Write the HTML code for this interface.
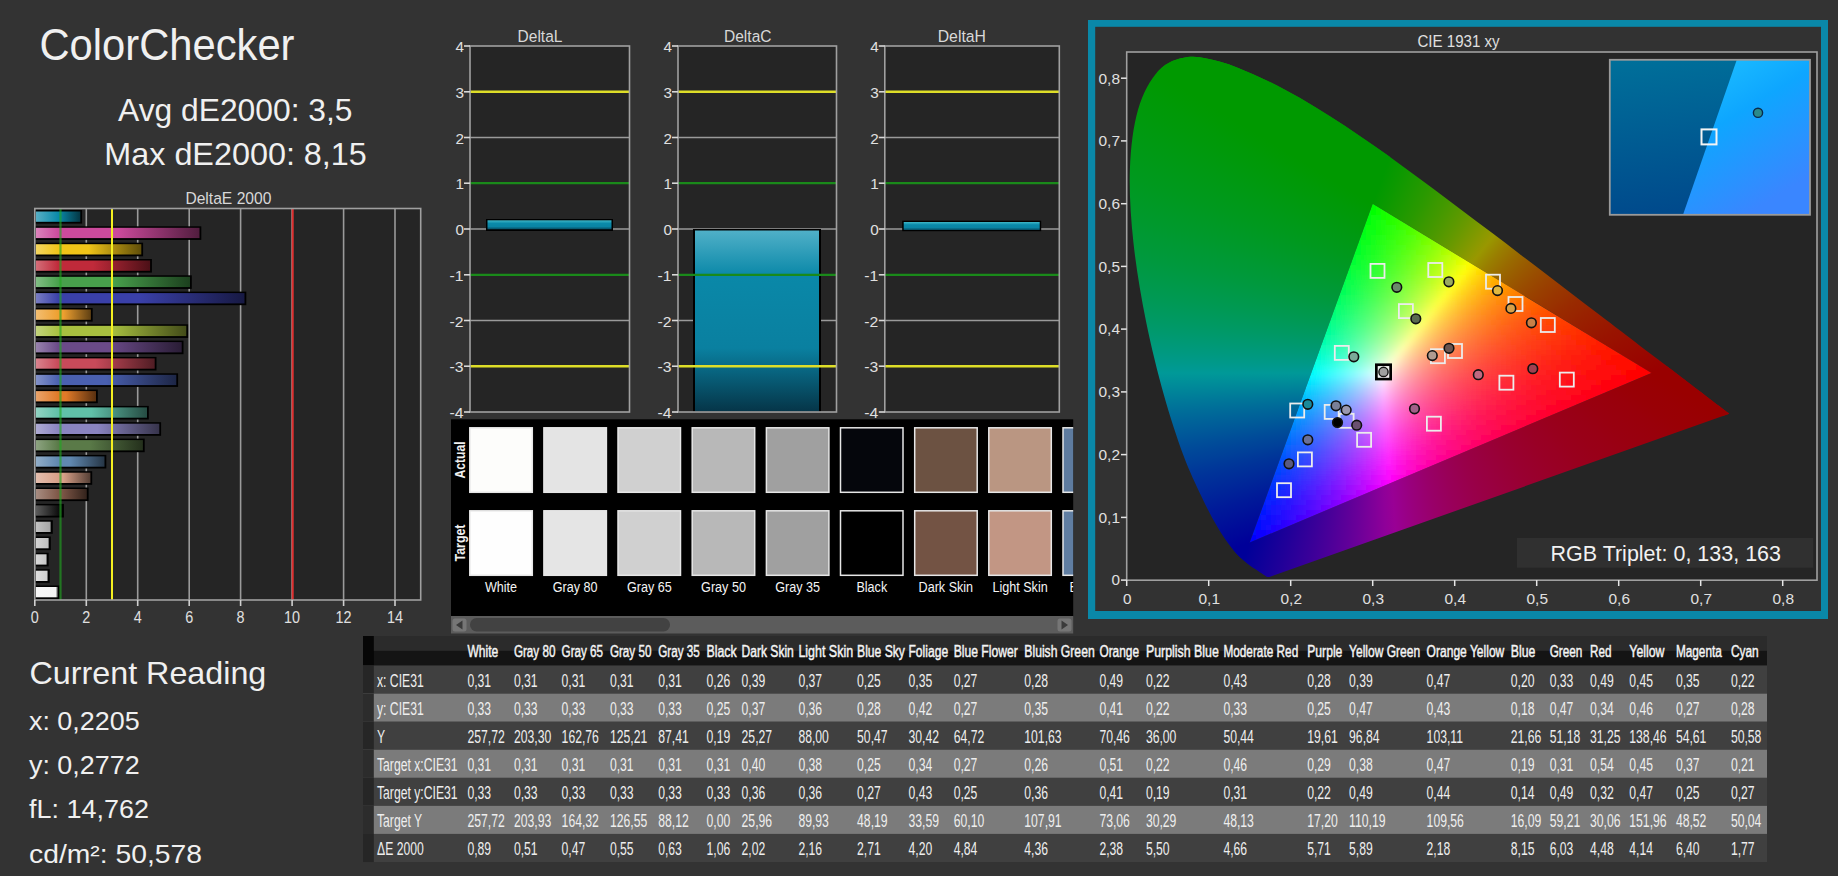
<!DOCTYPE html>
<html><head><meta charset="utf-8"><style>
html,body{margin:0;padding:0;background:#333333;width:1838px;height:876px;overflow:hidden;font-family:"Liberation Sans", sans-serif;}
svg{position:absolute;left:0;top:0;}
</style></head><body>
<svg width="1838" height="876" viewBox="0 0 1838 876" font-family='"Liberation Sans", sans-serif'>
<defs><linearGradient id="bg0" x1="0" x2="1" y1="0" y2="0"><stop offset="0" stop-color="#58afc5"/><stop offset="0.505" stop-color="#0a8aaa"/><stop offset="0.505" stop-color="#0a8aaa"/><stop offset="1" stop-color="#043744"/></linearGradient><linearGradient id="bg1" x1="0" x2="1" y1="0" y2="0"><stop offset="0" stop-color="#dc83bb"/><stop offset="0.140" stop-color="#cc4a9c"/><stop offset="0.500" stop-color="#cc4a9c"/><stop offset="1" stop-color="#511d3e"/></linearGradient><linearGradient id="bg2" x1="0" x2="1" y1="0" y2="0"><stop offset="0" stop-color="#f4d661"/><stop offset="0.216" stop-color="#f0c418"/><stop offset="0.500" stop-color="#f0c418"/><stop offset="1" stop-color="#604e09"/></linearGradient><linearGradient id="bg3" x1="0" x2="1" y1="0" y2="0"><stop offset="0" stop-color="#d46e79"/><stop offset="0.200" stop-color="#c02a3a"/><stop offset="0.500" stop-color="#c02a3a"/><stop offset="1" stop-color="#4c1017"/></linearGradient><linearGradient id="bg4" x1="0" x2="1" y1="0" y2="0"><stop offset="0" stop-color="#82be85"/><stop offset="0.148" stop-color="#48a04c"/><stop offset="0.500" stop-color="#48a04c"/><stop offset="1" stop-color="#1c401e"/></linearGradient><linearGradient id="bg5" x1="0" x2="1" y1="0" y2="0"><stop offset="0" stop-color="#797dc3"/><stop offset="0.110" stop-color="#3a40a8"/><stop offset="0.500" stop-color="#3a40a8"/><stop offset="1" stop-color="#171943"/></linearGradient><linearGradient id="bg6" x1="0" x2="1" y1="0" y2="0"><stop offset="0" stop-color="#f3be72"/><stop offset="0.410" stop-color="#eea030"/><stop offset="0.500" stop-color="#eea030"/><stop offset="1" stop-color="#5f4013"/></linearGradient><linearGradient id="bg7" x1="0" x2="1" y1="0" y2="0"><stop offset="0" stop-color="#c3d47d"/><stop offset="0.152" stop-color="#a8c040"/><stop offset="0.500" stop-color="#a8c040"/><stop offset="1" stop-color="#434c19"/></linearGradient><linearGradient id="bg8" x1="0" x2="1" y1="0" y2="0"><stop offset="0" stop-color="#9983ae"/><stop offset="0.157" stop-color="#6a4a88"/><stop offset="0.500" stop-color="#6a4a88"/><stop offset="1" stop-color="#2a1d36"/></linearGradient><linearGradient id="bg9" x1="0" x2="1" y1="0" y2="0"><stop offset="0" stop-color="#d9838e"/><stop offset="0.192" stop-color="#c84a5a"/><stop offset="0.500" stop-color="#c84a5a"/><stop offset="1" stop-color="#501d24"/></linearGradient><linearGradient id="bg10" x1="0" x2="1" y1="0" y2="0"><stop offset="0" stop-color="#8392c9"/><stop offset="0.163" stop-color="#4a60b0"/><stop offset="0.500" stop-color="#4a60b0"/><stop offset="1" stop-color="#1d2646"/></linearGradient><linearGradient id="bg11" x1="0" x2="1" y1="0" y2="0"><stop offset="0" stop-color="#e9a46c"/><stop offset="0.376" stop-color="#e07a28"/><stop offset="0.500" stop-color="#e07a28"/><stop offset="1" stop-color="#593010"/></linearGradient><linearGradient id="bg12" x1="0" x2="1" y1="0" y2="0"><stop offset="0" stop-color="#92d4c3"/><stop offset="0.205" stop-color="#60c0a8"/><stop offset="0.500" stop-color="#60c0a8"/><stop offset="1" stop-color="#264c43"/></linearGradient><linearGradient id="bg13" x1="0" x2="1" y1="0" y2="0"><stop offset="0" stop-color="#afabd4"/><stop offset="0.185" stop-color="#8a84c0"/><stop offset="0.500" stop-color="#8a84c0"/><stop offset="1" stop-color="#37344c"/></linearGradient><linearGradient id="bg14" x1="0" x2="1" y1="0" y2="0"><stop offset="0" stop-color="#8ea482"/><stop offset="0.213" stop-color="#5a7a48"/><stop offset="0.500" stop-color="#5a7a48"/><stop offset="1" stop-color="#24301c"/></linearGradient><linearGradient id="bg15" x1="0" x2="1" y1="0" y2="0"><stop offset="0" stop-color="#92aec9"/><stop offset="0.330" stop-color="#6088b0"/><stop offset="0.500" stop-color="#6088b0"/><stop offset="1" stop-color="#263646"/></linearGradient><linearGradient id="bg16" x1="0" x2="1" y1="0" y2="0"><stop offset="0" stop-color="#e4beae"/><stop offset="0.414" stop-color="#d8a088"/><stop offset="0.500" stop-color="#d8a088"/><stop offset="1" stop-color="#564036"/></linearGradient><linearGradient id="bg17" x1="0" x2="1" y1="0" y2="0"><stop offset="0" stop-color="#a88d82"/><stop offset="0.443" stop-color="#805848"/><stop offset="0.500" stop-color="#805848"/><stop offset="1" stop-color="#33231c"/></linearGradient><linearGradient id="bg18" x1="0" x2="1" y1="0" y2="0"><stop offset="0" stop-color="#5c5c5c"/><stop offset="0.843" stop-color="#101010"/><stop offset="0.843" stop-color="#101010"/><stop offset="1" stop-color="#060606"/></linearGradient><linearGradient id="bg19" x1="0" x2="1" y1="0" y2="0"><stop offset="0" stop-color="#c3c3c3"/><stop offset="0.900" stop-color="#a8a8a8"/><stop offset="0.900" stop-color="#a8a8a8"/><stop offset="1" stop-color="#434343"/></linearGradient><linearGradient id="bg20" x1="0" x2="1" y1="0" y2="0"><stop offset="0" stop-color="#d4d4d4"/><stop offset="0.900" stop-color="#c0c0c0"/><stop offset="0.900" stop-color="#c0c0c0"/><stop offset="1" stop-color="#4c4c4c"/></linearGradient><linearGradient id="bg21" x1="0" x2="1" y1="0" y2="0"><stop offset="0" stop-color="#d9d9d9"/><stop offset="0.900" stop-color="#c8c8c8"/><stop offset="0.900" stop-color="#c8c8c8"/><stop offset="1" stop-color="#505050"/></linearGradient><linearGradient id="bg22" x1="0" x2="1" y1="0" y2="0"><stop offset="0" stop-color="#dfdfdf"/><stop offset="0.900" stop-color="#d0d0d0"/><stop offset="0.900" stop-color="#d0d0d0"/><stop offset="1" stop-color="#535353"/></linearGradient><linearGradient id="bg23" x1="0" x2="1" y1="0" y2="0"><stop offset="0" stop-color="#f7f7f7"/><stop offset="0.900" stop-color="#f4f4f4"/><stop offset="0.900" stop-color="#f4f4f4"/><stop offset="1" stop-color="#616161"/></linearGradient><linearGradient id="gth" x1="0" x2="0" y1="0" y2="1"><stop offset="0" stop-color="#40b8c8"/><stop offset="0.35" stop-color="#0a8aaa"/><stop offset="0.7" stop-color="#0a84a4"/><stop offset="1" stop-color="#064a60"/></linearGradient><linearGradient id="gtv" x1="0" x2="0" y1="0" y2="1"><stop offset="0" stop-color="#50b0c8"/><stop offset="0.25" stop-color="#0a88a8"/><stop offset="0.65" stop-color="#0a80a0"/><stop offset="1" stop-color="#053548"/></linearGradient><clipPath id="triclip"><polygon points="1651.5,373.1 1372.7,203.7 1249.7,542.5"/></clipPath><filter id="blur" x="-5%" y="-5%" width="110%" height="110%"><feGaussianBlur stdDeviation="2.8"/></filter><linearGradient id="insL" x1="0" y1="0" x2="0.15" y2="1"><stop offset="0" stop-color="#00709a"/><stop offset="1" stop-color="#004a8c"/></linearGradient><linearGradient id="insR" x1="0" y1="0" x2="0.5" y2="1"><stop offset="0" stop-color="#20c4ff"/><stop offset="0.45" stop-color="#0ea6ff"/><stop offset="1" stop-color="#3a86ff"/></linearGradient></defs>
<text x="39.5" y="60.3" font-size="44.86" textLength="255.0" lengthAdjust="spacingAndGlyphs" fill="#f0f0f0" font-weight="normal" >ColorChecker</text><text x="118.0" y="120.6" font-size="31.43" textLength="234.5" lengthAdjust="spacingAndGlyphs" fill="#f0f0f0" font-weight="normal" >Avg dE2000: 3,5</text><text x="104.3" y="164.6" font-size="31.43" textLength="262.5" lengthAdjust="spacingAndGlyphs" fill="#f0f0f0" font-weight="normal" >Max dE2000: 8,15</text><text x="185.4" y="204.0" font-size="15.71" textLength="86.0" lengthAdjust="spacingAndGlyphs" fill="#d8d8d8" font-weight="normal" >DeltaE 2000</text><rect x="34.8" y="208.5" width="385.9" height="391.5" fill="#252525"/><line x1="86.3" y1="208.5" x2="86.3" y2="600" stroke="#9a9a9a" stroke-width="1.6"/><line x1="137.7" y1="208.5" x2="137.7" y2="600" stroke="#9a9a9a" stroke-width="1.6"/><line x1="189.2" y1="208.5" x2="189.2" y2="600" stroke="#9a9a9a" stroke-width="1.6"/><line x1="240.6" y1="208.5" x2="240.6" y2="600" stroke="#9a9a9a" stroke-width="1.6"/><line x1="292.1" y1="208.5" x2="292.1" y2="600" stroke="#9a9a9a" stroke-width="1.6"/><line x1="343.6" y1="208.5" x2="343.6" y2="600" stroke="#9a9a9a" stroke-width="1.6"/><line x1="395.0" y1="208.5" x2="395.0" y2="600" stroke="#9a9a9a" stroke-width="1.6"/><rect x="34.8" y="210.0" width="47.3" height="13.6" fill="#000"/><rect x="35.8" y="211.5" width="44.5" height="10.3" fill="url(#bg0)"/><rect x="34.8" y="226.3" width="166.5" height="13.6" fill="#000"/><rect x="35.8" y="227.8" width="163.7" height="10.3" fill="url(#bg1)"/><rect x="34.8" y="242.7" width="108.3" height="13.6" fill="#000"/><rect x="35.8" y="244.2" width="105.5" height="10.3" fill="url(#bg2)"/><rect x="34.8" y="259.0" width="117.1" height="13.6" fill="#000"/><rect x="35.8" y="260.5" width="114.3" height="10.3" fill="url(#bg3)"/><rect x="34.8" y="275.3" width="157.0" height="13.6" fill="#000"/><rect x="35.8" y="276.8" width="154.2" height="10.3" fill="url(#bg4)"/><rect x="34.8" y="291.6" width="211.5" height="13.6" fill="#000"/><rect x="35.8" y="293.1" width="208.7" height="10.3" fill="url(#bg5)"/><rect x="34.8" y="308.0" width="57.9" height="13.6" fill="#000"/><rect x="35.8" y="309.5" width="55.1" height="10.3" fill="url(#bg6)"/><rect x="34.8" y="324.3" width="153.3" height="13.6" fill="#000"/><rect x="35.8" y="325.8" width="150.5" height="10.3" fill="url(#bg7)"/><rect x="34.8" y="340.6" width="148.7" height="13.6" fill="#000"/><rect x="35.8" y="342.1" width="145.9" height="10.3" fill="url(#bg8)"/><rect x="34.8" y="356.9" width="121.7" height="13.6" fill="#000"/><rect x="35.8" y="358.4" width="118.9" height="10.3" fill="url(#bg9)"/><rect x="34.8" y="373.3" width="143.3" height="13.6" fill="#000"/><rect x="35.8" y="374.8" width="140.5" height="10.3" fill="url(#bg10)"/><rect x="34.8" y="389.6" width="63.0" height="13.6" fill="#000"/><rect x="35.8" y="391.1" width="60.2" height="10.3" fill="url(#bg11)"/><rect x="34.8" y="405.9" width="114.0" height="13.6" fill="#000"/><rect x="35.8" y="407.4" width="111.2" height="10.3" fill="url(#bg12)"/><rect x="34.8" y="422.2" width="126.3" height="13.6" fill="#000"/><rect x="35.8" y="423.7" width="123.5" height="10.3" fill="url(#bg13)"/><rect x="34.8" y="438.6" width="109.9" height="13.6" fill="#000"/><rect x="35.8" y="440.1" width="107.1" height="10.3" fill="url(#bg14)"/><rect x="34.8" y="454.9" width="71.5" height="13.6" fill="#000"/><rect x="35.8" y="456.4" width="68.7" height="10.3" fill="url(#bg15)"/><rect x="34.8" y="471.2" width="57.4" height="13.6" fill="#000"/><rect x="35.8" y="472.7" width="54.6" height="10.3" fill="url(#bg16)"/><rect x="34.8" y="487.5" width="53.8" height="13.6" fill="#000"/><rect x="35.8" y="489.0" width="51.0" height="10.3" fill="url(#bg17)"/><rect x="34.8" y="503.9" width="29.1" height="13.6" fill="#000"/><rect x="35.8" y="505.4" width="26.3" height="10.3" fill="url(#bg18)"/><rect x="34.8" y="520.2" width="18.0" height="13.6" fill="#000"/><rect x="35.8" y="521.7" width="15.2" height="10.3" fill="url(#bg19)"/><rect x="34.8" y="536.5" width="16.0" height="13.6" fill="#000"/><rect x="35.8" y="538.0" width="13.2" height="10.3" fill="url(#bg20)"/><rect x="34.8" y="552.8" width="13.9" height="13.6" fill="#000"/><rect x="35.8" y="554.3" width="11.1" height="10.3" fill="url(#bg21)"/><rect x="34.8" y="569.2" width="14.9" height="13.6" fill="#000"/><rect x="35.8" y="570.7" width="12.1" height="10.3" fill="url(#bg22)"/><rect x="34.8" y="585.5" width="24.7" height="13.6" fill="#000"/><rect x="35.8" y="587.0" width="21.9" height="10.3" fill="url(#bg23)"/><line x1="60.5" y1="208.5" x2="60.5" y2="600" stroke="#20a820" stroke-width="2.2" opacity="0.62"/><line x1="112.0" y1="208.5" x2="112.0" y2="600" stroke="#f4f020" stroke-width="2"/><line x1="292.7" y1="208.5" x2="292.7" y2="600" stroke="#e03030" stroke-width="2"/><rect x="34.8" y="208.5" width="385.9" height="391.5" fill="none" stroke="#a0a0a0" stroke-width="1.6"/><line x1="34.8" y1="600" x2="34.8" y2="606" stroke="#d0d0d0" stroke-width="1.6"/><text x="30.8" y="623.0" font-size="15.71" textLength="8.0" lengthAdjust="spacingAndGlyphs" fill="#e0e0e0" font-weight="normal" >0</text><line x1="86.3" y1="600" x2="86.3" y2="606" stroke="#d0d0d0" stroke-width="1.6"/><text x="82.3" y="623.0" font-size="15.71" textLength="8.0" lengthAdjust="spacingAndGlyphs" fill="#e0e0e0" font-weight="normal" >2</text><line x1="137.7" y1="600" x2="137.7" y2="606" stroke="#d0d0d0" stroke-width="1.6"/><text x="133.7" y="623.0" font-size="15.71" textLength="8.0" lengthAdjust="spacingAndGlyphs" fill="#e0e0e0" font-weight="normal" >4</text><line x1="189.2" y1="600" x2="189.2" y2="606" stroke="#d0d0d0" stroke-width="1.6"/><text x="185.2" y="623.0" font-size="15.71" textLength="8.0" lengthAdjust="spacingAndGlyphs" fill="#e0e0e0" font-weight="normal" >6</text><line x1="240.6" y1="600" x2="240.6" y2="606" stroke="#d0d0d0" stroke-width="1.6"/><text x="236.6" y="623.0" font-size="15.71" textLength="8.0" lengthAdjust="spacingAndGlyphs" fill="#e0e0e0" font-weight="normal" >8</text><line x1="292.1" y1="600" x2="292.1" y2="606" stroke="#d0d0d0" stroke-width="1.6"/><text x="284.1" y="623.0" font-size="15.71" textLength="16.0" lengthAdjust="spacingAndGlyphs" fill="#e0e0e0" font-weight="normal" >10</text><line x1="343.6" y1="600" x2="343.6" y2="606" stroke="#d0d0d0" stroke-width="1.6"/><text x="335.6" y="623.0" font-size="15.71" textLength="16.0" lengthAdjust="spacingAndGlyphs" fill="#e0e0e0" font-weight="normal" >12</text><line x1="395.0" y1="600" x2="395.0" y2="606" stroke="#d0d0d0" stroke-width="1.6"/><text x="387.0" y="623.0" font-size="15.71" textLength="16.0" lengthAdjust="spacingAndGlyphs" fill="#e0e0e0" font-weight="normal" >14</text><rect x="470" y="46" width="159.5" height="366" fill="#252525"/><line x1="470" y1="137.5" x2="629.5" y2="137.5" stroke="#9a9a9a" stroke-width="1.6"/><line x1="470" y1="229.0" x2="629.5" y2="229.0" stroke="#9a9a9a" stroke-width="1.6"/><line x1="470" y1="320.5" x2="629.5" y2="320.5" stroke="#9a9a9a" stroke-width="1.6"/><rect x="486" y="219" width="127" height="12" fill="#000"/><rect x="487.5" y="220.3" width="124" height="9" fill="url(#gth)"/><line x1="470" y1="183.2" x2="629.5" y2="183.2" stroke="#1a8a1a" stroke-width="2.2"/><line x1="470" y1="274.8" x2="629.5" y2="274.8" stroke="#1a8a1a" stroke-width="2.2"/><line x1="470" y1="91.8" x2="629.5" y2="91.8" stroke="#dede28" stroke-width="2.5"/><line x1="470" y1="366.2" x2="629.5" y2="366.2" stroke="#dede28" stroke-width="2.5"/><rect x="470" y="46" width="159.5" height="366" fill="none" stroke="#a0a0a0" stroke-width="1.6"/><line x1="464" y1="46.0" x2="470" y2="46.0" stroke="#d8d8d8" stroke-width="1.6"/><text x="455.5" y="52.2" font-size="14.71" textLength="8.5" lengthAdjust="spacingAndGlyphs" fill="#e0e0e0" font-weight="normal" >4</text><line x1="464" y1="91.8" x2="470" y2="91.8" stroke="#d8d8d8" stroke-width="1.6"/><text x="455.5" y="98.0" font-size="14.71" textLength="8.5" lengthAdjust="spacingAndGlyphs" fill="#e0e0e0" font-weight="normal" >3</text><line x1="464" y1="137.5" x2="470" y2="137.5" stroke="#d8d8d8" stroke-width="1.6"/><text x="455.5" y="143.7" font-size="14.71" textLength="8.5" lengthAdjust="spacingAndGlyphs" fill="#e0e0e0" font-weight="normal" >2</text><line x1="464" y1="183.2" x2="470" y2="183.2" stroke="#d8d8d8" stroke-width="1.6"/><text x="455.5" y="189.4" font-size="14.71" textLength="8.5" lengthAdjust="spacingAndGlyphs" fill="#e0e0e0" font-weight="normal" >1</text><line x1="464" y1="229.0" x2="470" y2="229.0" stroke="#d8d8d8" stroke-width="1.6"/><text x="455.5" y="235.2" font-size="14.71" textLength="8.5" lengthAdjust="spacingAndGlyphs" fill="#e0e0e0" font-weight="normal" >0</text><line x1="464" y1="274.8" x2="470" y2="274.8" stroke="#d8d8d8" stroke-width="1.6"/><text x="449.5" y="280.9" font-size="14.71" textLength="14.0" lengthAdjust="spacingAndGlyphs" fill="#e0e0e0" font-weight="normal" >-1</text><line x1="464" y1="320.5" x2="470" y2="320.5" stroke="#d8d8d8" stroke-width="1.6"/><text x="449.5" y="326.7" font-size="14.71" textLength="14.0" lengthAdjust="spacingAndGlyphs" fill="#e0e0e0" font-weight="normal" >-2</text><line x1="464" y1="366.2" x2="470" y2="366.2" stroke="#d8d8d8" stroke-width="1.6"/><text x="449.5" y="372.4" font-size="14.71" textLength="14.0" lengthAdjust="spacingAndGlyphs" fill="#e0e0e0" font-weight="normal" >-3</text><line x1="464" y1="412.0" x2="470" y2="412.0" stroke="#d8d8d8" stroke-width="1.6"/><text x="449.5" y="418.2" font-size="14.71" textLength="14.0" lengthAdjust="spacingAndGlyphs" fill="#e0e0e0" font-weight="normal" >-4</text><text x="517.6" y="41.5" font-size="16.43" textLength="44.8" lengthAdjust="spacingAndGlyphs" fill="#d8d8d8" font-weight="normal" >DeltaL</text><rect x="678" y="46" width="158.5" height="366" fill="#252525"/><line x1="678" y1="137.5" x2="836.5" y2="137.5" stroke="#9a9a9a" stroke-width="1.6"/><line x1="678" y1="229.0" x2="836.5" y2="229.0" stroke="#9a9a9a" stroke-width="1.6"/><line x1="678" y1="320.5" x2="836.5" y2="320.5" stroke="#9a9a9a" stroke-width="1.6"/><rect x="693" y="229" width="128" height="183" fill="#000"/><rect x="695" y="230.5" width="124" height="181" fill="url(#gtv)"/><line x1="678" y1="183.2" x2="836.5" y2="183.2" stroke="#1a8a1a" stroke-width="2.2"/><line x1="678" y1="274.8" x2="836.5" y2="274.8" stroke="#1a8a1a" stroke-width="2.2"/><line x1="678" y1="91.8" x2="836.5" y2="91.8" stroke="#dede28" stroke-width="2.5"/><line x1="678" y1="366.2" x2="836.5" y2="366.2" stroke="#dede28" stroke-width="2.5"/><rect x="678" y="46" width="158.5" height="366" fill="none" stroke="#a0a0a0" stroke-width="1.6"/><line x1="672" y1="46.0" x2="678" y2="46.0" stroke="#d8d8d8" stroke-width="1.6"/><text x="663.5" y="52.2" font-size="14.71" textLength="8.5" lengthAdjust="spacingAndGlyphs" fill="#e0e0e0" font-weight="normal" >4</text><line x1="672" y1="91.8" x2="678" y2="91.8" stroke="#d8d8d8" stroke-width="1.6"/><text x="663.5" y="98.0" font-size="14.71" textLength="8.5" lengthAdjust="spacingAndGlyphs" fill="#e0e0e0" font-weight="normal" >3</text><line x1="672" y1="137.5" x2="678" y2="137.5" stroke="#d8d8d8" stroke-width="1.6"/><text x="663.5" y="143.7" font-size="14.71" textLength="8.5" lengthAdjust="spacingAndGlyphs" fill="#e0e0e0" font-weight="normal" >2</text><line x1="672" y1="183.2" x2="678" y2="183.2" stroke="#d8d8d8" stroke-width="1.6"/><text x="663.5" y="189.4" font-size="14.71" textLength="8.5" lengthAdjust="spacingAndGlyphs" fill="#e0e0e0" font-weight="normal" >1</text><line x1="672" y1="229.0" x2="678" y2="229.0" stroke="#d8d8d8" stroke-width="1.6"/><text x="663.5" y="235.2" font-size="14.71" textLength="8.5" lengthAdjust="spacingAndGlyphs" fill="#e0e0e0" font-weight="normal" >0</text><line x1="672" y1="274.8" x2="678" y2="274.8" stroke="#d8d8d8" stroke-width="1.6"/><text x="657.5" y="280.9" font-size="14.71" textLength="14.0" lengthAdjust="spacingAndGlyphs" fill="#e0e0e0" font-weight="normal" >-1</text><line x1="672" y1="320.5" x2="678" y2="320.5" stroke="#d8d8d8" stroke-width="1.6"/><text x="657.5" y="326.7" font-size="14.71" textLength="14.0" lengthAdjust="spacingAndGlyphs" fill="#e0e0e0" font-weight="normal" >-2</text><line x1="672" y1="366.2" x2="678" y2="366.2" stroke="#d8d8d8" stroke-width="1.6"/><text x="657.5" y="372.4" font-size="14.71" textLength="14.0" lengthAdjust="spacingAndGlyphs" fill="#e0e0e0" font-weight="normal" >-3</text><line x1="672" y1="412.0" x2="678" y2="412.0" stroke="#d8d8d8" stroke-width="1.6"/><text x="657.5" y="418.2" font-size="14.71" textLength="14.0" lengthAdjust="spacingAndGlyphs" fill="#e0e0e0" font-weight="normal" >-4</text><text x="724.0" y="41.5" font-size="16.43" textLength="47.5" lengthAdjust="spacingAndGlyphs" fill="#d8d8d8" font-weight="normal" >DeltaC</text><rect x="884.8" y="46" width="174.5" height="366" fill="#252525"/><line x1="884.8" y1="137.5" x2="1059.3" y2="137.5" stroke="#9a9a9a" stroke-width="1.6"/><line x1="884.8" y1="229.0" x2="1059.3" y2="229.0" stroke="#9a9a9a" stroke-width="1.6"/><line x1="884.8" y1="320.5" x2="1059.3" y2="320.5" stroke="#9a9a9a" stroke-width="1.6"/><rect x="902.2" y="220.7" width="139" height="10.5" fill="#000"/><rect x="903.7" y="222" width="136" height="8" fill="url(#gth)"/><line x1="884.8" y1="183.2" x2="1059.3" y2="183.2" stroke="#1a8a1a" stroke-width="2.2"/><line x1="884.8" y1="274.8" x2="1059.3" y2="274.8" stroke="#1a8a1a" stroke-width="2.2"/><line x1="884.8" y1="91.8" x2="1059.3" y2="91.8" stroke="#dede28" stroke-width="2.5"/><line x1="884.8" y1="366.2" x2="1059.3" y2="366.2" stroke="#dede28" stroke-width="2.5"/><rect x="884.8" y="46" width="174.5" height="366" fill="none" stroke="#a0a0a0" stroke-width="1.6"/><line x1="878.8" y1="46.0" x2="884.8" y2="46.0" stroke="#d8d8d8" stroke-width="1.6"/><text x="870.3" y="52.2" font-size="14.71" textLength="8.5" lengthAdjust="spacingAndGlyphs" fill="#e0e0e0" font-weight="normal" >4</text><line x1="878.8" y1="91.8" x2="884.8" y2="91.8" stroke="#d8d8d8" stroke-width="1.6"/><text x="870.3" y="98.0" font-size="14.71" textLength="8.5" lengthAdjust="spacingAndGlyphs" fill="#e0e0e0" font-weight="normal" >3</text><line x1="878.8" y1="137.5" x2="884.8" y2="137.5" stroke="#d8d8d8" stroke-width="1.6"/><text x="870.3" y="143.7" font-size="14.71" textLength="8.5" lengthAdjust="spacingAndGlyphs" fill="#e0e0e0" font-weight="normal" >2</text><line x1="878.8" y1="183.2" x2="884.8" y2="183.2" stroke="#d8d8d8" stroke-width="1.6"/><text x="870.3" y="189.4" font-size="14.71" textLength="8.5" lengthAdjust="spacingAndGlyphs" fill="#e0e0e0" font-weight="normal" >1</text><line x1="878.8" y1="229.0" x2="884.8" y2="229.0" stroke="#d8d8d8" stroke-width="1.6"/><text x="870.3" y="235.2" font-size="14.71" textLength="8.5" lengthAdjust="spacingAndGlyphs" fill="#e0e0e0" font-weight="normal" >0</text><line x1="878.8" y1="274.8" x2="884.8" y2="274.8" stroke="#d8d8d8" stroke-width="1.6"/><text x="864.3" y="280.9" font-size="14.71" textLength="14.0" lengthAdjust="spacingAndGlyphs" fill="#e0e0e0" font-weight="normal" >-1</text><line x1="878.8" y1="320.5" x2="884.8" y2="320.5" stroke="#d8d8d8" stroke-width="1.6"/><text x="864.3" y="326.7" font-size="14.71" textLength="14.0" lengthAdjust="spacingAndGlyphs" fill="#e0e0e0" font-weight="normal" >-2</text><line x1="878.8" y1="366.2" x2="884.8" y2="366.2" stroke="#d8d8d8" stroke-width="1.6"/><text x="864.3" y="372.4" font-size="14.71" textLength="14.0" lengthAdjust="spacingAndGlyphs" fill="#e0e0e0" font-weight="normal" >-3</text><line x1="878.8" y1="412.0" x2="884.8" y2="412.0" stroke="#d8d8d8" stroke-width="1.6"/><text x="864.3" y="418.2" font-size="14.71" textLength="14.0" lengthAdjust="spacingAndGlyphs" fill="#e0e0e0" font-weight="normal" >-4</text><text x="937.7" y="41.5" font-size="16.43" textLength="48.3" lengthAdjust="spacingAndGlyphs" fill="#d8d8d8" font-weight="normal" >DeltaH</text><rect x="451" y="419.3" width="622.2" height="197" fill="#000"/><clipPath id="swclip"><rect x="451" y="419" width="622.2" height="200"/></clipPath><g clip-path="url(#swclip)"><rect x="469.8" y="427.8" width="62.5" height="64.5" fill="#fdfdfb" stroke="#e6e6e6" stroke-width="1.5"/><rect x="469.8" y="510.8" width="62.5" height="64.5" fill="#fefefe" stroke="#e6e6e6" stroke-width="1.5"/><text x="484.9" y="592.1" font-size="14.29" textLength="32.2" lengthAdjust="spacingAndGlyphs" fill="#f4f4f4" font-weight="normal" >White</text><rect x="543.9" y="427.8" width="62.5" height="64.5" fill="#e4e4e4" stroke="#e6e6e6" stroke-width="1.5"/><rect x="543.9" y="510.8" width="62.5" height="64.5" fill="#e5e5e5" stroke="#e6e6e6" stroke-width="1.5"/><text x="552.8" y="592.1" font-size="14.29" textLength="44.8" lengthAdjust="spacingAndGlyphs" fill="#f4f4f4" font-weight="normal" >Gray 80</text><rect x="618.0" y="427.8" width="62.5" height="64.5" fill="#d0d0d0" stroke="#e6e6e6" stroke-width="1.5"/><rect x="618.0" y="510.8" width="62.5" height="64.5" fill="#d0d0d0" stroke="#e6e6e6" stroke-width="1.5"/><text x="626.9" y="592.1" font-size="14.29" textLength="44.8" lengthAdjust="spacingAndGlyphs" fill="#f4f4f4" font-weight="normal" >Gray 65</text><rect x="692.2" y="427.8" width="62.5" height="64.5" fill="#b8b8b8" stroke="#e6e6e6" stroke-width="1.5"/><rect x="692.2" y="510.8" width="62.5" height="64.5" fill="#b8b8b8" stroke="#e6e6e6" stroke-width="1.5"/><text x="701.1" y="592.1" font-size="14.29" textLength="44.8" lengthAdjust="spacingAndGlyphs" fill="#f4f4f4" font-weight="normal" >Gray 50</text><rect x="766.4" y="427.8" width="62.5" height="64.5" fill="#a0a0a0" stroke="#e6e6e6" stroke-width="1.5"/><rect x="766.4" y="510.8" width="62.5" height="64.5" fill="#a0a0a0" stroke="#e6e6e6" stroke-width="1.5"/><text x="775.2" y="592.1" font-size="14.29" textLength="44.8" lengthAdjust="spacingAndGlyphs" fill="#f4f4f4" font-weight="normal" >Gray 35</text><rect x="840.5" y="427.8" width="62.5" height="64.5" fill="#05060c" stroke="#e6e6e6" stroke-width="1.5"/><rect x="840.5" y="510.8" width="62.5" height="64.5" fill="#000000" stroke="#e6e6e6" stroke-width="1.5"/><text x="856.4" y="592.1" font-size="14.29" textLength="30.8" lengthAdjust="spacingAndGlyphs" fill="#f4f4f4" font-weight="normal" >Black</text><rect x="914.7" y="427.8" width="62.5" height="64.5" fill="#6c5242" stroke="#e6e6e6" stroke-width="1.5"/><rect x="914.7" y="510.8" width="62.5" height="64.5" fill="#735344" stroke="#e6e6e6" stroke-width="1.5"/><text x="918.6" y="592.1" font-size="14.29" textLength="54.5" lengthAdjust="spacingAndGlyphs" fill="#f4f4f4" font-weight="normal" >Dark Skin</text><rect x="988.8" y="427.8" width="62.5" height="64.5" fill="#ba9682" stroke="#e6e6e6" stroke-width="1.5"/><rect x="988.8" y="510.8" width="62.5" height="64.5" fill="#c29684" stroke="#e6e6e6" stroke-width="1.5"/><text x="992.4" y="592.1" font-size="14.29" textLength="55.3" lengthAdjust="spacingAndGlyphs" fill="#f4f4f4" font-weight="normal" >Light Skin</text><rect x="1063.0" y="427.8" width="62.5" height="64.5" fill="#5e7ca0" stroke="#e6e6e6" stroke-width="1.5"/><rect x="1063.0" y="510.8" width="62.5" height="64.5" fill="#607ea2" stroke="#e6e6e6" stroke-width="1.5"/><text x="1069.4" y="592.1" font-size="14.29" textLength="49.7" lengthAdjust="spacingAndGlyphs" fill="#f4f4f4" font-weight="normal" >Blue Sky</text></g><text x="0" y="0" font-size="14" font-weight="bold" fill="#f0f0f0" textLength="37" lengthAdjust="spacingAndGlyphs" transform="translate(465.2,478.5) rotate(-90)">Actual</text><text x="0" y="0" font-size="14" font-weight="bold" fill="#f0f0f0" textLength="37" lengthAdjust="spacingAndGlyphs" transform="translate(465.2,561.5) rotate(-90)">Target</text><rect x="451" y="616" width="622.2" height="17.5" fill="#5c5c5c"/><rect x="470" y="618" width="200" height="13.5" rx="6.5" fill="#424242"/><rect x="452.5" y="618.5" width="14" height="13" rx="2.5" fill="#767676"/><path d="M462.5 620.5 L456 625 L462.5 629.5 Z" fill="#3a3a3a"/><rect x="1057.5" y="618.5" width="14" height="13" rx="2.5" fill="#767676"/><path d="M1061.5 620.5 L1068 625 L1061.5 629.5 Z" fill="#3a3a3a"/><rect x="1088" y="20" width="740" height="599" fill="#0a88a8"/><rect x="1095.2" y="26.8" width="725.8" height="584.2" fill="#323232"/><rect x="1126.7" y="52" width="690.3" height="528.2" fill="#252525"/><text x="1417.4" y="47.1" font-size="16.29" textLength="82.3" lengthAdjust="spacingAndGlyphs" fill="#e0e0e0" font-weight="normal" >CIE 1931 xy</text>
</svg>
<div style="position:absolute;left:1126px;top:52px;width:700px;height:540px;clip-path:path('M143.5 525.0C143.1 525.0 141.8 525.0 141.2 524.9C140.7 524.8 140.7 524.6 140.3 524.5C140.0 524.3 139.7 524.1 139.2 523.8C138.7 523.5 138.2 523.1 137.6 522.7C136.9 522.3 136.3 521.8 135.5 521.3C134.7 520.7 133.9 520.2 132.8 519.4C131.7 518.7 130.5 517.9 129.1 517.0C127.7 516.1 126.2 515.1 124.5 513.9C122.8 512.6 120.9 511.3 118.8 509.5C116.7 507.7 114.5 506.0 111.8 503.1C109.1 500.1 106.0 496.7 102.5 491.8C98.9 486.9 95.1 481.5 90.6 473.6C86.1 465.8 81.2 456.8 75.6 444.8C70.0 432.9 63.3 419.2 57.0 402.2C50.8 385.2 44.1 365.2 37.9 343.0C31.8 320.8 25.1 294.6 20.0 269.2C14.9 243.7 10.1 215.6 7.4 190.3C4.7 165.0 3.1 139.4 3.9 117.3C4.7 95.1 7.3 73.9 12.1 57.4C16.9 41.0 24.3 27.4 32.6 18.7C40.9 9.9 51.3 6.5 61.6 5.0C71.9 3.5 83.4 6.8 94.3 9.7C105.3 12.7 116.8 17.8 127.6 22.5C138.3 27.1 148.6 32.3 158.9 37.7C169.1 43.1 179.0 48.9 189.0 54.9C198.9 60.8 208.8 67.2 218.7 73.7C228.5 80.2 238.2 86.9 248.0 93.8C257.8 100.6 267.5 107.6 277.3 114.7C287.1 121.8 296.9 129.0 306.6 136.3C316.4 143.5 326.1 150.9 335.8 158.2C345.5 165.5 355.3 172.8 364.9 180.1C374.4 187.3 384.0 194.6 393.3 201.7C402.7 208.8 411.9 215.9 421.0 222.8C430.0 229.7 438.9 236.5 447.4 243.0C456.0 249.5 464.4 255.9 472.4 262.0C480.3 268.0 488.0 273.9 495.1 279.3C502.2 284.7 508.6 289.7 514.8 294.4C521.0 299.1 526.9 303.6 532.2 307.6C537.5 311.7 542.3 315.2 546.7 318.5C551.0 321.9 554.9 324.8 558.4 327.5C561.9 330.2 564.9 332.5 567.7 334.7C570.5 336.8 573.0 338.6 575.2 340.3C577.4 342.0 579.3 343.5 581.2 344.9C583.0 346.3 584.7 347.6 586.2 348.7C587.7 349.9 589.0 350.9 590.3 351.9C591.5 352.8 592.6 353.6 593.6 354.3C594.5 355.0 595.1 355.5 596.0 356.2C597.0 356.9 598.3 357.9 599.3 358.7C600.3 359.5 601.4 360.3 602.1 360.8C602.7 361.3 603.0 361.5 603.2 361.7Z');"><div style="position:absolute;left:0;top:0;width:700px;height:540px;background:conic-gradient(from 0deg at 525.5px 321.1px, rgb(0, 0, 153) 0deg, rgb(0, 0, 153) 247.14deg, rgb(0,0,153) 247.14deg, rgb(0,3,153) 247.87deg, rgb(0,7,153) 248.62deg, rgb(0,10,153) 249.39deg, rgb(0,14,153) 250.17deg, rgb(0,18,153) 250.98deg, rgb(0,22,153) 251.80deg, rgb(0,26,153) 252.64deg, rgb(0,31,153) 253.50deg, rgb(0,36,153) 254.38deg, rgb(0,41,153) 255.28deg, rgb(0,46,153) 256.20deg, rgb(0,51,153) 257.14deg, rgb(0,57,153) 258.10deg, rgb(0,64,153) 259.08deg, rgb(0,70,153) 260.08deg, rgb(0,77,153) 261.11deg, rgb(0,85,153) 262.15deg, rgb(0,93,153) 263.21deg, rgb(0,101,153) 264.29deg, rgb(0,110,153) 265.40deg, rgb(0,120,153) 266.52deg, rgb(0,131,153) 267.66deg, rgb(0,142,153) 268.82deg, rgb(0,153,152) 270.00deg, rgb(0,153,139) 271.20deg, rgb(0,153,128) 272.41deg, rgb(0,153,118) 273.64deg, rgb(0,153,108) 274.89deg, rgb(0,153,99) 276.15deg, rgb(0,153,91) 277.43deg, rgb(0,153,83) 278.71deg, rgb(0,153,76) 280.01deg, rgb(0,153,69) 281.32deg, rgb(0,153,62) 282.64deg, rgb(0,153,56) 283.97deg, rgb(0,153,51) 285.30deg, rgb(0,153,45) 286.64deg, rgb(0,153,40) 287.98deg, rgb(0,153,35) 289.33deg, rgb(0,153,30) 290.67deg, rgb(0,153,26) 292.02deg, rgb(0,153,22) 293.36deg, rgb(0,153,18) 294.70deg, rgb(0,153,14) 296.03deg, rgb(0,153,10) 297.36deg, rgb(0,153,7) 298.67deg, rgb(0,153,3) 299.98deg, rgb(0,153,0) 301.28deg, rgb(0, 153, 0) 360deg);clip-path:polygon(1270.5px -2668.3px, -777.1px 2971.6px, -3597.0px 1947.8px, -1549.4px -3692.0px);"></div><div style="position:absolute;left:0;top:0;width:700px;height:540px;background:conic-gradient(from 0deg at 123.7px 490.5px, rgb(0, 153, 0) 0deg, rgb(0,153,0) 19.95deg, rgb(6,153,0) 21.02deg, rgb(12,153,0) 22.09deg, rgb(19,153,0) 23.16deg, rgb(26,153,0) 24.25deg, rgb(33,153,0) 25.33deg, rgb(40,153,0) 26.43deg, rgb(48,153,0) 27.52deg, rgb(57,153,0) 28.62deg, rgb(65,153,0) 29.72deg, rgb(74,153,0) 30.82deg, rgb(84,153,0) 31.92deg, rgb(94,153,0) 33.03deg, rgb(105,153,0) 34.13deg, rgb(117,153,0) 35.22deg, rgb(129,153,0) 36.32deg, rgb(141,153,0) 37.41deg, rgb(153,151,0) 38.50deg, rgb(153,138,0) 39.58deg, rgb(153,126,0) 40.65deg, rgb(153,116,0) 41.72deg, rgb(153,106,0) 42.79deg, rgb(153,98,0) 43.84deg, rgb(153,90,0) 44.88deg, rgb(153,83,0) 45.92deg, rgb(153,76,0) 46.95deg, rgb(153,70,0) 47.96deg, rgb(153,64,0) 48.97deg, rgb(153,59,0) 49.96deg, rgb(153,54,0) 50.95deg, rgb(153,50,0) 51.92deg, rgb(153,45,0) 52.88deg, rgb(153,41,0) 53.82deg, rgb(153,38,0) 54.76deg, rgb(153,34,0) 55.68deg, rgb(153,31,0) 56.58deg, rgb(153,28,0) 57.48deg, rgb(153,25,0) 58.36deg, rgb(153,22,0) 59.23deg, rgb(153,19,0) 60.08deg, rgb(153,17,0) 60.92deg, rgb(153,14,0) 61.74deg, rgb(153,12,0) 62.56deg, rgb(153,10,0) 63.35deg, rgb(153,8,0) 64.14deg, rgb(153,6,0) 64.91deg, rgb(153,4,0) 65.67deg, rgb(153,2,0) 66.41deg, rgb(153,0,0) 67.14deg, rgb(153, 0, 0) 200deg, rgb(0, 153, 0) 200deg);clip-path:polygon(-2317.1px -1406.1px, 2810.5px 1709.4px, 4368.3px -854.4px, -759.4px -3970.0px);"></div><div style="position:absolute;left:0;top:0;width:700px;height:540px;background:conic-gradient(from 0deg at 246.7px 151.7px, rgb(153, 0, 0) 0deg, rgb(153,0,0) 121.28deg, rgb(153,0,2) 122.60deg, rgb(153,0,4) 123.95deg, rgb(153,0,5) 125.35deg, rgb(153,0,7) 126.80deg, rgb(153,0,10) 128.29deg, rgb(153,0,12) 129.82deg, rgb(153,0,14) 131.39deg, rgb(153,0,16) 133.01deg, rgb(153,0,19) 134.67deg, rgb(153,0,22) 136.38deg, rgb(153,0,24) 138.12deg, rgb(153,0,27) 139.89deg, rgb(153,0,30) 141.71deg, rgb(153,0,34) 143.55deg, rgb(153,0,37) 145.42deg, rgb(153,0,41) 147.32deg, rgb(153,0,45) 149.25deg, rgb(153,0,49) 151.19deg, rgb(153,0,54) 153.14deg, rgb(153,0,59) 155.10deg, rgb(153,0,64) 157.07deg, rgb(153,0,69) 159.04deg, rgb(153,0,75) 161.00deg, rgb(153,0,82) 162.96deg, rgb(153,0,89) 164.90deg, rgb(153,0,97) 166.82deg, rgb(153,0,105) 168.72deg, rgb(153,0,115) 170.60deg, rgb(153,0,125) 172.44deg, rgb(153,0,137) 174.26deg, rgb(153,0,149) 176.04deg, rgb(143,0,153) 177.78deg, rgb(130,0,153) 179.49deg, rgb(118,0,153) 181.15deg, rgb(106,0,153) 182.77deg, rgb(95,0,153) 184.35deg, rgb(85,0,153) 185.89deg, rgb(75,0,153) 187.38deg, rgb(66,0,153) 188.82deg, rgb(57,0,153) 190.23deg, rgb(49,0,153) 191.59deg, rgb(41,0,153) 192.91deg, rgb(33,0,153) 194.18deg, rgb(26,0,153) 195.41deg, rgb(19,0,153) 196.61deg, rgb(12,0,153) 197.76deg, rgb(6,0,153) 198.88deg, rgb(0,0,153) 199.95deg, rgb(0, 0, 153) 360deg);clip-path:polygon(3289.9px -844.4px, -2238.9px 1486.5px, -1073.4px 4250.9px, 4455.3px 1920.0px);"></div></div>
<svg width="1838" height="876" viewBox="0 0 1838 876" font-family='"Liberation Sans", sans-serif'>
<g clip-path="url(#triclip)"><g filter="url(#blur)"><rect x="1361" y="195" width="15" height="5" fill="#00ff00"/><rect x="1376" y="195" width="5" height="5" fill="#05ff00"/><rect x="1381" y="195" width="5" height="5" fill="#0cff00"/><rect x="1361" y="200" width="5" height="5" fill="#00ff03"/><rect x="1366" y="200" width="5" height="5" fill="#00ff01"/><rect x="1371" y="200" width="5" height="5" fill="#01ff00"/><rect x="1376" y="200" width="5" height="5" fill="#07ff00"/><rect x="1381" y="200" width="5" height="5" fill="#0fff00"/><rect x="1386" y="200" width="5" height="5" fill="#16ff00"/><rect x="1391" y="200" width="5" height="5" fill="#1dff00"/><rect x="1361" y="205" width="5" height="5" fill="#00ff06"/><rect x="1366" y="205" width="5" height="5" fill="#00ff04"/><rect x="1371" y="205" width="5" height="5" fill="#03ff02"/><rect x="1376" y="205" width="5" height="5" fill="#0aff00"/><rect x="1381" y="205" width="5" height="5" fill="#11ff00"/><rect x="1386" y="205" width="5" height="5" fill="#19ff00"/><rect x="1391" y="205" width="5" height="5" fill="#20ff00"/><rect x="1396" y="205" width="5" height="5" fill="#28ff00"/><rect x="1356" y="210" width="5" height="5" fill="#00ff0b"/><rect x="1361" y="210" width="5" height="5" fill="#00ff09"/><rect x="1366" y="210" width="5" height="5" fill="#00ff07"/><rect x="1371" y="210" width="5" height="5" fill="#06ff05"/><rect x="1376" y="210" width="5" height="5" fill="#0dff03"/><rect x="1381" y="210" width="5" height="5" fill="#14ff01"/><rect x="1386" y="210" width="5" height="5" fill="#1cff00"/><rect x="1391" y="210" width="5" height="5" fill="#23ff00"/><rect x="1396" y="210" width="5" height="5" fill="#2bff00"/><rect x="1401" y="210" width="5" height="5" fill="#33ff00"/><rect x="1406" y="210" width="5" height="5" fill="#3bff00"/><rect x="1356" y="215" width="5" height="5" fill="#00ff0e"/><rect x="1361" y="215" width="5" height="5" fill="#00ff0c"/><rect x="1366" y="215" width="5" height="5" fill="#01ff0a"/><rect x="1371" y="215" width="5" height="5" fill="#08ff09"/><rect x="1376" y="215" width="5" height="5" fill="#10ff07"/><rect x="1381" y="215" width="5" height="5" fill="#17ff05"/><rect x="1386" y="215" width="5" height="5" fill="#1fff03"/><rect x="1391" y="215" width="5" height="5" fill="#27ff01"/><rect x="1396" y="215" width="5" height="5" fill="#2fff00"/><rect x="1401" y="215" width="5" height="5" fill="#37ff00"/><rect x="1406" y="215" width="5" height="5" fill="#3fff00"/><rect x="1411" y="215" width="5" height="5" fill="#47ff00"/><rect x="1416" y="215" width="5" height="5" fill="#50ff00"/><rect x="1351" y="220" width="5" height="5" fill="#00ff13"/><rect x="1356" y="220" width="5" height="5" fill="#00ff12"/><rect x="1361" y="220" width="5" height="5" fill="#00ff10"/><rect x="1366" y="220" width="5" height="5" fill="#04ff0e"/><rect x="1371" y="220" width="5" height="5" fill="#0bff0c"/><rect x="1376" y="220" width="5" height="5" fill="#13ff0a"/><rect x="1381" y="220" width="5" height="5" fill="#1bff08"/><rect x="1386" y="220" width="5" height="5" fill="#22ff06"/><rect x="1391" y="220" width="5" height="5" fill="#2aff04"/><rect x="1396" y="220" width="5" height="5" fill="#32ff02"/><rect x="1401" y="220" width="5" height="5" fill="#3bff00"/><rect x="1406" y="220" width="5" height="5" fill="#43ff00"/><rect x="1411" y="220" width="5" height="5" fill="#4cff00"/><rect x="1416" y="220" width="5" height="5" fill="#54ff00"/><rect x="1421" y="220" width="5" height="5" fill="#5dff00"/><rect x="1351" y="225" width="5" height="5" fill="#00ff17"/><rect x="1356" y="225" width="5" height="5" fill="#00ff15"/><rect x="1361" y="225" width="5" height="5" fill="#00ff13"/><rect x="1366" y="225" width="5" height="5" fill="#07ff11"/><rect x="1371" y="225" width="5" height="5" fill="#0eff10"/><rect x="1376" y="225" width="5" height="5" fill="#16ff0e"/><rect x="1381" y="225" width="5" height="5" fill="#1eff0c"/><rect x="1386" y="225" width="5" height="5" fill="#26ff0a"/><rect x="1391" y="225" width="5" height="5" fill="#2eff08"/><rect x="1396" y="225" width="5" height="5" fill="#36ff06"/><rect x="1401" y="225" width="5" height="5" fill="#3fff04"/><rect x="1406" y="225" width="5" height="5" fill="#47ff01"/><rect x="1411" y="225" width="5" height="5" fill="#50ff00"/><rect x="1416" y="225" width="5" height="5" fill="#59ff00"/><rect x="1421" y="225" width="5" height="5" fill="#62ff00"/><rect x="1426" y="225" width="5" height="5" fill="#6bff00"/><rect x="1431" y="225" width="5" height="5" fill="#74ff00"/><rect x="1351" y="230" width="5" height="5" fill="#00ff1b"/><rect x="1356" y="230" width="5" height="5" fill="#00ff19"/><rect x="1361" y="230" width="5" height="5" fill="#02ff17"/><rect x="1366" y="230" width="5" height="5" fill="#0aff15"/><rect x="1371" y="230" width="5" height="5" fill="#11ff13"/><rect x="1376" y="230" width="5" height="5" fill="#19ff11"/><rect x="1381" y="230" width="5" height="5" fill="#21ff0f"/><rect x="1386" y="230" width="5" height="5" fill="#2aff0d"/><rect x="1391" y="230" width="5" height="5" fill="#32ff0b"/><rect x="1396" y="230" width="5" height="5" fill="#3aff09"/><rect x="1401" y="230" width="5" height="5" fill="#43ff07"/><rect x="1406" y="230" width="5" height="5" fill="#4cff05"/><rect x="1411" y="230" width="5" height="5" fill="#55ff03"/><rect x="1416" y="230" width="5" height="5" fill="#5eff01"/><rect x="1421" y="230" width="5" height="5" fill="#67ff00"/><rect x="1426" y="230" width="5" height="5" fill="#70ff00"/><rect x="1431" y="230" width="5" height="5" fill="#7aff00"/><rect x="1436" y="230" width="5" height="5" fill="#84ff00"/><rect x="1346" y="235" width="5" height="5" fill="#00ff20"/><rect x="1351" y="235" width="5" height="5" fill="#00ff1f"/><rect x="1356" y="235" width="5" height="5" fill="#00ff1d"/><rect x="1361" y="235" width="5" height="5" fill="#05ff1b"/><rect x="1366" y="235" width="5" height="5" fill="#0dff19"/><rect x="1371" y="235" width="5" height="5" fill="#15ff17"/><rect x="1376" y="235" width="5" height="5" fill="#1dff15"/><rect x="1381" y="235" width="5" height="5" fill="#25ff13"/><rect x="1386" y="235" width="5" height="5" fill="#2dff11"/><rect x="1391" y="235" width="5" height="5" fill="#36ff0f"/><rect x="1396" y="235" width="5" height="5" fill="#3fff0d"/><rect x="1401" y="235" width="5" height="5" fill="#47ff0b"/><rect x="1406" y="235" width="5" height="5" fill="#50ff09"/><rect x="1411" y="235" width="5" height="5" fill="#59ff07"/><rect x="1416" y="235" width="5" height="5" fill="#63ff05"/><rect x="1421" y="235" width="5" height="5" fill="#6cff02"/><rect x="1426" y="235" width="5" height="5" fill="#76ff00"/><rect x="1431" y="235" width="5" height="5" fill="#80ff00"/><rect x="1436" y="235" width="5" height="5" fill="#8aff00"/><rect x="1441" y="235" width="5" height="5" fill="#94ff00"/><rect x="1446" y="235" width="5" height="5" fill="#9eff00"/><rect x="1346" y="240" width="5" height="5" fill="#00ff24"/><rect x="1351" y="240" width="5" height="5" fill="#00ff23"/><rect x="1356" y="240" width="5" height="5" fill="#00ff21"/><rect x="1361" y="240" width="5" height="5" fill="#08ff1f"/><rect x="1366" y="240" width="5" height="5" fill="#10ff1d"/><rect x="1371" y="240" width="5" height="5" fill="#18ff1b"/><rect x="1376" y="240" width="5" height="5" fill="#20ff19"/><rect x="1381" y="240" width="5" height="5" fill="#29ff17"/><rect x="1386" y="240" width="5" height="5" fill="#31ff15"/><rect x="1391" y="240" width="5" height="5" fill="#3aff13"/><rect x="1396" y="240" width="5" height="5" fill="#43ff11"/><rect x="1401" y="240" width="5" height="5" fill="#4cff0f"/><rect x="1406" y="240" width="5" height="5" fill="#55ff0d"/><rect x="1411" y="240" width="5" height="5" fill="#5fff0b"/><rect x="1416" y="240" width="5" height="5" fill="#68ff08"/><rect x="1421" y="240" width="5" height="5" fill="#72ff06"/><rect x="1426" y="240" width="5" height="5" fill="#7cff04"/><rect x="1431" y="240" width="5" height="5" fill="#86ff02"/><rect x="1436" y="240" width="5" height="5" fill="#90ff00"/><rect x="1441" y="240" width="5" height="5" fill="#9bff00"/><rect x="1446" y="240" width="5" height="5" fill="#a5ff00"/><rect x="1451" y="240" width="5" height="5" fill="#b0ff00"/><rect x="1456" y="240" width="5" height="5" fill="#bbff00"/><rect x="1346" y="245" width="5" height="5" fill="#00ff29"/><rect x="1351" y="245" width="5" height="5" fill="#00ff27"/><rect x="1356" y="245" width="5" height="5" fill="#03ff25"/><rect x="1361" y="245" width="5" height="5" fill="#0bff23"/><rect x="1366" y="245" width="5" height="5" fill="#13ff21"/><rect x="1371" y="245" width="5" height="5" fill="#1bff1f"/><rect x="1376" y="245" width="5" height="5" fill="#24ff1d"/><rect x="1381" y="245" width="5" height="5" fill="#2dff1b"/><rect x="1386" y="245" width="5" height="5" fill="#35ff19"/><rect x="1391" y="245" width="5" height="5" fill="#3eff17"/><rect x="1396" y="245" width="5" height="5" fill="#47ff15"/><rect x="1401" y="245" width="5" height="5" fill="#51ff13"/><rect x="1406" y="245" width="5" height="5" fill="#5aff11"/><rect x="1411" y="245" width="5" height="5" fill="#64ff0f"/><rect x="1416" y="245" width="5" height="5" fill="#6eff0d"/><rect x="1421" y="245" width="5" height="5" fill="#78ff0a"/><rect x="1426" y="245" width="5" height="5" fill="#82ff08"/><rect x="1431" y="245" width="5" height="5" fill="#8cff06"/><rect x="1436" y="245" width="5" height="5" fill="#97ff03"/><rect x="1441" y="245" width="5" height="5" fill="#a2ff01"/><rect x="1446" y="245" width="5" height="5" fill="#adff00"/><rect x="1451" y="245" width="5" height="5" fill="#b8ff00"/><rect x="1456" y="245" width="5" height="5" fill="#c3ff00"/><rect x="1461" y="245" width="5" height="5" fill="#cfff00"/><rect x="1341" y="250" width="5" height="5" fill="#00ff2f"/><rect x="1346" y="250" width="5" height="5" fill="#00ff2d"/><rect x="1351" y="250" width="5" height="5" fill="#00ff2b"/><rect x="1356" y="250" width="5" height="5" fill="#06ff29"/><rect x="1361" y="250" width="5" height="5" fill="#0eff27"/><rect x="1366" y="250" width="5" height="5" fill="#16ff26"/><rect x="1371" y="250" width="5" height="5" fill="#1fff24"/><rect x="1376" y="250" width="5" height="5" fill="#28ff22"/><rect x="1381" y="250" width="5" height="5" fill="#31ff20"/><rect x="1386" y="250" width="5" height="5" fill="#3aff1e"/><rect x="1391" y="250" width="5" height="5" fill="#43ff1c"/><rect x="1396" y="250" width="5" height="5" fill="#4cff1a"/><rect x="1401" y="250" width="5" height="5" fill="#56ff17"/><rect x="1406" y="250" width="5" height="5" fill="#5fff15"/><rect x="1411" y="250" width="5" height="5" fill="#69ff13"/><rect x="1416" y="250" width="5" height="5" fill="#73ff11"/><rect x="1421" y="250" width="5" height="5" fill="#7eff0f"/><rect x="1426" y="250" width="5" height="5" fill="#88ff0c"/><rect x="1431" y="250" width="5" height="5" fill="#93ff0a"/><rect x="1436" y="250" width="5" height="5" fill="#9eff07"/><rect x="1441" y="250" width="5" height="5" fill="#a9ff05"/><rect x="1446" y="250" width="5" height="5" fill="#b4ff02"/><rect x="1451" y="250" width="5" height="5" fill="#c0ff00"/><rect x="1456" y="250" width="5" height="5" fill="#ccff00"/><rect x="1461" y="250" width="5" height="5" fill="#d8ff00"/><rect x="1466" y="250" width="5" height="5" fill="#e4ff00"/><rect x="1471" y="250" width="5" height="5" fill="#f1ff00"/><rect x="1341" y="255" width="5" height="5" fill="#00ff33"/><rect x="1346" y="255" width="5" height="5" fill="#00ff31"/><rect x="1351" y="255" width="5" height="5" fill="#01ff30"/><rect x="1356" y="255" width="5" height="5" fill="#09ff2e"/><rect x="1361" y="255" width="5" height="5" fill="#11ff2c"/><rect x="1366" y="255" width="5" height="5" fill="#1aff2a"/><rect x="1371" y="255" width="5" height="5" fill="#23ff28"/><rect x="1376" y="255" width="5" height="5" fill="#2cff26"/><rect x="1381" y="255" width="5" height="5" fill="#35ff24"/><rect x="1386" y="255" width="5" height="5" fill="#3eff22"/><rect x="1391" y="255" width="5" height="5" fill="#48ff20"/><rect x="1396" y="255" width="5" height="5" fill="#51ff1e"/><rect x="1401" y="255" width="5" height="5" fill="#5bff1c"/><rect x="1406" y="255" width="5" height="5" fill="#65ff1a"/><rect x="1411" y="255" width="5" height="5" fill="#6fff18"/><rect x="1416" y="255" width="5" height="5" fill="#7aff15"/><rect x="1421" y="255" width="5" height="5" fill="#84ff13"/><rect x="1426" y="255" width="5" height="5" fill="#8fff11"/><rect x="1431" y="255" width="5" height="5" fill="#9aff0e"/><rect x="1436" y="255" width="5" height="5" fill="#a5ff0c"/><rect x="1441" y="255" width="5" height="5" fill="#b1ff09"/><rect x="1446" y="255" width="5" height="5" fill="#bdff07"/><rect x="1451" y="255" width="5" height="5" fill="#c8ff04"/><rect x="1456" y="255" width="5" height="5" fill="#d5ff02"/><rect x="1461" y="255" width="5" height="5" fill="#e1ff00"/><rect x="1466" y="255" width="5" height="5" fill="#eeff00"/><rect x="1471" y="255" width="5" height="5" fill="#fbff00"/><rect x="1476" y="255" width="5" height="5" fill="#fff600"/><rect x="1481" y="255" width="5" height="5" fill="#ffea00"/><rect x="1341" y="260" width="5" height="5" fill="#00ff38"/><rect x="1346" y="260" width="5" height="5" fill="#00ff36"/><rect x="1351" y="260" width="5" height="5" fill="#04ff34"/><rect x="1356" y="260" width="5" height="5" fill="#0cff33"/><rect x="1361" y="260" width="5" height="5" fill="#15ff31"/><rect x="1366" y="260" width="5" height="5" fill="#1eff2f"/><rect x="1371" y="260" width="5" height="5" fill="#27ff2d"/><rect x="1376" y="260" width="5" height="5" fill="#30ff2b"/><rect x="1381" y="260" width="5" height="5" fill="#39ff29"/><rect x="1386" y="260" width="5" height="5" fill="#43ff27"/><rect x="1391" y="260" width="5" height="5" fill="#4cff25"/><rect x="1396" y="260" width="5" height="5" fill="#56ff23"/><rect x="1401" y="260" width="5" height="5" fill="#60ff21"/><rect x="1406" y="260" width="5" height="5" fill="#6bff1f"/><rect x="1411" y="260" width="5" height="5" fill="#75ff1c"/><rect x="1416" y="260" width="5" height="5" fill="#80ff1a"/><rect x="1421" y="260" width="5" height="5" fill="#8bff18"/><rect x="1426" y="260" width="5" height="5" fill="#96ff15"/><rect x="1431" y="260" width="5" height="5" fill="#a1ff13"/><rect x="1436" y="260" width="5" height="5" fill="#adff11"/><rect x="1441" y="260" width="5" height="5" fill="#b9ff0e"/><rect x="1446" y="260" width="5" height="5" fill="#c5ff0b"/><rect x="1451" y="260" width="5" height="5" fill="#d1ff09"/><rect x="1456" y="260" width="5" height="5" fill="#deff06"/><rect x="1461" y="260" width="5" height="5" fill="#ebff03"/><rect x="1466" y="260" width="5" height="5" fill="#f8ff01"/><rect x="1471" y="260" width="5" height="5" fill="#fff800"/><rect x="1476" y="260" width="5" height="5" fill="#ffec00"/><rect x="1481" y="260" width="5" height="5" fill="#ffe000"/><rect x="1486" y="260" width="5" height="5" fill="#ffd600"/><rect x="1336" y="265" width="5" height="5" fill="#00ff3e"/><rect x="1341" y="265" width="5" height="5" fill="#00ff3d"/><rect x="1346" y="265" width="5" height="5" fill="#00ff3b"/><rect x="1351" y="265" width="5" height="5" fill="#07ff39"/><rect x="1356" y="265" width="5" height="5" fill="#10ff37"/><rect x="1361" y="265" width="5" height="5" fill="#18ff36"/><rect x="1366" y="265" width="5" height="5" fill="#22ff34"/><rect x="1371" y="265" width="5" height="5" fill="#2bff32"/><rect x="1376" y="265" width="5" height="5" fill="#34ff30"/><rect x="1381" y="265" width="5" height="5" fill="#3eff2e"/><rect x="1386" y="265" width="5" height="5" fill="#48ff2c"/><rect x="1391" y="265" width="5" height="5" fill="#52ff2a"/><rect x="1396" y="265" width="5" height="5" fill="#5cff28"/><rect x="1401" y="265" width="5" height="5" fill="#66ff26"/><rect x="1406" y="265" width="5" height="5" fill="#71ff23"/><rect x="1411" y="265" width="5" height="5" fill="#7cff21"/><rect x="1416" y="265" width="5" height="5" fill="#87ff1f"/><rect x="1421" y="265" width="5" height="5" fill="#92ff1d"/><rect x="1426" y="265" width="5" height="5" fill="#9dff1a"/><rect x="1431" y="265" width="5" height="5" fill="#a9ff18"/><rect x="1436" y="265" width="5" height="5" fill="#b5ff15"/><rect x="1441" y="265" width="5" height="5" fill="#c1ff13"/><rect x="1446" y="265" width="5" height="5" fill="#ceff10"/><rect x="1451" y="265" width="5" height="5" fill="#dbff0e"/><rect x="1456" y="265" width="5" height="5" fill="#e8ff0b"/><rect x="1461" y="265" width="5" height="5" fill="#f5ff08"/><rect x="1466" y="265" width="5" height="5" fill="#fffb05"/><rect x="1471" y="265" width="5" height="5" fill="#ffee02"/><rect x="1476" y="265" width="5" height="5" fill="#ffe200"/><rect x="1481" y="265" width="5" height="5" fill="#ffd700"/><rect x="1486" y="265" width="5" height="5" fill="#ffcd00"/><rect x="1491" y="265" width="5" height="5" fill="#ffc400"/><rect x="1496" y="265" width="5" height="5" fill="#ffbb00"/><rect x="1336" y="270" width="5" height="5" fill="#00ff44"/><rect x="1341" y="270" width="5" height="5" fill="#00ff42"/><rect x="1346" y="270" width="5" height="5" fill="#01ff40"/><rect x="1351" y="270" width="5" height="5" fill="#0aff3e"/><rect x="1356" y="270" width="5" height="5" fill="#13ff3d"/><rect x="1361" y="270" width="5" height="5" fill="#1cff3b"/><rect x="1366" y="270" width="5" height="5" fill="#26ff39"/><rect x="1371" y="270" width="5" height="5" fill="#2fff37"/><rect x="1376" y="270" width="5" height="5" fill="#39ff35"/><rect x="1381" y="270" width="5" height="5" fill="#43ff33"/><rect x="1386" y="270" width="5" height="5" fill="#4dff31"/><rect x="1391" y="270" width="5" height="5" fill="#57ff2f"/><rect x="1396" y="270" width="5" height="5" fill="#61ff2d"/><rect x="1401" y="270" width="5" height="5" fill="#6cff2b"/><rect x="1406" y="270" width="5" height="5" fill="#77ff29"/><rect x="1411" y="270" width="5" height="5" fill="#82ff26"/><rect x="1416" y="270" width="5" height="5" fill="#8eff24"/><rect x="1421" y="270" width="5" height="5" fill="#99ff22"/><rect x="1426" y="270" width="5" height="5" fill="#a5ff1f"/><rect x="1431" y="270" width="5" height="5" fill="#b1ff1d"/><rect x="1436" y="270" width="5" height="5" fill="#beff1b"/><rect x="1441" y="270" width="5" height="5" fill="#caff18"/><rect x="1446" y="270" width="5" height="5" fill="#d7ff15"/><rect x="1451" y="270" width="5" height="5" fill="#e5ff13"/><rect x="1456" y="270" width="5" height="5" fill="#f2ff10"/><rect x="1461" y="270" width="5" height="5" fill="#fffe0d"/><rect x="1466" y="270" width="5" height="5" fill="#fff10a"/><rect x="1471" y="270" width="5" height="5" fill="#ffe407"/><rect x="1476" y="270" width="5" height="5" fill="#ffd904"/><rect x="1481" y="270" width="5" height="5" fill="#ffce01"/><rect x="1486" y="270" width="5" height="5" fill="#ffc500"/><rect x="1491" y="270" width="5" height="5" fill="#ffbc00"/><rect x="1496" y="270" width="5" height="5" fill="#ffb300"/><rect x="1501" y="270" width="5" height="5" fill="#ffab00"/><rect x="1506" y="270" width="5" height="5" fill="#ffa400"/><rect x="1331" y="275" width="5" height="5" fill="#00ff4b"/><rect x="1336" y="275" width="5" height="5" fill="#00ff49"/><rect x="1341" y="275" width="5" height="5" fill="#00ff47"/><rect x="1346" y="275" width="5" height="5" fill="#05ff46"/><rect x="1351" y="275" width="5" height="5" fill="#0eff44"/><rect x="1356" y="275" width="5" height="5" fill="#17ff42"/><rect x="1361" y="275" width="5" height="5" fill="#20ff40"/><rect x="1366" y="275" width="5" height="5" fill="#2aff3e"/><rect x="1371" y="275" width="5" height="5" fill="#34ff3c"/><rect x="1376" y="275" width="5" height="5" fill="#3eff3b"/><rect x="1381" y="275" width="5" height="5" fill="#48ff39"/><rect x="1386" y="275" width="5" height="5" fill="#52ff37"/><rect x="1391" y="275" width="5" height="5" fill="#5dff35"/><rect x="1396" y="275" width="5" height="5" fill="#67ff32"/><rect x="1401" y="275" width="5" height="5" fill="#72ff30"/><rect x="1406" y="275" width="5" height="5" fill="#7eff2e"/><rect x="1411" y="275" width="5" height="5" fill="#89ff2c"/><rect x="1416" y="275" width="5" height="5" fill="#95ff2a"/><rect x="1421" y="275" width="5" height="5" fill="#a1ff27"/><rect x="1426" y="275" width="5" height="5" fill="#adff25"/><rect x="1431" y="275" width="5" height="5" fill="#baff23"/><rect x="1436" y="275" width="5" height="5" fill="#c7ff20"/><rect x="1441" y="275" width="5" height="5" fill="#d4ff1d"/><rect x="1446" y="275" width="5" height="5" fill="#e1ff1b"/><rect x="1451" y="275" width="5" height="5" fill="#efff18"/><rect x="1456" y="275" width="5" height="5" fill="#fdff16"/><rect x="1461" y="275" width="5" height="5" fill="#fff312"/><rect x="1466" y="275" width="5" height="5" fill="#ffe60e"/><rect x="1471" y="275" width="5" height="5" fill="#ffdb0b"/><rect x="1476" y="275" width="5" height="5" fill="#ffd008"/><rect x="1481" y="275" width="5" height="5" fill="#ffc605"/><rect x="1486" y="275" width="5" height="5" fill="#ffbc03"/><rect x="1491" y="275" width="5" height="5" fill="#ffb400"/><rect x="1496" y="275" width="5" height="5" fill="#ffac00"/><rect x="1501" y="275" width="5" height="5" fill="#ffa400"/><rect x="1506" y="275" width="5" height="5" fill="#ff9d00"/><rect x="1511" y="275" width="5" height="5" fill="#ff9600"/><rect x="1331" y="280" width="5" height="5" fill="#00ff50"/><rect x="1336" y="280" width="5" height="5" fill="#00ff4e"/><rect x="1341" y="280" width="5" height="5" fill="#00ff4d"/><rect x="1346" y="280" width="5" height="5" fill="#08ff4b"/><rect x="1351" y="280" width="5" height="5" fill="#11ff49"/><rect x="1356" y="280" width="5" height="5" fill="#1bff48"/><rect x="1361" y="280" width="5" height="5" fill="#24ff46"/><rect x="1366" y="280" width="5" height="5" fill="#2eff44"/><rect x="1371" y="280" width="5" height="5" fill="#38ff42"/><rect x="1376" y="280" width="5" height="5" fill="#43ff40"/><rect x="1381" y="280" width="5" height="5" fill="#4dff3e"/><rect x="1386" y="280" width="5" height="5" fill="#58ff3c"/><rect x="1391" y="280" width="5" height="5" fill="#63ff3a"/><rect x="1396" y="280" width="5" height="5" fill="#6eff38"/><rect x="1401" y="280" width="5" height="5" fill="#79ff36"/><rect x="1406" y="280" width="5" height="5" fill="#85ff34"/><rect x="1411" y="280" width="5" height="5" fill="#91ff32"/><rect x="1416" y="280" width="5" height="5" fill="#9dff2f"/><rect x="1421" y="280" width="5" height="5" fill="#a9ff2d"/><rect x="1426" y="280" width="5" height="5" fill="#b6ff2b"/><rect x="1431" y="280" width="5" height="5" fill="#c3ff28"/><rect x="1436" y="280" width="5" height="5" fill="#d0ff26"/><rect x="1441" y="280" width="5" height="5" fill="#deff23"/><rect x="1446" y="280" width="5" height="5" fill="#ecff21"/><rect x="1451" y="280" width="5" height="5" fill="#faff1e"/><rect x="1456" y="280" width="5" height="5" fill="#fff61a"/><rect x="1461" y="280" width="5" height="5" fill="#ffe916"/><rect x="1466" y="280" width="5" height="5" fill="#ffdc13"/><rect x="1471" y="280" width="5" height="5" fill="#ffd10f"/><rect x="1476" y="280" width="5" height="5" fill="#ffc70c"/><rect x="1481" y="280" width="5" height="5" fill="#ffbd09"/><rect x="1486" y="280" width="5" height="5" fill="#ffb407"/><rect x="1491" y="280" width="5" height="5" fill="#ffac04"/><rect x="1496" y="280" width="5" height="5" fill="#ffa402"/><rect x="1501" y="280" width="5" height="5" fill="#ff9d00"/><rect x="1506" y="280" width="5" height="5" fill="#ff9600"/><rect x="1511" y="280" width="5" height="5" fill="#ff9000"/><rect x="1516" y="280" width="5" height="5" fill="#ff8900"/><rect x="1521" y="280" width="5" height="5" fill="#ff8400"/><rect x="1331" y="285" width="5" height="5" fill="#00ff56"/><rect x="1336" y="285" width="5" height="5" fill="#00ff54"/><rect x="1341" y="285" width="5" height="5" fill="#02ff53"/><rect x="1346" y="285" width="5" height="5" fill="#0cff51"/><rect x="1351" y="285" width="5" height="5" fill="#15ff4f"/><rect x="1356" y="285" width="5" height="5" fill="#1fff4e"/><rect x="1361" y="285" width="5" height="5" fill="#29ff4c"/><rect x="1366" y="285" width="5" height="5" fill="#33ff4a"/><rect x="1371" y="285" width="5" height="5" fill="#3dff48"/><rect x="1376" y="285" width="5" height="5" fill="#48ff46"/><rect x="1381" y="285" width="5" height="5" fill="#53ff44"/><rect x="1386" y="285" width="5" height="5" fill="#5eff42"/><rect x="1391" y="285" width="5" height="5" fill="#69ff40"/><rect x="1396" y="285" width="5" height="5" fill="#74ff3e"/><rect x="1401" y="285" width="5" height="5" fill="#80ff3c"/><rect x="1406" y="285" width="5" height="5" fill="#8cff3a"/><rect x="1411" y="285" width="5" height="5" fill="#98ff38"/><rect x="1416" y="285" width="5" height="5" fill="#a5ff35"/><rect x="1421" y="285" width="5" height="5" fill="#b2ff33"/><rect x="1426" y="285" width="5" height="5" fill="#bfff31"/><rect x="1431" y="285" width="5" height="5" fill="#ccff2e"/><rect x="1436" y="285" width="5" height="5" fill="#daff2c"/><rect x="1441" y="285" width="5" height="5" fill="#e8ff29"/><rect x="1446" y="285" width="5" height="5" fill="#f7ff27"/><rect x="1451" y="285" width="5" height="5" fill="#fff823"/><rect x="1456" y="285" width="5" height="5" fill="#ffeb1f"/><rect x="1461" y="285" width="5" height="5" fill="#ffde1b"/><rect x="1466" y="285" width="5" height="5" fill="#ffd317"/><rect x="1471" y="285" width="5" height="5" fill="#ffc813"/><rect x="1476" y="285" width="5" height="5" fill="#ffbe10"/><rect x="1481" y="285" width="5" height="5" fill="#ffb50d"/><rect x="1486" y="285" width="5" height="5" fill="#ffad0a"/><rect x="1491" y="285" width="5" height="5" fill="#ffa508"/><rect x="1496" y="285" width="5" height="5" fill="#ff9d05"/><rect x="1501" y="285" width="5" height="5" fill="#ff9603"/><rect x="1506" y="285" width="5" height="5" fill="#ff8f01"/><rect x="1511" y="285" width="5" height="5" fill="#ff8900"/><rect x="1516" y="285" width="5" height="5" fill="#ff8300"/><rect x="1521" y="285" width="5" height="5" fill="#ff7e00"/><rect x="1526" y="285" width="5" height="5" fill="#ff7900"/><rect x="1531" y="285" width="5" height="5" fill="#ff7400"/><rect x="1326" y="290" width="5" height="5" fill="#00ff5e"/><rect x="1331" y="290" width="5" height="5" fill="#00ff5c"/><rect x="1336" y="290" width="5" height="5" fill="#00ff5a"/><rect x="1341" y="290" width="5" height="5" fill="#06ff59"/><rect x="1346" y="290" width="5" height="5" fill="#0fff57"/><rect x="1351" y="290" width="5" height="5" fill="#19ff55"/><rect x="1356" y="290" width="5" height="5" fill="#23ff54"/><rect x="1361" y="290" width="5" height="5" fill="#2dff52"/><rect x="1366" y="290" width="5" height="5" fill="#38ff50"/><rect x="1371" y="290" width="5" height="5" fill="#42ff4e"/><rect x="1376" y="290" width="5" height="5" fill="#4dff4c"/><rect x="1381" y="290" width="5" height="5" fill="#58ff4b"/><rect x="1386" y="290" width="5" height="5" fill="#64ff49"/><rect x="1391" y="290" width="5" height="5" fill="#6fff47"/><rect x="1396" y="290" width="5" height="5" fill="#7bff45"/><rect x="1401" y="290" width="5" height="5" fill="#87ff42"/><rect x="1406" y="290" width="5" height="5" fill="#94ff40"/><rect x="1411" y="290" width="5" height="5" fill="#a1ff3e"/><rect x="1416" y="290" width="5" height="5" fill="#aeff3c"/><rect x="1421" y="290" width="5" height="5" fill="#bbff3a"/><rect x="1426" y="290" width="5" height="5" fill="#c9ff37"/><rect x="1431" y="290" width="5" height="5" fill="#d7ff35"/><rect x="1436" y="290" width="5" height="5" fill="#e5ff32"/><rect x="1441" y="290" width="5" height="5" fill="#f4ff30"/><rect x="1446" y="290" width="5" height="5" fill="#fffb2d"/><rect x="1451" y="290" width="5" height="5" fill="#ffed28"/><rect x="1456" y="290" width="5" height="5" fill="#ffe023"/><rect x="1461" y="290" width="5" height="5" fill="#ffd41f"/><rect x="1466" y="290" width="5" height="5" fill="#ffc91b"/><rect x="1471" y="290" width="5" height="5" fill="#ffbf17"/><rect x="1476" y="290" width="5" height="5" fill="#ffb614"/><rect x="1481" y="290" width="5" height="5" fill="#ffad11"/><rect x="1486" y="290" width="5" height="5" fill="#ffa50e"/><rect x="1491" y="290" width="5" height="5" fill="#ff9d0b"/><rect x="1496" y="290" width="5" height="5" fill="#ff9609"/><rect x="1501" y="290" width="5" height="5" fill="#ff8f06"/><rect x="1506" y="290" width="5" height="5" fill="#ff8904"/><rect x="1511" y="290" width="5" height="5" fill="#ff8302"/><rect x="1516" y="290" width="5" height="5" fill="#ff7d00"/><rect x="1521" y="290" width="5" height="5" fill="#ff7800"/><rect x="1526" y="290" width="5" height="5" fill="#ff7300"/><rect x="1531" y="290" width="5" height="5" fill="#ff6e00"/><rect x="1536" y="290" width="5" height="5" fill="#ff6a00"/><rect x="1326" y="295" width="5" height="5" fill="#00ff64"/><rect x="1331" y="295" width="5" height="5" fill="#00ff62"/><rect x="1336" y="295" width="5" height="5" fill="#00ff61"/><rect x="1341" y="295" width="5" height="5" fill="#09ff5f"/><rect x="1346" y="295" width="5" height="5" fill="#13ff5e"/><rect x="1351" y="295" width="5" height="5" fill="#1dff5c"/><rect x="1356" y="295" width="5" height="5" fill="#28ff5a"/><rect x="1361" y="295" width="5" height="5" fill="#32ff58"/><rect x="1366" y="295" width="5" height="5" fill="#3dff57"/><rect x="1371" y="295" width="5" height="5" fill="#48ff55"/><rect x="1376" y="295" width="5" height="5" fill="#53ff53"/><rect x="1381" y="295" width="5" height="5" fill="#5fff51"/><rect x="1386" y="295" width="5" height="5" fill="#6aff4f"/><rect x="1391" y="295" width="5" height="5" fill="#76ff4d"/><rect x="1396" y="295" width="5" height="5" fill="#83ff4b"/><rect x="1401" y="295" width="5" height="5" fill="#8fff49"/><rect x="1406" y="295" width="5" height="5" fill="#9cff47"/><rect x="1411" y="295" width="5" height="5" fill="#a9ff45"/><rect x="1416" y="295" width="5" height="5" fill="#b7ff43"/><rect x="1421" y="295" width="5" height="5" fill="#c5ff40"/><rect x="1426" y="295" width="5" height="5" fill="#d3ff3e"/><rect x="1431" y="295" width="5" height="5" fill="#e1ff3c"/><rect x="1436" y="295" width="5" height="5" fill="#f0ff39"/><rect x="1441" y="295" width="5" height="5" fill="#ffff36"/><rect x="1446" y="295" width="5" height="5" fill="#fff031"/><rect x="1451" y="295" width="5" height="5" fill="#ffe22c"/><rect x="1456" y="295" width="5" height="5" fill="#ffd627"/><rect x="1461" y="295" width="5" height="5" fill="#ffcb23"/><rect x="1466" y="295" width="5" height="5" fill="#ffc01f"/><rect x="1471" y="295" width="5" height="5" fill="#ffb71b"/><rect x="1476" y="295" width="5" height="5" fill="#ffae18"/><rect x="1481" y="295" width="5" height="5" fill="#ffa515"/><rect x="1486" y="295" width="5" height="5" fill="#ff9d12"/><rect x="1491" y="295" width="5" height="5" fill="#ff960f"/><rect x="1496" y="295" width="5" height="5" fill="#ff8f0c"/><rect x="1501" y="295" width="5" height="5" fill="#ff890a"/><rect x="1506" y="295" width="5" height="5" fill="#ff8308"/><rect x="1511" y="295" width="5" height="5" fill="#ff7d05"/><rect x="1516" y="295" width="5" height="5" fill="#ff7803"/><rect x="1521" y="295" width="5" height="5" fill="#ff7301"/><rect x="1526" y="295" width="5" height="5" fill="#ff6e00"/><rect x="1531" y="295" width="5" height="5" fill="#ff6900"/><rect x="1536" y="295" width="5" height="5" fill="#ff6500"/><rect x="1541" y="295" width="5" height="5" fill="#ff6100"/><rect x="1546" y="295" width="5" height="5" fill="#ff5d00"/><rect x="1326" y="300" width="5" height="5" fill="#00ff6b"/><rect x="1331" y="300" width="5" height="5" fill="#00ff69"/><rect x="1336" y="300" width="5" height="5" fill="#03ff68"/><rect x="1341" y="300" width="5" height="5" fill="#0dff66"/><rect x="1346" y="300" width="5" height="5" fill="#17ff64"/><rect x="1351" y="300" width="5" height="5" fill="#22ff63"/><rect x="1356" y="300" width="5" height="5" fill="#2cff61"/><rect x="1361" y="300" width="5" height="5" fill="#37ff5f"/><rect x="1366" y="300" width="5" height="5" fill="#42ff5e"/><rect x="1371" y="300" width="5" height="5" fill="#4eff5c"/><rect x="1376" y="300" width="5" height="5" fill="#59ff5a"/><rect x="1381" y="300" width="5" height="5" fill="#65ff58"/><rect x="1386" y="300" width="5" height="5" fill="#71ff56"/><rect x="1391" y="300" width="5" height="5" fill="#7eff54"/><rect x="1396" y="300" width="5" height="5" fill="#8aff52"/><rect x="1401" y="300" width="5" height="5" fill="#97ff50"/><rect x="1406" y="300" width="5" height="5" fill="#a5ff4e"/><rect x="1411" y="300" width="5" height="5" fill="#b2ff4c"/><rect x="1416" y="300" width="5" height="5" fill="#c0ff4a"/><rect x="1421" y="300" width="5" height="5" fill="#cfff47"/><rect x="1426" y="300" width="5" height="5" fill="#deff45"/><rect x="1431" y="300" width="5" height="5" fill="#edff43"/><rect x="1436" y="300" width="5" height="5" fill="#fcff40"/><rect x="1441" y="300" width="5" height="5" fill="#fff33b"/><rect x="1446" y="300" width="5" height="5" fill="#ffe535"/><rect x="1451" y="300" width="5" height="5" fill="#ffd830"/><rect x="1456" y="300" width="5" height="5" fill="#ffcc2b"/><rect x="1461" y="300" width="5" height="5" fill="#ffc127"/><rect x="1466" y="300" width="5" height="5" fill="#ffb723"/><rect x="1471" y="300" width="5" height="5" fill="#ffae1f"/><rect x="1476" y="300" width="5" height="5" fill="#ffa61b"/><rect x="1481" y="300" width="5" height="5" fill="#ff9e18"/><rect x="1486" y="300" width="5" height="5" fill="#ff9615"/><rect x="1491" y="300" width="5" height="5" fill="#ff8f12"/><rect x="1496" y="300" width="5" height="5" fill="#ff8910"/><rect x="1501" y="300" width="5" height="5" fill="#ff820d"/><rect x="1506" y="300" width="5" height="5" fill="#ff7d0b"/><rect x="1511" y="300" width="5" height="5" fill="#ff7708"/><rect x="1516" y="300" width="5" height="5" fill="#ff7206"/><rect x="1521" y="300" width="5" height="5" fill="#ff6d04"/><rect x="1526" y="300" width="5" height="5" fill="#ff6802"/><rect x="1531" y="300" width="5" height="5" fill="#ff6401"/><rect x="1536" y="300" width="5" height="5" fill="#ff6000"/><rect x="1541" y="300" width="5" height="5" fill="#ff5c00"/><rect x="1546" y="300" width="5" height="5" fill="#ff5800"/><rect x="1551" y="300" width="5" height="5" fill="#ff5400"/><rect x="1321" y="305" width="5" height="5" fill="#00ff73"/><rect x="1326" y="305" width="5" height="5" fill="#00ff72"/><rect x="1331" y="305" width="5" height="5" fill="#00ff70"/><rect x="1336" y="305" width="5" height="5" fill="#07ff6f"/><rect x="1341" y="305" width="5" height="5" fill="#11ff6d"/><rect x="1346" y="305" width="5" height="5" fill="#1cff6c"/><rect x="1351" y="305" width="5" height="5" fill="#26ff6a"/><rect x="1356" y="305" width="5" height="5" fill="#31ff68"/><rect x="1361" y="305" width="5" height="5" fill="#3dff67"/><rect x="1366" y="305" width="5" height="5" fill="#48ff65"/><rect x="1371" y="305" width="5" height="5" fill="#54ff63"/><rect x="1376" y="305" width="5" height="5" fill="#60ff61"/><rect x="1381" y="305" width="5" height="5" fill="#6cff60"/><rect x="1386" y="305" width="5" height="5" fill="#79ff5e"/><rect x="1391" y="305" width="5" height="5" fill="#85ff5c"/><rect x="1396" y="305" width="5" height="5" fill="#93ff5a"/><rect x="1401" y="305" width="5" height="5" fill="#a0ff58"/><rect x="1406" y="305" width="5" height="5" fill="#aeff56"/><rect x="1411" y="305" width="5" height="5" fill="#bcff54"/><rect x="1416" y="305" width="5" height="5" fill="#cbff51"/><rect x="1421" y="305" width="5" height="5" fill="#daff4f"/><rect x="1426" y="305" width="5" height="5" fill="#e9ff4d"/><rect x="1431" y="305" width="5" height="5" fill="#f9ff4a"/><rect x="1436" y="305" width="5" height="5" fill="#fff545"/><rect x="1441" y="305" width="5" height="5" fill="#ffe73f"/><rect x="1446" y="305" width="5" height="5" fill="#ffda39"/><rect x="1451" y="305" width="5" height="5" fill="#ffce34"/><rect x="1456" y="305" width="5" height="5" fill="#ffc32f"/><rect x="1461" y="305" width="5" height="5" fill="#ffb82b"/><rect x="1466" y="305" width="5" height="5" fill="#ffaf26"/><rect x="1471" y="305" width="5" height="5" fill="#ffa623"/><rect x="1476" y="305" width="5" height="5" fill="#ff9e1f"/><rect x="1481" y="305" width="5" height="5" fill="#ff961c"/><rect x="1486" y="305" width="5" height="5" fill="#ff8f19"/><rect x="1491" y="305" width="5" height="5" fill="#ff8816"/><rect x="1496" y="305" width="5" height="5" fill="#ff8213"/><rect x="1501" y="305" width="5" height="5" fill="#ff7c10"/><rect x="1506" y="305" width="5" height="5" fill="#ff770e"/><rect x="1511" y="305" width="5" height="5" fill="#ff710c"/><rect x="1516" y="305" width="5" height="5" fill="#ff6c09"/><rect x="1521" y="305" width="5" height="5" fill="#ff6807"/><rect x="1526" y="305" width="5" height="5" fill="#ff6305"/><rect x="1531" y="305" width="5" height="5" fill="#ff5f03"/><rect x="1536" y="305" width="5" height="5" fill="#ff5b02"/><rect x="1541" y="305" width="5" height="5" fill="#ff5700"/><rect x="1546" y="305" width="5" height="5" fill="#ff5300"/><rect x="1551" y="305" width="5" height="5" fill="#ff5000"/><rect x="1556" y="305" width="5" height="5" fill="#ff4d00"/><rect x="1561" y="305" width="5" height="5" fill="#ff4900"/><rect x="1321" y="310" width="5" height="5" fill="#00ff7a"/><rect x="1326" y="310" width="5" height="5" fill="#00ff79"/><rect x="1331" y="310" width="5" height="5" fill="#01ff77"/><rect x="1336" y="310" width="5" height="5" fill="#0bff76"/><rect x="1341" y="310" width="5" height="5" fill="#16ff75"/><rect x="1346" y="310" width="5" height="5" fill="#20ff73"/><rect x="1351" y="310" width="5" height="5" fill="#2bff71"/><rect x="1356" y="310" width="5" height="5" fill="#37ff70"/><rect x="1361" y="310" width="5" height="5" fill="#42ff6e"/><rect x="1366" y="310" width="5" height="5" fill="#4eff6d"/><rect x="1371" y="310" width="5" height="5" fill="#5aff6b"/><rect x="1376" y="310" width="5" height="5" fill="#67ff69"/><rect x="1381" y="310" width="5" height="5" fill="#73ff67"/><rect x="1386" y="310" width="5" height="5" fill="#80ff65"/><rect x="1391" y="310" width="5" height="5" fill="#8eff64"/><rect x="1396" y="310" width="5" height="5" fill="#9bff62"/><rect x="1401" y="310" width="5" height="5" fill="#a9ff60"/><rect x="1406" y="310" width="5" height="5" fill="#b8ff5e"/><rect x="1411" y="310" width="5" height="5" fill="#c6ff5c"/><rect x="1416" y="310" width="5" height="5" fill="#d6ff59"/><rect x="1421" y="310" width="5" height="5" fill="#e5ff57"/><rect x="1426" y="310" width="5" height="5" fill="#f5ff55"/><rect x="1431" y="310" width="5" height="5" fill="#fff951"/><rect x="1436" y="310" width="5" height="5" fill="#ffe94a"/><rect x="1441" y="310" width="5" height="5" fill="#ffdc43"/><rect x="1446" y="310" width="5" height="5" fill="#ffcf3d"/><rect x="1451" y="310" width="5" height="5" fill="#ffc438"/><rect x="1456" y="310" width="5" height="5" fill="#ffb933"/><rect x="1461" y="310" width="5" height="5" fill="#ffaf2e"/><rect x="1466" y="310" width="5" height="5" fill="#ffa62a"/><rect x="1471" y="310" width="5" height="5" fill="#ff9e26"/><rect x="1476" y="310" width="5" height="5" fill="#ff9622"/><rect x="1481" y="310" width="5" height="5" fill="#ff8f1f"/><rect x="1486" y="310" width="5" height="5" fill="#ff881c"/><rect x="1491" y="310" width="5" height="5" fill="#ff8219"/><rect x="1496" y="310" width="5" height="5" fill="#ff7c16"/><rect x="1501" y="310" width="5" height="5" fill="#ff7613"/><rect x="1506" y="310" width="5" height="5" fill="#ff7111"/><rect x="1511" y="310" width="5" height="5" fill="#ff6c0f"/><rect x="1516" y="310" width="5" height="5" fill="#ff670c"/><rect x="1521" y="310" width="5" height="5" fill="#ff620a"/><rect x="1526" y="310" width="5" height="5" fill="#ff5e08"/><rect x="1531" y="310" width="5" height="5" fill="#ff5a06"/><rect x="1536" y="310" width="5" height="5" fill="#ff5604"/><rect x="1541" y="310" width="5" height="5" fill="#ff5303"/><rect x="1546" y="310" width="5" height="5" fill="#ff4f01"/><rect x="1551" y="310" width="5" height="5" fill="#ff4c00"/><rect x="1556" y="310" width="5" height="5" fill="#ff4800"/><rect x="1561" y="310" width="5" height="5" fill="#ff4500"/><rect x="1566" y="310" width="5" height="5" fill="#ff4200"/><rect x="1571" y="310" width="5" height="5" fill="#ff4000"/><rect x="1321" y="315" width="5" height="5" fill="#00ff82"/><rect x="1326" y="315" width="5" height="5" fill="#00ff81"/><rect x="1331" y="315" width="5" height="5" fill="#04ff7f"/><rect x="1336" y="315" width="5" height="5" fill="#0fff7e"/><rect x="1341" y="315" width="5" height="5" fill="#1aff7c"/><rect x="1346" y="315" width="5" height="5" fill="#25ff7b"/><rect x="1351" y="315" width="5" height="5" fill="#31ff79"/><rect x="1356" y="315" width="5" height="5" fill="#3cff78"/><rect x="1361" y="315" width="5" height="5" fill="#48ff76"/><rect x="1366" y="315" width="5" height="5" fill="#54ff75"/><rect x="1371" y="315" width="5" height="5" fill="#61ff73"/><rect x="1376" y="315" width="5" height="5" fill="#6eff71"/><rect x="1381" y="315" width="5" height="5" fill="#7bff70"/><rect x="1386" y="315" width="5" height="5" fill="#88ff6e"/><rect x="1391" y="315" width="5" height="5" fill="#96ff6c"/><rect x="1396" y="315" width="5" height="5" fill="#a5ff6a"/><rect x="1401" y="315" width="5" height="5" fill="#b3ff68"/><rect x="1406" y="315" width="5" height="5" fill="#c2ff66"/><rect x="1411" y="315" width="5" height="5" fill="#d1ff64"/><rect x="1416" y="315" width="5" height="5" fill="#e1ff62"/><rect x="1421" y="315" width="5" height="5" fill="#f2ff60"/><rect x="1426" y="315" width="5" height="5" fill="#fffc5d"/><rect x="1431" y="315" width="5" height="5" fill="#ffec55"/><rect x="1436" y="315" width="5" height="5" fill="#ffde4e"/><rect x="1441" y="315" width="5" height="5" fill="#ffd147"/><rect x="1446" y="315" width="5" height="5" fill="#ffc541"/><rect x="1451" y="315" width="5" height="5" fill="#ffba3c"/><rect x="1456" y="315" width="5" height="5" fill="#ffb037"/><rect x="1461" y="315" width="5" height="5" fill="#ffa732"/><rect x="1466" y="315" width="5" height="5" fill="#ff9e2e"/><rect x="1471" y="315" width="5" height="5" fill="#ff962a"/><rect x="1476" y="315" width="5" height="5" fill="#ff8f26"/><rect x="1481" y="315" width="5" height="5" fill="#ff8822"/><rect x="1486" y="315" width="5" height="5" fill="#ff811f"/><rect x="1491" y="315" width="5" height="5" fill="#ff7b1c"/><rect x="1496" y="315" width="5" height="5" fill="#ff7519"/><rect x="1501" y="315" width="5" height="5" fill="#ff7016"/><rect x="1506" y="315" width="5" height="5" fill="#ff6b14"/><rect x="1511" y="315" width="5" height="5" fill="#ff6611"/><rect x="1516" y="315" width="5" height="5" fill="#ff620f"/><rect x="1521" y="315" width="5" height="5" fill="#ff5d0d"/><rect x="1526" y="315" width="5" height="5" fill="#ff590b"/><rect x="1531" y="315" width="5" height="5" fill="#ff5509"/><rect x="1536" y="315" width="5" height="5" fill="#ff5107"/><rect x="1541" y="315" width="5" height="5" fill="#ff4e05"/><rect x="1546" y="315" width="5" height="5" fill="#ff4b04"/><rect x="1551" y="315" width="5" height="5" fill="#ff4702"/><rect x="1556" y="315" width="5" height="5" fill="#ff4400"/><rect x="1561" y="315" width="5" height="5" fill="#ff4100"/><rect x="1566" y="315" width="5" height="5" fill="#ff3e00"/><rect x="1571" y="315" width="5" height="5" fill="#ff3c00"/><rect x="1576" y="315" width="5" height="5" fill="#ff3900"/><rect x="1316" y="320" width="5" height="5" fill="#00ff8b"/><rect x="1321" y="320" width="5" height="5" fill="#00ff8a"/><rect x="1326" y="320" width="5" height="5" fill="#00ff89"/><rect x="1331" y="320" width="5" height="5" fill="#08ff87"/><rect x="1336" y="320" width="5" height="5" fill="#13ff86"/><rect x="1341" y="320" width="5" height="5" fill="#1fff85"/><rect x="1346" y="320" width="5" height="5" fill="#2aff83"/><rect x="1351" y="320" width="5" height="5" fill="#36ff82"/><rect x="1356" y="320" width="5" height="5" fill="#42ff80"/><rect x="1361" y="320" width="5" height="5" fill="#4eff7f"/><rect x="1366" y="320" width="5" height="5" fill="#5bff7d"/><rect x="1371" y="320" width="5" height="5" fill="#68ff7c"/><rect x="1376" y="320" width="5" height="5" fill="#75ff7a"/><rect x="1381" y="320" width="5" height="5" fill="#83ff78"/><rect x="1386" y="320" width="5" height="5" fill="#91ff77"/><rect x="1391" y="320" width="5" height="5" fill="#a0ff75"/><rect x="1396" y="320" width="5" height="5" fill="#aeff73"/><rect x="1401" y="320" width="5" height="5" fill="#beff71"/><rect x="1406" y="320" width="5" height="5" fill="#cdff6f"/><rect x="1411" y="320" width="5" height="5" fill="#ddff6d"/><rect x="1416" y="320" width="5" height="5" fill="#eeff6b"/><rect x="1421" y="320" width="5" height="5" fill="#ffff69"/><rect x="1426" y="320" width="5" height="5" fill="#ffef60"/><rect x="1431" y="320" width="5" height="5" fill="#ffe059"/><rect x="1436" y="320" width="5" height="5" fill="#ffd351"/><rect x="1441" y="320" width="5" height="5" fill="#ffc64b"/><rect x="1446" y="320" width="5" height="5" fill="#ffbb45"/><rect x="1451" y="320" width="5" height="5" fill="#ffb13f"/><rect x="1456" y="320" width="5" height="5" fill="#ffa73a"/><rect x="1461" y="320" width="5" height="5" fill="#ff9e35"/><rect x="1466" y="320" width="5" height="5" fill="#ff9631"/><rect x="1471" y="320" width="5" height="5" fill="#ff8f2d"/><rect x="1476" y="320" width="5" height="5" fill="#ff8829"/><rect x="1481" y="320" width="5" height="5" fill="#ff8126"/><rect x="1486" y="320" width="5" height="5" fill="#ff7b22"/><rect x="1491" y="320" width="5" height="5" fill="#ff751f"/><rect x="1496" y="320" width="5" height="5" fill="#ff6f1c"/><rect x="1501" y="320" width="5" height="5" fill="#ff6a19"/><rect x="1506" y="320" width="5" height="5" fill="#ff6517"/><rect x="1511" y="320" width="5" height="5" fill="#ff6114"/><rect x="1516" y="320" width="5" height="5" fill="#ff5c12"/><rect x="1521" y="320" width="5" height="5" fill="#ff5810"/><rect x="1526" y="320" width="5" height="5" fill="#ff540e"/><rect x="1531" y="320" width="5" height="5" fill="#ff500c"/><rect x="1536" y="320" width="5" height="5" fill="#ff4d0a"/><rect x="1541" y="320" width="5" height="5" fill="#ff4908"/><rect x="1546" y="320" width="5" height="5" fill="#ff4606"/><rect x="1551" y="320" width="5" height="5" fill="#ff4305"/><rect x="1556" y="320" width="5" height="5" fill="#ff4003"/><rect x="1561" y="320" width="5" height="5" fill="#ff3d01"/><rect x="1566" y="320" width="5" height="5" fill="#ff3b00"/><rect x="1571" y="320" width="5" height="5" fill="#ff3800"/><rect x="1576" y="320" width="5" height="5" fill="#ff3500"/><rect x="1581" y="320" width="5" height="5" fill="#ff3300"/><rect x="1586" y="320" width="5" height="5" fill="#ff3100"/><rect x="1316" y="325" width="5" height="5" fill="#00ff94"/><rect x="1321" y="325" width="5" height="5" fill="#00ff93"/><rect x="1326" y="325" width="5" height="5" fill="#02ff91"/><rect x="1331" y="325" width="5" height="5" fill="#0dff90"/><rect x="1336" y="325" width="5" height="5" fill="#18ff8f"/><rect x="1341" y="325" width="5" height="5" fill="#24ff8d"/><rect x="1346" y="325" width="5" height="5" fill="#30ff8c"/><rect x="1351" y="325" width="5" height="5" fill="#3cff8b"/><rect x="1356" y="325" width="5" height="5" fill="#48ff89"/><rect x="1361" y="325" width="5" height="5" fill="#55ff88"/><rect x="1366" y="325" width="5" height="5" fill="#62ff86"/><rect x="1371" y="325" width="5" height="5" fill="#70ff85"/><rect x="1376" y="325" width="5" height="5" fill="#7eff83"/><rect x="1381" y="325" width="5" height="5" fill="#8cff82"/><rect x="1386" y="325" width="5" height="5" fill="#9aff80"/><rect x="1391" y="325" width="5" height="5" fill="#a9ff7e"/><rect x="1396" y="325" width="5" height="5" fill="#b9ff7d"/><rect x="1401" y="325" width="5" height="5" fill="#c9ff7b"/><rect x="1406" y="325" width="5" height="5" fill="#d9ff79"/><rect x="1411" y="325" width="5" height="5" fill="#eaff77"/><rect x="1416" y="325" width="5" height="5" fill="#fbff75"/><rect x="1421" y="325" width="5" height="5" fill="#fff26d"/><rect x="1426" y="325" width="5" height="5" fill="#ffe364"/><rect x="1431" y="325" width="5" height="5" fill="#ffd55c"/><rect x="1436" y="325" width="5" height="5" fill="#ffc855"/><rect x="1441" y="325" width="5" height="5" fill="#ffbc4e"/><rect x="1446" y="325" width="5" height="5" fill="#ffb248"/><rect x="1451" y="325" width="5" height="5" fill="#ffa843"/><rect x="1456" y="325" width="5" height="5" fill="#ff9f3e"/><rect x="1461" y="325" width="5" height="5" fill="#ff9639"/><rect x="1466" y="325" width="5" height="5" fill="#ff8f34"/><rect x="1471" y="325" width="5" height="5" fill="#ff8730"/><rect x="1476" y="325" width="5" height="5" fill="#ff812c"/><rect x="1481" y="325" width="5" height="5" fill="#ff7a29"/><rect x="1486" y="325" width="5" height="5" fill="#ff7425"/><rect x="1491" y="325" width="5" height="5" fill="#ff6f22"/><rect x="1496" y="325" width="5" height="5" fill="#ff691f"/><rect x="1501" y="325" width="5" height="5" fill="#ff641c"/><rect x="1506" y="325" width="5" height="5" fill="#ff601a"/><rect x="1511" y="325" width="5" height="5" fill="#ff5b17"/><rect x="1516" y="325" width="5" height="5" fill="#ff5715"/><rect x="1521" y="325" width="5" height="5" fill="#ff5313"/><rect x="1526" y="325" width="5" height="5" fill="#ff4f10"/><rect x="1531" y="325" width="5" height="5" fill="#ff4c0e"/><rect x="1536" y="325" width="5" height="5" fill="#ff480c"/><rect x="1541" y="325" width="5" height="5" fill="#ff450a"/><rect x="1546" y="325" width="5" height="5" fill="#ff4209"/><rect x="1551" y="325" width="5" height="5" fill="#ff3f07"/><rect x="1556" y="325" width="5" height="5" fill="#ff3c05"/><rect x="1561" y="325" width="5" height="5" fill="#ff3904"/><rect x="1566" y="325" width="5" height="5" fill="#ff3702"/><rect x="1571" y="325" width="5" height="5" fill="#ff3401"/><rect x="1576" y="325" width="5" height="5" fill="#ff3200"/><rect x="1581" y="325" width="5" height="5" fill="#ff2f00"/><rect x="1586" y="325" width="5" height="5" fill="#ff2d00"/><rect x="1591" y="325" width="5" height="5" fill="#ff2b00"/><rect x="1596" y="325" width="5" height="5" fill="#ff2900"/><rect x="1311" y="330" width="5" height="5" fill="#00ff9e"/><rect x="1316" y="330" width="5" height="5" fill="#00ff9d"/><rect x="1321" y="330" width="5" height="5" fill="#00ff9c"/><rect x="1326" y="330" width="5" height="5" fill="#06ff9a"/><rect x="1331" y="330" width="5" height="5" fill="#11ff99"/><rect x="1336" y="330" width="5" height="5" fill="#1dff98"/><rect x="1341" y="330" width="5" height="5" fill="#29ff97"/><rect x="1346" y="330" width="5" height="5" fill="#35ff96"/><rect x="1351" y="330" width="5" height="5" fill="#42ff94"/><rect x="1356" y="330" width="5" height="5" fill="#4fff93"/><rect x="1361" y="330" width="5" height="5" fill="#5cff91"/><rect x="1366" y="330" width="5" height="5" fill="#6aff90"/><rect x="1371" y="330" width="5" height="5" fill="#78ff8f"/><rect x="1376" y="330" width="5" height="5" fill="#86ff8d"/><rect x="1381" y="330" width="5" height="5" fill="#95ff8c"/><rect x="1386" y="330" width="5" height="5" fill="#a4ff8a"/><rect x="1391" y="330" width="5" height="5" fill="#b4ff88"/><rect x="1396" y="330" width="5" height="5" fill="#c4ff87"/><rect x="1401" y="330" width="5" height="5" fill="#d5ff85"/><rect x="1406" y="330" width="5" height="5" fill="#e6ff83"/><rect x="1411" y="330" width="5" height="5" fill="#f7ff81"/><rect x="1416" y="330" width="5" height="5" fill="#fff57b"/><rect x="1421" y="330" width="5" height="5" fill="#ffe571"/><rect x="1426" y="330" width="5" height="5" fill="#ffd768"/><rect x="1431" y="330" width="5" height="5" fill="#ffc960"/><rect x="1436" y="330" width="5" height="5" fill="#ffbd59"/><rect x="1441" y="330" width="5" height="5" fill="#ffb252"/><rect x="1446" y="330" width="5" height="5" fill="#ffa84c"/><rect x="1451" y="330" width="5" height="5" fill="#ff9f46"/><rect x="1456" y="330" width="5" height="5" fill="#ff9641"/><rect x="1461" y="330" width="5" height="5" fill="#ff8e3c"/><rect x="1466" y="330" width="5" height="5" fill="#ff8738"/><rect x="1471" y="330" width="5" height="5" fill="#ff8033"/><rect x="1476" y="330" width="5" height="5" fill="#ff7a30"/><rect x="1481" y="330" width="5" height="5" fill="#ff742c"/><rect x="1486" y="330" width="5" height="5" fill="#ff6e28"/><rect x="1491" y="330" width="5" height="5" fill="#ff6925"/><rect x="1496" y="330" width="5" height="5" fill="#ff6422"/><rect x="1501" y="330" width="5" height="5" fill="#ff5f1f"/><rect x="1506" y="330" width="5" height="5" fill="#ff5a1d"/><rect x="1511" y="330" width="5" height="5" fill="#ff561a"/><rect x="1516" y="330" width="5" height="5" fill="#ff5218"/><rect x="1521" y="330" width="5" height="5" fill="#ff4e15"/><rect x="1526" y="330" width="5" height="5" fill="#ff4b13"/><rect x="1531" y="330" width="5" height="5" fill="#ff4711"/><rect x="1536" y="330" width="5" height="5" fill="#ff440f"/><rect x="1541" y="330" width="5" height="5" fill="#ff410d"/><rect x="1546" y="330" width="5" height="5" fill="#ff3e0b"/><rect x="1551" y="330" width="5" height="5" fill="#ff3b09"/><rect x="1556" y="330" width="5" height="5" fill="#ff3808"/><rect x="1561" y="330" width="5" height="5" fill="#ff3506"/><rect x="1566" y="330" width="5" height="5" fill="#ff3305"/><rect x="1571" y="330" width="5" height="5" fill="#ff3103"/><rect x="1576" y="330" width="5" height="5" fill="#ff2e02"/><rect x="1581" y="330" width="5" height="5" fill="#ff2c00"/><rect x="1586" y="330" width="5" height="5" fill="#ff2a00"/><rect x="1591" y="330" width="5" height="5" fill="#ff2800"/><rect x="1596" y="330" width="5" height="5" fill="#ff2600"/><rect x="1601" y="330" width="5" height="5" fill="#ff2400"/><rect x="1311" y="335" width="5" height="5" fill="#00ffa7"/><rect x="1316" y="335" width="5" height="5" fill="#00ffa6"/><rect x="1321" y="335" width="5" height="5" fill="#00ffa5"/><rect x="1326" y="335" width="5" height="5" fill="#0affa4"/><rect x="1331" y="335" width="5" height="5" fill="#16ffa3"/><rect x="1336" y="335" width="5" height="5" fill="#22ffa2"/><rect x="1341" y="335" width="5" height="5" fill="#2fffa1"/><rect x="1346" y="335" width="5" height="5" fill="#3bff9f"/><rect x="1351" y="335" width="5" height="5" fill="#49ff9e"/><rect x="1356" y="335" width="5" height="5" fill="#56ff9d"/><rect x="1361" y="335" width="5" height="5" fill="#64ff9c"/><rect x="1366" y="335" width="5" height="5" fill="#72ff9a"/><rect x="1371" y="335" width="5" height="5" fill="#81ff99"/><rect x="1376" y="335" width="5" height="5" fill="#90ff98"/><rect x="1381" y="335" width="5" height="5" fill="#9fff96"/><rect x="1386" y="335" width="5" height="5" fill="#afff95"/><rect x="1391" y="335" width="5" height="5" fill="#bfff93"/><rect x="1396" y="335" width="5" height="5" fill="#d0ff92"/><rect x="1401" y="335" width="5" height="5" fill="#e1ff90"/><rect x="1406" y="335" width="5" height="5" fill="#f3ff8e"/><rect x="1411" y="335" width="5" height="5" fill="#fff989"/><rect x="1416" y="335" width="5" height="5" fill="#ffe87e"/><rect x="1421" y="335" width="5" height="5" fill="#ffd974"/><rect x="1426" y="335" width="5" height="5" fill="#ffcb6c"/><rect x="1431" y="335" width="5" height="5" fill="#ffbf64"/><rect x="1436" y="335" width="5" height="5" fill="#ffb35c"/><rect x="1441" y="335" width="5" height="5" fill="#ffa956"/><rect x="1446" y="335" width="5" height="5" fill="#ff9f4f"/><rect x="1451" y="335" width="5" height="5" fill="#ff964a"/><rect x="1456" y="335" width="5" height="5" fill="#ff8e44"/><rect x="1461" y="335" width="5" height="5" fill="#ff873f"/><rect x="1466" y="335" width="5" height="5" fill="#ff803b"/><rect x="1471" y="335" width="5" height="5" fill="#ff7937"/><rect x="1476" y="335" width="5" height="5" fill="#ff7333"/><rect x="1481" y="335" width="5" height="5" fill="#ff6d2f"/><rect x="1486" y="335" width="5" height="5" fill="#ff682b"/><rect x="1491" y="335" width="5" height="5" fill="#ff6328"/><rect x="1496" y="335" width="5" height="5" fill="#ff5e25"/><rect x="1501" y="335" width="5" height="5" fill="#ff5922"/><rect x="1506" y="335" width="5" height="5" fill="#ff551f"/><rect x="1511" y="335" width="5" height="5" fill="#ff511d"/><rect x="1516" y="335" width="5" height="5" fill="#ff4d1a"/><rect x="1521" y="335" width="5" height="5" fill="#ff4918"/><rect x="1526" y="335" width="5" height="5" fill="#ff4616"/><rect x="1531" y="335" width="5" height="5" fill="#ff4313"/><rect x="1536" y="335" width="5" height="5" fill="#ff3f11"/><rect x="1541" y="335" width="5" height="5" fill="#ff3c0f"/><rect x="1546" y="335" width="5" height="5" fill="#ff3a0e"/><rect x="1551" y="335" width="5" height="5" fill="#ff370c"/><rect x="1556" y="335" width="5" height="5" fill="#ff340a"/><rect x="1561" y="335" width="5" height="5" fill="#ff3208"/><rect x="1566" y="335" width="5" height="5" fill="#ff2f07"/><rect x="1571" y="335" width="5" height="5" fill="#ff2d05"/><rect x="1576" y="335" width="5" height="5" fill="#ff2b04"/><rect x="1581" y="335" width="5" height="5" fill="#ff2903"/><rect x="1586" y="335" width="5" height="5" fill="#ff2601"/><rect x="1591" y="335" width="5" height="5" fill="#ff2400"/><rect x="1596" y="335" width="5" height="5" fill="#ff2300"/><rect x="1601" y="335" width="5" height="5" fill="#ff2100"/><rect x="1606" y="335" width="5" height="5" fill="#ff1f00"/><rect x="1611" y="335" width="5" height="5" fill="#ff1d00"/><rect x="1311" y="340" width="5" height="5" fill="#00ffb1"/><rect x="1316" y="340" width="5" height="5" fill="#00ffb0"/><rect x="1321" y="340" width="5" height="5" fill="#03ffaf"/><rect x="1326" y="340" width="5" height="5" fill="#0fffae"/><rect x="1331" y="340" width="5" height="5" fill="#1bffad"/><rect x="1336" y="340" width="5" height="5" fill="#28ffac"/><rect x="1341" y="340" width="5" height="5" fill="#35ffab"/><rect x="1346" y="340" width="5" height="5" fill="#42ffaa"/><rect x="1351" y="340" width="5" height="5" fill="#4fffa9"/><rect x="1356" y="340" width="5" height="5" fill="#5dffa8"/><rect x="1361" y="340" width="5" height="5" fill="#6cffa7"/><rect x="1366" y="340" width="5" height="5" fill="#7bffa5"/><rect x="1371" y="340" width="5" height="5" fill="#8affa4"/><rect x="1376" y="340" width="5" height="5" fill="#99ffa3"/><rect x="1381" y="340" width="5" height="5" fill="#aaffa2"/><rect x="1386" y="340" width="5" height="5" fill="#baffa0"/><rect x="1391" y="340" width="5" height="5" fill="#cbff9f"/><rect x="1396" y="340" width="5" height="5" fill="#ddff9d"/><rect x="1401" y="340" width="5" height="5" fill="#efff9c"/><rect x="1406" y="340" width="5" height="5" fill="#fffc99"/><rect x="1411" y="340" width="5" height="5" fill="#ffeb8d"/><rect x="1416" y="340" width="5" height="5" fill="#ffdb82"/><rect x="1421" y="340" width="5" height="5" fill="#ffcd78"/><rect x="1426" y="340" width="5" height="5" fill="#ffc06f"/><rect x="1431" y="340" width="5" height="5" fill="#ffb467"/><rect x="1436" y="340" width="5" height="5" fill="#ffa960"/><rect x="1441" y="340" width="5" height="5" fill="#ffa059"/><rect x="1446" y="340" width="5" height="5" fill="#ff9653"/><rect x="1451" y="340" width="5" height="5" fill="#ff8e4d"/><rect x="1456" y="340" width="5" height="5" fill="#ff8648"/><rect x="1461" y="340" width="5" height="5" fill="#ff7f43"/><rect x="1466" y="340" width="5" height="5" fill="#ff783e"/><rect x="1471" y="340" width="5" height="5" fill="#ff723a"/><rect x="1476" y="340" width="5" height="5" fill="#ff6c36"/><rect x="1481" y="340" width="5" height="5" fill="#ff6732"/><rect x="1486" y="340" width="5" height="5" fill="#ff622e"/><rect x="1491" y="340" width="5" height="5" fill="#ff5d2b"/><rect x="1496" y="340" width="5" height="5" fill="#ff5828"/><rect x="1501" y="340" width="5" height="5" fill="#ff5425"/><rect x="1506" y="340" width="5" height="5" fill="#ff5022"/><rect x="1511" y="340" width="5" height="5" fill="#ff4c1f"/><rect x="1516" y="340" width="5" height="5" fill="#ff481d"/><rect x="1521" y="340" width="5" height="5" fill="#ff451a"/><rect x="1526" y="340" width="5" height="5" fill="#ff4118"/><rect x="1531" y="340" width="5" height="5" fill="#ff3e16"/><rect x="1536" y="340" width="5" height="5" fill="#ff3b14"/><rect x="1541" y="340" width="5" height="5" fill="#ff3812"/><rect x="1546" y="340" width="5" height="5" fill="#ff3610"/><rect x="1551" y="340" width="5" height="5" fill="#ff330e"/><rect x="1556" y="340" width="5" height="5" fill="#ff300c"/><rect x="1561" y="340" width="5" height="5" fill="#ff2e0b"/><rect x="1566" y="340" width="5" height="5" fill="#ff2c09"/><rect x="1571" y="340" width="5" height="5" fill="#ff2908"/><rect x="1576" y="340" width="5" height="5" fill="#ff2706"/><rect x="1581" y="340" width="5" height="5" fill="#ff2505"/><rect x="1586" y="340" width="5" height="5" fill="#ff2303"/><rect x="1591" y="340" width="5" height="5" fill="#ff2102"/><rect x="1596" y="340" width="5" height="5" fill="#ff1f01"/><rect x="1601" y="340" width="5" height="5" fill="#ff1e00"/><rect x="1606" y="340" width="5" height="5" fill="#ff1c00"/><rect x="1611" y="340" width="5" height="5" fill="#ff1a00"/><rect x="1616" y="340" width="5" height="5" fill="#ff1900"/><rect x="1621" y="340" width="5" height="5" fill="#ff1700"/><rect x="1306" y="345" width="10" height="5" fill="#00ffbc"/><rect x="1316" y="345" width="5" height="5" fill="#00ffbb"/><rect x="1321" y="345" width="5" height="5" fill="#07ffba"/><rect x="1326" y="345" width="5" height="5" fill="#14ffb9"/><rect x="1331" y="345" width="5" height="5" fill="#20ffb8"/><rect x="1336" y="345" width="5" height="5" fill="#2dffb7"/><rect x="1341" y="345" width="5" height="5" fill="#3bffb6"/><rect x="1346" y="345" width="5" height="5" fill="#49ffb5"/><rect x="1351" y="345" width="5" height="5" fill="#57ffb4"/><rect x="1356" y="345" width="5" height="5" fill="#65ffb3"/><rect x="1361" y="345" width="5" height="5" fill="#74ffb2"/><rect x="1366" y="345" width="5" height="5" fill="#84ffb1"/><rect x="1371" y="345" width="5" height="5" fill="#94ffb0"/><rect x="1376" y="345" width="5" height="5" fill="#a4ffaf"/><rect x="1381" y="345" width="5" height="5" fill="#b5ffae"/><rect x="1386" y="345" width="5" height="5" fill="#c6ffac"/><rect x="1391" y="345" width="5" height="5" fill="#d8ffab"/><rect x="1396" y="345" width="5" height="5" fill="#ebffaa"/><rect x="1401" y="345" width="5" height="5" fill="#feffa9"/><rect x="1406" y="345" width="5" height="5" fill="#ffee9c"/><rect x="1411" y="345" width="5" height="5" fill="#ffdd90"/><rect x="1416" y="345" width="5" height="5" fill="#ffcf85"/><rect x="1421" y="345" width="5" height="5" fill="#ffc17b"/><rect x="1426" y="345" width="5" height="5" fill="#ffb572"/><rect x="1431" y="345" width="5" height="5" fill="#ffaa6a"/><rect x="1436" y="345" width="5" height="5" fill="#ffa063"/><rect x="1441" y="345" width="5" height="5" fill="#ff975c"/><rect x="1446" y="345" width="5" height="5" fill="#ff8e56"/><rect x="1451" y="345" width="5" height="5" fill="#ff8650"/><rect x="1456" y="345" width="5" height="5" fill="#ff7f4b"/><rect x="1461" y="345" width="5" height="5" fill="#ff7846"/><rect x="1466" y="345" width="5" height="5" fill="#ff7141"/><rect x="1471" y="345" width="5" height="5" fill="#ff6c3d"/><rect x="1476" y="345" width="5" height="5" fill="#ff6639"/><rect x="1481" y="345" width="5" height="5" fill="#ff6135"/><rect x="1486" y="345" width="5" height="5" fill="#ff5c31"/><rect x="1491" y="345" width="5" height="5" fill="#ff572e"/><rect x="1496" y="345" width="5" height="5" fill="#ff532b"/><rect x="1501" y="345" width="5" height="5" fill="#ff4f28"/><rect x="1506" y="345" width="5" height="5" fill="#ff4b25"/><rect x="1511" y="345" width="5" height="5" fill="#ff4722"/><rect x="1516" y="345" width="5" height="5" fill="#ff431f"/><rect x="1521" y="345" width="5" height="5" fill="#ff401d"/><rect x="1526" y="345" width="5" height="5" fill="#ff3d1b"/><rect x="1531" y="345" width="5" height="5" fill="#ff3a18"/><rect x="1536" y="345" width="5" height="5" fill="#ff3716"/><rect x="1541" y="345" width="5" height="5" fill="#ff3414"/><rect x="1546" y="345" width="5" height="5" fill="#ff3112"/><rect x="1551" y="345" width="5" height="5" fill="#ff2f10"/><rect x="1556" y="345" width="5" height="5" fill="#ff2d0f"/><rect x="1561" y="345" width="5" height="5" fill="#ff2a0d"/><rect x="1566" y="345" width="5" height="5" fill="#ff280b"/><rect x="1571" y="345" width="5" height="5" fill="#ff260a"/><rect x="1576" y="345" width="5" height="5" fill="#ff2408"/><rect x="1581" y="345" width="5" height="5" fill="#ff2207"/><rect x="1586" y="345" width="5" height="5" fill="#ff2005"/><rect x="1591" y="345" width="5" height="5" fill="#ff1e04"/><rect x="1596" y="345" width="5" height="5" fill="#ff1c03"/><rect x="1601" y="345" width="5" height="5" fill="#ff1a01"/><rect x="1606" y="345" width="5" height="5" fill="#ff1900"/><rect x="1611" y="345" width="5" height="5" fill="#ff1700"/><rect x="1616" y="345" width="5" height="5" fill="#ff1600"/><rect x="1621" y="345" width="5" height="5" fill="#ff1400"/><rect x="1626" y="345" width="5" height="5" fill="#ff1300"/><rect x="1306" y="350" width="10" height="5" fill="#00ffc7"/><rect x="1316" y="350" width="5" height="5" fill="#00ffc6"/><rect x="1321" y="350" width="5" height="5" fill="#0cffc5"/><rect x="1326" y="350" width="5" height="5" fill="#19ffc4"/><rect x="1331" y="350" width="5" height="5" fill="#26ffc4"/><rect x="1336" y="350" width="5" height="5" fill="#34ffc3"/><rect x="1341" y="350" width="5" height="5" fill="#42ffc2"/><rect x="1346" y="350" width="5" height="5" fill="#50ffc1"/><rect x="1351" y="350" width="5" height="5" fill="#5fffc0"/><rect x="1356" y="350" width="5" height="5" fill="#6effc0"/><rect x="1361" y="350" width="5" height="5" fill="#7effbf"/><rect x="1366" y="350" width="5" height="5" fill="#8effbe"/><rect x="1371" y="350" width="5" height="5" fill="#9effbd"/><rect x="1376" y="350" width="5" height="5" fill="#afffbc"/><rect x="1381" y="350" width="5" height="5" fill="#c1ffbb"/><rect x="1386" y="350" width="5" height="5" fill="#d3ffba"/><rect x="1391" y="350" width="5" height="5" fill="#e6ffb9"/><rect x="1396" y="350" width="5" height="5" fill="#faffb7"/><rect x="1401" y="350" width="5" height="5" fill="#fff1ac"/><rect x="1406" y="350" width="5" height="5" fill="#ffe09f"/><rect x="1411" y="350" width="5" height="5" fill="#ffd093"/><rect x="1416" y="350" width="5" height="5" fill="#ffc388"/><rect x="1421" y="350" width="5" height="5" fill="#ffb67e"/><rect x="1426" y="350" width="5" height="5" fill="#ffab76"/><rect x="1431" y="350" width="5" height="5" fill="#ffa06e"/><rect x="1436" y="350" width="5" height="5" fill="#ff9766"/><rect x="1441" y="350" width="5" height="5" fill="#ff8e5f"/><rect x="1446" y="350" width="5" height="5" fill="#ff8659"/><rect x="1451" y="350" width="5" height="5" fill="#ff7e53"/><rect x="1456" y="350" width="5" height="5" fill="#ff774e"/><rect x="1461" y="350" width="5" height="5" fill="#ff7149"/><rect x="1466" y="350" width="5" height="5" fill="#ff6b44"/><rect x="1471" y="350" width="5" height="5" fill="#ff6540"/><rect x="1476" y="350" width="5" height="5" fill="#ff603b"/><rect x="1481" y="350" width="5" height="5" fill="#ff5b38"/><rect x="1486" y="350" width="5" height="5" fill="#ff5634"/><rect x="1491" y="350" width="5" height="5" fill="#ff5231"/><rect x="1496" y="350" width="5" height="5" fill="#ff4d2d"/><rect x="1501" y="350" width="5" height="5" fill="#ff492a"/><rect x="1506" y="350" width="5" height="5" fill="#ff4627"/><rect x="1511" y="350" width="5" height="5" fill="#ff4225"/><rect x="1516" y="350" width="5" height="5" fill="#ff3f22"/><rect x="1521" y="350" width="5" height="5" fill="#ff3c1f"/><rect x="1526" y="350" width="5" height="5" fill="#ff381d"/><rect x="1531" y="350" width="5" height="5" fill="#ff361b"/><rect x="1536" y="350" width="5" height="5" fill="#ff3319"/><rect x="1541" y="350" width="5" height="5" fill="#ff3017"/><rect x="1546" y="350" width="5" height="5" fill="#ff2e15"/><rect x="1551" y="350" width="5" height="5" fill="#ff2b13"/><rect x="1556" y="350" width="5" height="5" fill="#ff2911"/><rect x="1561" y="350" width="5" height="5" fill="#ff270f"/><rect x="1566" y="350" width="5" height="5" fill="#ff240d"/><rect x="1571" y="350" width="5" height="5" fill="#ff220c"/><rect x="1576" y="350" width="5" height="5" fill="#ff200a"/><rect x="1581" y="350" width="5" height="5" fill="#ff1e09"/><rect x="1586" y="350" width="5" height="5" fill="#ff1d07"/><rect x="1591" y="350" width="5" height="5" fill="#ff1b06"/><rect x="1596" y="350" width="5" height="5" fill="#ff1905"/><rect x="1601" y="350" width="5" height="5" fill="#ff1703"/><rect x="1606" y="350" width="5" height="5" fill="#ff1602"/><rect x="1611" y="350" width="5" height="5" fill="#ff1401"/><rect x="1616" y="350" width="5" height="5" fill="#ff1300"/><rect x="1621" y="350" width="5" height="5" fill="#ff1100"/><rect x="1626" y="350" width="5" height="5" fill="#ff1000"/><rect x="1631" y="350" width="5" height="5" fill="#ff0f00"/><rect x="1636" y="350" width="5" height="5" fill="#ff0d00"/><rect x="1306" y="355" width="10" height="5" fill="#00ffd3"/><rect x="1316" y="355" width="5" height="5" fill="#04ffd2"/><rect x="1321" y="355" width="5" height="5" fill="#11ffd1"/><rect x="1326" y="355" width="5" height="5" fill="#1fffd1"/><rect x="1331" y="355" width="5" height="5" fill="#2cffd0"/><rect x="1336" y="355" width="5" height="5" fill="#3affcf"/><rect x="1341" y="355" width="5" height="5" fill="#49ffcf"/><rect x="1346" y="355" width="5" height="5" fill="#58ffce"/><rect x="1351" y="355" width="5" height="5" fill="#67ffcd"/><rect x="1356" y="355" width="5" height="5" fill="#77ffcd"/><rect x="1361" y="355" width="5" height="5" fill="#87ffcc"/><rect x="1366" y="355" width="5" height="5" fill="#98ffcb"/><rect x="1371" y="355" width="5" height="5" fill="#aaffca"/><rect x="1376" y="355" width="5" height="5" fill="#bcffca"/><rect x="1381" y="355" width="5" height="5" fill="#ceffc9"/><rect x="1386" y="355" width="5" height="5" fill="#e1ffc8"/><rect x="1391" y="355" width="5" height="5" fill="#f5ffc7"/><rect x="1396" y="355" width="5" height="5" fill="#fff5be"/><rect x="1401" y="355" width="5" height="5" fill="#ffe3af"/><rect x="1406" y="355" width="5" height="5" fill="#ffd3a2"/><rect x="1411" y="355" width="5" height="5" fill="#ffc496"/><rect x="1416" y="355" width="5" height="5" fill="#ffb78b"/><rect x="1421" y="355" width="5" height="5" fill="#ffab82"/><rect x="1426" y="355" width="5" height="5" fill="#ffa079"/><rect x="1431" y="355" width="5" height="5" fill="#ff9771"/><rect x="1436" y="355" width="5" height="5" fill="#ff8e69"/><rect x="1441" y="355" width="5" height="5" fill="#ff8562"/><rect x="1446" y="355" width="5" height="5" fill="#ff7e5c"/><rect x="1451" y="355" width="5" height="5" fill="#ff7756"/><rect x="1456" y="355" width="5" height="5" fill="#ff7051"/><rect x="1461" y="355" width="5" height="5" fill="#ff6a4c"/><rect x="1466" y="355" width="5" height="5" fill="#ff6447"/><rect x="1471" y="355" width="5" height="5" fill="#ff5f42"/><rect x="1476" y="355" width="5" height="5" fill="#ff5a3e"/><rect x="1481" y="355" width="5" height="5" fill="#ff553a"/><rect x="1486" y="355" width="5" height="5" fill="#ff5037"/><rect x="1491" y="355" width="5" height="5" fill="#ff4c33"/><rect x="1496" y="355" width="5" height="5" fill="#ff4830"/><rect x="1501" y="355" width="5" height="5" fill="#ff442d"/><rect x="1506" y="355" width="5" height="5" fill="#ff412a"/><rect x="1511" y="355" width="5" height="5" fill="#ff3d27"/><rect x="1516" y="355" width="5" height="5" fill="#ff3a24"/><rect x="1521" y="355" width="5" height="5" fill="#ff3722"/><rect x="1526" y="355" width="5" height="5" fill="#ff341f"/><rect x="1531" y="355" width="5" height="5" fill="#ff311d"/><rect x="1536" y="355" width="5" height="5" fill="#ff2f1b"/><rect x="1541" y="355" width="5" height="5" fill="#ff2c19"/><rect x="1546" y="355" width="5" height="5" fill="#ff2a17"/><rect x="1551" y="355" width="5" height="5" fill="#ff2715"/><rect x="1556" y="355" width="5" height="5" fill="#ff2513"/><rect x="1561" y="355" width="5" height="5" fill="#ff2311"/><rect x="1566" y="355" width="5" height="5" fill="#ff2110"/><rect x="1571" y="355" width="5" height="5" fill="#ff1f0e"/><rect x="1576" y="355" width="5" height="5" fill="#ff1d0c"/><rect x="1581" y="355" width="5" height="5" fill="#ff1b0b"/><rect x="1586" y="355" width="5" height="5" fill="#ff1909"/><rect x="1591" y="355" width="5" height="5" fill="#ff1808"/><rect x="1596" y="355" width="5" height="5" fill="#ff1607"/><rect x="1601" y="355" width="5" height="5" fill="#ff1405"/><rect x="1606" y="355" width="5" height="5" fill="#ff1304"/><rect x="1611" y="355" width="5" height="5" fill="#ff1103"/><rect x="1616" y="355" width="5" height="5" fill="#ff1002"/><rect x="1621" y="355" width="5" height="5" fill="#ff0f01"/><rect x="1626" y="355" width="5" height="5" fill="#ff0d00"/><rect x="1631" y="355" width="5" height="5" fill="#ff0c00"/><rect x="1636" y="355" width="5" height="5" fill="#ff0b00"/><rect x="1641" y="355" width="5" height="5" fill="#ff0a00"/><rect x="1646" y="355" width="5" height="5" fill="#ff0800"/><rect x="1301" y="360" width="10" height="5" fill="#00ffe0"/><rect x="1311" y="360" width="5" height="5" fill="#00ffdf"/><rect x="1316" y="360" width="5" height="5" fill="#09ffdf"/><rect x="1321" y="360" width="5" height="5" fill="#17ffde"/><rect x="1326" y="360" width="5" height="5" fill="#24ffde"/><rect x="1331" y="360" width="5" height="5" fill="#33ffdd"/><rect x="1336" y="360" width="5" height="5" fill="#41ffdd"/><rect x="1341" y="360" width="5" height="5" fill="#51ffdc"/><rect x="1346" y="360" width="5" height="5" fill="#60ffdc"/><rect x="1351" y="360" width="5" height="5" fill="#70ffdb"/><rect x="1356" y="360" width="5" height="5" fill="#81ffdb"/><rect x="1361" y="360" width="5" height="5" fill="#92ffda"/><rect x="1366" y="360" width="5" height="5" fill="#a4ffda"/><rect x="1371" y="360" width="5" height="5" fill="#b6ffd9"/><rect x="1376" y="360" width="5" height="5" fill="#c9ffd9"/><rect x="1381" y="360" width="5" height="5" fill="#dcffd8"/><rect x="1386" y="360" width="5" height="5" fill="#f1ffd7"/><rect x="1391" y="360" width="5" height="5" fill="#fff9d1"/><rect x="1396" y="360" width="5" height="5" fill="#ffe6c1"/><rect x="1401" y="360" width="5" height="5" fill="#ffd5b2"/><rect x="1406" y="360" width="5" height="5" fill="#ffc6a5"/><rect x="1411" y="360" width="5" height="5" fill="#ffb899"/><rect x="1416" y="360" width="5" height="5" fill="#ffac8e"/><rect x="1421" y="360" width="5" height="5" fill="#ffa185"/><rect x="1426" y="360" width="5" height="5" fill="#ff977c"/><rect x="1431" y="360" width="5" height="5" fill="#ff8d74"/><rect x="1436" y="360" width="5" height="5" fill="#ff856c"/><rect x="1441" y="360" width="5" height="5" fill="#ff7d65"/><rect x="1446" y="360" width="5" height="5" fill="#ff765f"/><rect x="1451" y="360" width="5" height="5" fill="#ff6f59"/><rect x="1456" y="360" width="5" height="5" fill="#ff6954"/><rect x="1461" y="360" width="5" height="5" fill="#ff634e"/><rect x="1466" y="360" width="5" height="5" fill="#ff5d4a"/><rect x="1471" y="360" width="5" height="5" fill="#ff5845"/><rect x="1476" y="360" width="5" height="5" fill="#ff5441"/><rect x="1481" y="360" width="5" height="5" fill="#ff4f3d"/><rect x="1486" y="360" width="5" height="5" fill="#ff4b39"/><rect x="1491" y="360" width="5" height="5" fill="#ff4736"/><rect x="1496" y="360" width="5" height="5" fill="#ff4332"/><rect x="1501" y="360" width="5" height="5" fill="#ff3f2f"/><rect x="1506" y="360" width="5" height="5" fill="#ff3c2c"/><rect x="1511" y="360" width="5" height="5" fill="#ff392a"/><rect x="1516" y="360" width="5" height="5" fill="#ff3627"/><rect x="1521" y="360" width="5" height="5" fill="#ff3324"/><rect x="1526" y="360" width="5" height="5" fill="#ff3022"/><rect x="1531" y="360" width="5" height="5" fill="#ff2d1f"/><rect x="1536" y="360" width="5" height="5" fill="#ff2b1d"/><rect x="1541" y="360" width="5" height="5" fill="#ff281b"/><rect x="1546" y="360" width="5" height="5" fill="#ff2619"/><rect x="1551" y="360" width="5" height="5" fill="#ff2417"/><rect x="1556" y="360" width="5" height="5" fill="#ff2115"/><rect x="1561" y="360" width="5" height="5" fill="#ff1f13"/><rect x="1566" y="360" width="5" height="5" fill="#ff1d12"/><rect x="1571" y="360" width="5" height="5" fill="#ff1c10"/><rect x="1576" y="360" width="5" height="5" fill="#ff1a0e"/><rect x="1581" y="360" width="5" height="5" fill="#ff180d"/><rect x="1586" y="360" width="5" height="5" fill="#ff160b"/><rect x="1591" y="360" width="5" height="5" fill="#ff150a"/><rect x="1596" y="360" width="5" height="5" fill="#ff1309"/><rect x="1601" y="360" width="5" height="5" fill="#ff1107"/><rect x="1606" y="360" width="5" height="5" fill="#ff1006"/><rect x="1611" y="360" width="5" height="5" fill="#ff0f05"/><rect x="1616" y="360" width="5" height="5" fill="#ff0d04"/><rect x="1621" y="360" width="5" height="5" fill="#ff0c02"/><rect x="1626" y="360" width="5" height="5" fill="#ff0b01"/><rect x="1631" y="360" width="5" height="5" fill="#ff0900"/><rect x="1636" y="360" width="5" height="5" fill="#ff0800"/><rect x="1641" y="360" width="5" height="5" fill="#ff0700"/><rect x="1646" y="360" width="5" height="5" fill="#ff0600"/><rect x="1651" y="360" width="5" height="5" fill="#ff0500"/><rect x="1301" y="365" width="10" height="5" fill="#00ffed"/><rect x="1311" y="365" width="5" height="5" fill="#01ffed"/><rect x="1316" y="365" width="5" height="5" fill="#0effec"/><rect x="1321" y="365" width="5" height="5" fill="#1cffec"/><rect x="1326" y="365" width="5" height="5" fill="#2bffec"/><rect x="1331" y="365" width="5" height="5" fill="#3affec"/><rect x="1336" y="365" width="5" height="5" fill="#49ffeb"/><rect x="1341" y="365" width="5" height="5" fill="#59ffeb"/><rect x="1346" y="365" width="5" height="5" fill="#69ffeb"/><rect x="1351" y="365" width="5" height="5" fill="#7affea"/><rect x="1356" y="365" width="5" height="5" fill="#8bffea"/><rect x="1361" y="365" width="5" height="5" fill="#9dffea"/><rect x="1366" y="365" width="5" height="5" fill="#b0ffea"/><rect x="1371" y="365" width="5" height="5" fill="#c3ffe9"/><rect x="1376" y="365" width="5" height="5" fill="#d7ffe9"/><rect x="1381" y="365" width="5" height="5" fill="#ecffe9"/><rect x="1386" y="365" width="5" height="5" fill="#fffde6"/><rect x="1391" y="365" width="5" height="5" fill="#ffe9d4"/><rect x="1396" y="365" width="5" height="5" fill="#ffd7c3"/><rect x="1401" y="365" width="5" height="5" fill="#ffc7b5"/><rect x="1406" y="365" width="5" height="5" fill="#ffb9a8"/><rect x="1411" y="365" width="5" height="5" fill="#ffad9c"/><rect x="1416" y="365" width="5" height="5" fill="#ffa191"/><rect x="1421" y="365" width="5" height="5" fill="#ff9788"/><rect x="1426" y="365" width="5" height="5" fill="#ff8d7f"/><rect x="1431" y="365" width="5" height="5" fill="#ff8577"/><rect x="1436" y="365" width="5" height="5" fill="#ff7c6f"/><rect x="1441" y="365" width="5" height="5" fill="#ff7568"/><rect x="1446" y="365" width="5" height="5" fill="#ff6e62"/><rect x="1451" y="365" width="5" height="5" fill="#ff685c"/><rect x="1456" y="365" width="5" height="5" fill="#ff6256"/><rect x="1461" y="365" width="5" height="5" fill="#ff5c51"/><rect x="1466" y="365" width="5" height="5" fill="#ff574c"/><rect x="1471" y="365" width="5" height="5" fill="#ff5248"/><rect x="1476" y="365" width="5" height="5" fill="#ff4e44"/><rect x="1481" y="365" width="5" height="5" fill="#ff4940"/><rect x="1486" y="365" width="5" height="5" fill="#ff453c"/><rect x="1491" y="365" width="5" height="5" fill="#ff4138"/><rect x="1496" y="365" width="5" height="5" fill="#ff3e35"/><rect x="1501" y="365" width="5" height="5" fill="#ff3a32"/><rect x="1506" y="365" width="5" height="5" fill="#ff372f"/><rect x="1511" y="365" width="5" height="5" fill="#ff342c"/><rect x="1516" y="365" width="5" height="5" fill="#ff3129"/><rect x="1521" y="365" width="5" height="5" fill="#ff2e27"/><rect x="1526" y="365" width="5" height="5" fill="#ff2c24"/><rect x="1531" y="365" width="5" height="5" fill="#ff2922"/><rect x="1536" y="365" width="5" height="5" fill="#ff271f"/><rect x="1541" y="365" width="5" height="5" fill="#ff241d"/><rect x="1546" y="365" width="5" height="5" fill="#ff221b"/><rect x="1551" y="365" width="5" height="5" fill="#ff2019"/><rect x="1556" y="365" width="5" height="5" fill="#ff1e17"/><rect x="1561" y="365" width="5" height="5" fill="#ff1c16"/><rect x="1566" y="365" width="5" height="5" fill="#ff1a14"/><rect x="1571" y="365" width="5" height="5" fill="#ff1812"/><rect x="1576" y="365" width="5" height="5" fill="#ff1610"/><rect x="1581" y="365" width="5" height="5" fill="#ff150f"/><rect x="1586" y="365" width="5" height="5" fill="#ff130d"/><rect x="1591" y="365" width="5" height="5" fill="#ff120c"/><rect x="1596" y="365" width="5" height="5" fill="#ff100b"/><rect x="1601" y="365" width="5" height="5" fill="#ff0f09"/><rect x="1606" y="365" width="5" height="5" fill="#ff0d08"/><rect x="1611" y="365" width="5" height="5" fill="#ff0c07"/><rect x="1616" y="365" width="5" height="5" fill="#ff0a05"/><rect x="1621" y="365" width="5" height="5" fill="#ff0904"/><rect x="1626" y="365" width="5" height="5" fill="#ff0803"/><rect x="1631" y="365" width="5" height="5" fill="#ff0702"/><rect x="1636" y="365" width="5" height="5" fill="#ff0601"/><rect x="1641" y="365" width="5" height="5" fill="#ff0400"/><rect x="1646" y="365" width="5" height="5" fill="#ff0300"/><rect x="1651" y="365" width="5" height="5" fill="#ff0200"/><rect x="1656" y="365" width="5" height="5" fill="#ff0100"/><rect x="1301" y="370" width="10" height="5" fill="#00fffb"/><rect x="1311" y="370" width="5" height="5" fill="#06fffb"/><rect x="1316" y="370" width="5" height="5" fill="#14fffb"/><rect x="1321" y="370" width="5" height="5" fill="#23fffb"/><rect x="1326" y="370" width="5" height="5" fill="#32fffb"/><rect x="1331" y="370" width="5" height="5" fill="#41fffb"/><rect x="1336" y="370" width="5" height="5" fill="#51fffb"/><rect x="1341" y="370" width="5" height="5" fill="#62fffb"/><rect x="1346" y="370" width="5" height="5" fill="#73fffb"/><rect x="1351" y="370" width="5" height="5" fill="#85fffb"/><rect x="1356" y="370" width="5" height="5" fill="#97fffb"/><rect x="1361" y="370" width="5" height="5" fill="#aafffb"/><rect x="1366" y="370" width="5" height="5" fill="#bdfffb"/><rect x="1371" y="370" width="5" height="5" fill="#d2fffb"/><rect x="1376" y="370" width="5" height="5" fill="#e7fffb"/><rect x="1381" y="370" width="5" height="5" fill="#fcfffb"/><rect x="1386" y="370" width="5" height="5" fill="#ffece8"/><rect x="1391" y="370" width="5" height="5" fill="#ffdad6"/><rect x="1396" y="370" width="5" height="5" fill="#ffc9c6"/><rect x="1401" y="370" width="5" height="5" fill="#ffbbb7"/><rect x="1406" y="370" width="5" height="5" fill="#ffadaa"/><rect x="1411" y="370" width="5" height="5" fill="#ffa29f"/><rect x="1416" y="370" width="5" height="5" fill="#ff9794"/><rect x="1421" y="370" width="5" height="5" fill="#ff8d8a"/><rect x="1426" y="370" width="5" height="5" fill="#ff8482"/><rect x="1431" y="370" width="5" height="5" fill="#ff7c79"/><rect x="1436" y="370" width="5" height="5" fill="#ff7472"/><rect x="1441" y="370" width="5" height="5" fill="#ff6d6b"/><rect x="1446" y="370" width="5" height="5" fill="#ff6765"/><rect x="1451" y="370" width="5" height="5" fill="#ff615f"/><rect x="1456" y="370" width="5" height="5" fill="#ff5b59"/><rect x="1461" y="370" width="5" height="5" fill="#ff5654"/><rect x="1466" y="370" width="5" height="5" fill="#ff514f"/><rect x="1471" y="370" width="5" height="5" fill="#ff4c4b"/><rect x="1476" y="370" width="5" height="5" fill="#ff4846"/><rect x="1481" y="370" width="5" height="5" fill="#ff4442"/><rect x="1486" y="370" width="5" height="5" fill="#ff403f"/><rect x="1491" y="370" width="5" height="5" fill="#ff3c3b"/><rect x="1496" y="370" width="5" height="5" fill="#ff3938"/><rect x="1501" y="370" width="5" height="5" fill="#ff3634"/><rect x="1506" y="370" width="5" height="5" fill="#ff3331"/><rect x="1511" y="370" width="5" height="5" fill="#ff302e"/><rect x="1516" y="370" width="5" height="5" fill="#ff2d2c"/><rect x="1521" y="370" width="5" height="5" fill="#ff2a29"/><rect x="1526" y="370" width="5" height="5" fill="#ff2826"/><rect x="1531" y="370" width="5" height="5" fill="#ff2524"/><rect x="1536" y="370" width="5" height="5" fill="#ff2322"/><rect x="1541" y="370" width="5" height="5" fill="#ff2020"/><rect x="1546" y="370" width="5" height="5" fill="#ff1e1d"/><rect x="1551" y="370" width="5" height="5" fill="#ff1c1b"/><rect x="1556" y="370" width="5" height="5" fill="#ff1a19"/><rect x="1561" y="370" width="5" height="5" fill="#ff1818"/><rect x="1566" y="370" width="5" height="5" fill="#ff1716"/><rect x="1571" y="370" width="5" height="5" fill="#ff1514"/><rect x="1576" y="370" width="5" height="5" fill="#ff1312"/><rect x="1581" y="370" width="5" height="5" fill="#ff1211"/><rect x="1586" y="370" width="5" height="5" fill="#ff100f"/><rect x="1591" y="370" width="5" height="5" fill="#ff0f0e"/><rect x="1596" y="370" width="5" height="5" fill="#ff0d0c"/><rect x="1601" y="370" width="5" height="5" fill="#ff0c0b"/><rect x="1606" y="370" width="5" height="5" fill="#ff0a0a"/><rect x="1611" y="370" width="5" height="5" fill="#ff0908"/><rect x="1616" y="370" width="5" height="5" fill="#ff0807"/><rect x="1621" y="370" width="5" height="5" fill="#ff0706"/><rect x="1626" y="370" width="5" height="5" fill="#ff0505"/><rect x="1631" y="370" width="5" height="5" fill="#ff0404"/><rect x="1636" y="370" width="5" height="5" fill="#ff0303"/><rect x="1641" y="370" width="5" height="5" fill="#ff0201"/><rect x="1646" y="370" width="5" height="5" fill="#ff0100"/><rect x="1651" y="370" width="10" height="5" fill="#ff0000"/><rect x="1296" y="375" width="5" height="5" fill="#00f5ff"/><rect x="1301" y="375" width="10" height="5" fill="#00f4ff"/><rect x="1311" y="375" width="5" height="5" fill="#0bf4ff"/><rect x="1316" y="375" width="5" height="5" fill="#19f4ff"/><rect x="1321" y="375" width="5" height="5" fill="#27f4ff"/><rect x="1326" y="375" width="5" height="5" fill="#37f3ff"/><rect x="1331" y="375" width="5" height="5" fill="#46f3ff"/><rect x="1336" y="375" width="5" height="5" fill="#56f3ff"/><rect x="1341" y="375" width="5" height="5" fill="#66f3ff"/><rect x="1346" y="375" width="5" height="5" fill="#77f3ff"/><rect x="1351" y="375" width="5" height="5" fill="#89f2ff"/><rect x="1356" y="375" width="5" height="5" fill="#9bf2ff"/><rect x="1361" y="375" width="5" height="5" fill="#aef2ff"/><rect x="1366" y="375" width="5" height="5" fill="#c1f2ff"/><rect x="1371" y="375" width="5" height="5" fill="#d5f1ff"/><rect x="1376" y="375" width="5" height="5" fill="#eaf1ff"/><rect x="1381" y="375" width="5" height="5" fill="#fff0fe"/><rect x="1386" y="375" width="5" height="5" fill="#ffddea"/><rect x="1391" y="375" width="5" height="5" fill="#ffcbd8"/><rect x="1396" y="375" width="5" height="5" fill="#ffbcc8"/><rect x="1401" y="375" width="5" height="5" fill="#ffaeba"/><rect x="1406" y="375" width="5" height="5" fill="#ffa2ad"/><rect x="1411" y="375" width="5" height="5" fill="#ff97a1"/><rect x="1416" y="375" width="5" height="5" fill="#ff8d97"/><rect x="1421" y="375" width="5" height="5" fill="#ff848d"/><rect x="1426" y="375" width="5" height="5" fill="#ff7b84"/><rect x="1431" y="375" width="5" height="5" fill="#ff737c"/><rect x="1436" y="375" width="5" height="5" fill="#ff6c75"/><rect x="1441" y="375" width="5" height="5" fill="#ff666e"/><rect x="1446" y="375" width="5" height="5" fill="#ff6067"/><rect x="1451" y="375" width="5" height="5" fill="#ff5a61"/><rect x="1456" y="375" width="5" height="5" fill="#ff545c"/><rect x="1461" y="375" width="5" height="5" fill="#ff5057"/><rect x="1466" y="375" width="5" height="5" fill="#ff4b52"/><rect x="1471" y="375" width="5" height="5" fill="#ff464d"/><rect x="1476" y="375" width="5" height="5" fill="#ff4249"/><rect x="1481" y="375" width="5" height="5" fill="#ff3e45"/><rect x="1486" y="375" width="5" height="5" fill="#ff3b41"/><rect x="1491" y="375" width="5" height="5" fill="#ff373d"/><rect x="1496" y="375" width="5" height="5" fill="#ff343a"/><rect x="1501" y="375" width="5" height="5" fill="#ff3137"/><rect x="1506" y="375" width="5" height="5" fill="#ff2e34"/><rect x="1511" y="375" width="5" height="5" fill="#ff2b31"/><rect x="1516" y="375" width="5" height="5" fill="#ff282e"/><rect x="1521" y="375" width="5" height="5" fill="#ff262b"/><rect x="1526" y="375" width="5" height="5" fill="#ff2329"/><rect x="1531" y="375" width="5" height="5" fill="#ff2126"/><rect x="1536" y="375" width="5" height="5" fill="#ff1f24"/><rect x="1541" y="375" width="5" height="5" fill="#ff1d22"/><rect x="1546" y="375" width="5" height="5" fill="#ff1b20"/><rect x="1551" y="375" width="5" height="5" fill="#ff191d"/><rect x="1556" y="375" width="5" height="5" fill="#ff171c"/><rect x="1561" y="375" width="5" height="5" fill="#ff151a"/><rect x="1566" y="375" width="5" height="5" fill="#ff1318"/><rect x="1571" y="375" width="5" height="5" fill="#ff1216"/><rect x="1576" y="375" width="5" height="5" fill="#ff1014"/><rect x="1581" y="375" width="5" height="5" fill="#ff0e13"/><rect x="1586" y="375" width="5" height="5" fill="#ff0d11"/><rect x="1591" y="375" width="5" height="5" fill="#ff0c10"/><rect x="1596" y="375" width="5" height="5" fill="#ff0a0e"/><rect x="1601" y="375" width="5" height="5" fill="#ff090d"/><rect x="1606" y="375" width="5" height="5" fill="#ff080c"/><rect x="1611" y="375" width="5" height="5" fill="#ff060a"/><rect x="1616" y="375" width="5" height="5" fill="#ff0509"/><rect x="1621" y="375" width="5" height="5" fill="#ff0408"/><rect x="1626" y="375" width="5" height="5" fill="#ff0306"/><rect x="1631" y="375" width="5" height="5" fill="#ff0205"/><rect x="1636" y="375" width="5" height="5" fill="#ff0104"/><rect x="1641" y="375" width="5" height="5" fill="#ff0003"/><rect x="1646" y="375" width="5" height="5" fill="#ff0002"/><rect x="1651" y="375" width="5" height="5" fill="#ff0001"/><rect x="1656" y="375" width="5" height="5" fill="#ff0000"/><rect x="1296" y="380" width="10" height="5" fill="#00e7ff"/><rect x="1306" y="380" width="5" height="5" fill="#02e6ff"/><rect x="1311" y="380" width="5" height="5" fill="#0fe6ff"/><rect x="1316" y="380" width="5" height="5" fill="#1de5ff"/><rect x="1321" y="380" width="5" height="5" fill="#2ce5ff"/><rect x="1326" y="380" width="5" height="5" fill="#3ae5ff"/><rect x="1331" y="380" width="5" height="5" fill="#49e4ff"/><rect x="1336" y="380" width="5" height="5" fill="#59e4ff"/><rect x="1341" y="380" width="5" height="5" fill="#69e3ff"/><rect x="1346" y="380" width="5" height="5" fill="#7ae3ff"/><rect x="1351" y="380" width="5" height="5" fill="#8be2ff"/><rect x="1356" y="380" width="5" height="5" fill="#9de2ff"/><rect x="1361" y="380" width="5" height="5" fill="#afe1ff"/><rect x="1366" y="380" width="5" height="5" fill="#c2e1ff"/><rect x="1371" y="380" width="5" height="5" fill="#d5e0ff"/><rect x="1376" y="380" width="5" height="5" fill="#e9e0ff"/><rect x="1381" y="380" width="5" height="5" fill="#fedfff"/><rect x="1386" y="380" width="5" height="5" fill="#ffcdec"/><rect x="1391" y="380" width="5" height="5" fill="#ffbdda"/><rect x="1396" y="380" width="5" height="5" fill="#ffafca"/><rect x="1401" y="380" width="5" height="5" fill="#ffa2bc"/><rect x="1406" y="380" width="5" height="5" fill="#ff97af"/><rect x="1411" y="380" width="5" height="5" fill="#ff8da4"/><rect x="1416" y="380" width="5" height="5" fill="#ff8399"/><rect x="1421" y="380" width="5" height="5" fill="#ff7a90"/><rect x="1426" y="380" width="5" height="5" fill="#ff7387"/><rect x="1431" y="380" width="5" height="5" fill="#ff6b7f"/><rect x="1436" y="380" width="5" height="5" fill="#ff6577"/><rect x="1441" y="380" width="5" height="5" fill="#ff5e70"/><rect x="1446" y="380" width="5" height="5" fill="#ff586a"/><rect x="1451" y="380" width="5" height="5" fill="#ff5364"/><rect x="1456" y="380" width="5" height="5" fill="#ff4e5e"/><rect x="1461" y="380" width="5" height="5" fill="#ff4959"/><rect x="1466" y="380" width="5" height="5" fill="#ff4554"/><rect x="1471" y="380" width="5" height="5" fill="#ff4150"/><rect x="1476" y="380" width="5" height="5" fill="#ff3d4b"/><rect x="1481" y="380" width="5" height="5" fill="#ff3947"/><rect x="1486" y="380" width="5" height="5" fill="#ff3643"/><rect x="1491" y="380" width="5" height="5" fill="#ff3240"/><rect x="1496" y="380" width="5" height="5" fill="#ff2f3c"/><rect x="1501" y="380" width="5" height="5" fill="#ff2c39"/><rect x="1506" y="380" width="5" height="5" fill="#ff2936"/><rect x="1511" y="380" width="5" height="5" fill="#ff2733"/><rect x="1516" y="380" width="5" height="5" fill="#ff2430"/><rect x="1521" y="380" width="5" height="5" fill="#ff222d"/><rect x="1526" y="380" width="5" height="5" fill="#ff1f2b"/><rect x="1531" y="380" width="5" height="5" fill="#ff1d28"/><rect x="1536" y="380" width="5" height="5" fill="#ff1b26"/><rect x="1541" y="380" width="5" height="5" fill="#ff1924"/><rect x="1546" y="380" width="5" height="5" fill="#ff1722"/><rect x="1551" y="380" width="5" height="5" fill="#ff1520"/><rect x="1556" y="380" width="5" height="5" fill="#ff131e"/><rect x="1561" y="380" width="5" height="5" fill="#ff121c"/><rect x="1566" y="380" width="5" height="5" fill="#ff101a"/><rect x="1571" y="380" width="5" height="5" fill="#ff0e18"/><rect x="1576" y="380" width="5" height="5" fill="#ff0d16"/><rect x="1581" y="380" width="5" height="5" fill="#ff0b15"/><rect x="1586" y="380" width="5" height="5" fill="#ff0a13"/><rect x="1591" y="380" width="5" height="5" fill="#ff0912"/><rect x="1596" y="380" width="5" height="5" fill="#ff0710"/><rect x="1601" y="380" width="5" height="5" fill="#ff060f"/><rect x="1606" y="380" width="5" height="5" fill="#ff050d"/><rect x="1611" y="380" width="5" height="5" fill="#ff040c"/><rect x="1616" y="380" width="5" height="5" fill="#ff020b"/><rect x="1621" y="380" width="5" height="5" fill="#ff0109"/><rect x="1626" y="380" width="5" height="5" fill="#ff0008"/><rect x="1631" y="380" width="5" height="5" fill="#ff0007"/><rect x="1636" y="380" width="5" height="5" fill="#ff0006"/><rect x="1641" y="380" width="5" height="5" fill="#ff0005"/><rect x="1646" y="380" width="5" height="5" fill="#ff0004"/><rect x="1651" y="380" width="5" height="5" fill="#ff0003"/><rect x="1656" y="380" width="5" height="5" fill="#ff0002"/><rect x="1291" y="385" width="10" height="5" fill="#00daff"/><rect x="1301" y="385" width="5" height="5" fill="#00d9ff"/><rect x="1306" y="385" width="5" height="5" fill="#07d9ff"/><rect x="1311" y="385" width="5" height="5" fill="#14d8ff"/><rect x="1316" y="385" width="5" height="5" fill="#21d8ff"/><rect x="1321" y="385" width="5" height="5" fill="#2fd7ff"/><rect x="1326" y="385" width="5" height="5" fill="#3ed6ff"/><rect x="1331" y="385" width="5" height="5" fill="#4dd6ff"/><rect x="1336" y="385" width="5" height="5" fill="#5cd5ff"/><rect x="1341" y="385" width="5" height="5" fill="#6cd4ff"/><rect x="1346" y="385" width="5" height="5" fill="#7cd4ff"/><rect x="1351" y="385" width="5" height="5" fill="#8dd3ff"/><rect x="1356" y="385" width="5" height="5" fill="#9ed2ff"/><rect x="1361" y="385" width="5" height="5" fill="#b0d2ff"/><rect x="1366" y="385" width="5" height="5" fill="#c2d1ff"/><rect x="1371" y="385" width="5" height="5" fill="#d5d0ff"/><rect x="1376" y="385" width="5" height="5" fill="#e9cfff"/><rect x="1381" y="385" width="5" height="5" fill="#fdceff"/><rect x="1386" y="385" width="5" height="5" fill="#ffbfed"/><rect x="1391" y="385" width="5" height="5" fill="#ffb0dc"/><rect x="1396" y="385" width="5" height="5" fill="#ffa3cc"/><rect x="1401" y="385" width="5" height="5" fill="#ff97be"/><rect x="1406" y="385" width="5" height="5" fill="#ff8cb2"/><rect x="1411" y="385" width="5" height="5" fill="#ff83a6"/><rect x="1416" y="385" width="5" height="5" fill="#ff7a9c"/><rect x="1421" y="385" width="5" height="5" fill="#ff7292"/><rect x="1426" y="385" width="5" height="5" fill="#ff6a8a"/><rect x="1431" y="385" width="5" height="5" fill="#ff6381"/><rect x="1436" y="385" width="5" height="5" fill="#ff5d7a"/><rect x="1441" y="385" width="5" height="5" fill="#ff5773"/><rect x="1446" y="385" width="5" height="5" fill="#ff526d"/><rect x="1451" y="385" width="5" height="5" fill="#ff4d67"/><rect x="1456" y="385" width="5" height="5" fill="#ff4861"/><rect x="1461" y="385" width="5" height="5" fill="#ff435c"/><rect x="1466" y="385" width="5" height="5" fill="#ff3f57"/><rect x="1471" y="385" width="5" height="5" fill="#ff3b52"/><rect x="1476" y="385" width="5" height="5" fill="#ff374e"/><rect x="1481" y="385" width="5" height="5" fill="#ff344a"/><rect x="1486" y="385" width="5" height="5" fill="#ff3146"/><rect x="1491" y="385" width="5" height="5" fill="#ff2e42"/><rect x="1496" y="385" width="5" height="5" fill="#ff2b3f"/><rect x="1501" y="385" width="5" height="5" fill="#ff283b"/><rect x="1506" y="385" width="5" height="5" fill="#ff2538"/><rect x="1511" y="385" width="5" height="5" fill="#ff2235"/><rect x="1516" y="385" width="5" height="5" fill="#ff2032"/><rect x="1521" y="385" width="5" height="5" fill="#ff1e30"/><rect x="1526" y="385" width="5" height="5" fill="#ff1c2d"/><rect x="1531" y="385" width="5" height="5" fill="#ff192b"/><rect x="1536" y="385" width="5" height="5" fill="#ff1728"/><rect x="1541" y="385" width="5" height="5" fill="#ff1526"/><rect x="1546" y="385" width="5" height="5" fill="#ff1424"/><rect x="1551" y="385" width="5" height="5" fill="#ff1222"/><rect x="1556" y="385" width="5" height="5" fill="#ff1020"/><rect x="1561" y="385" width="5" height="5" fill="#ff0e1e"/><rect x="1566" y="385" width="5" height="5" fill="#ff0d1c"/><rect x="1571" y="385" width="5" height="5" fill="#ff0b1a"/><rect x="1576" y="385" width="5" height="5" fill="#ff0a18"/><rect x="1581" y="385" width="5" height="5" fill="#ff0817"/><rect x="1586" y="385" width="5" height="5" fill="#ff0715"/><rect x="1591" y="385" width="5" height="5" fill="#ff0613"/><rect x="1596" y="385" width="5" height="5" fill="#ff0412"/><rect x="1601" y="385" width="5" height="5" fill="#ff0310"/><rect x="1606" y="385" width="5" height="5" fill="#ff020f"/><rect x="1611" y="385" width="5" height="5" fill="#ff010e"/><rect x="1616" y="385" width="5" height="5" fill="#ff000c"/><rect x="1621" y="385" width="5" height="5" fill="#ff000b"/><rect x="1626" y="385" width="5" height="5" fill="#ff000a"/><rect x="1631" y="385" width="5" height="5" fill="#ff0009"/><rect x="1636" y="385" width="5" height="5" fill="#ff0008"/><rect x="1641" y="385" width="5" height="5" fill="#ff0006"/><rect x="1291" y="390" width="5" height="5" fill="#00ceff"/><rect x="1296" y="390" width="5" height="5" fill="#00cdff"/><rect x="1301" y="390" width="5" height="5" fill="#00ccff"/><rect x="1306" y="390" width="5" height="5" fill="#0bccff"/><rect x="1311" y="390" width="5" height="5" fill="#18cbff"/><rect x="1316" y="390" width="5" height="5" fill="#25caff"/><rect x="1321" y="390" width="5" height="5" fill="#33caff"/><rect x="1326" y="390" width="5" height="5" fill="#41c9ff"/><rect x="1331" y="390" width="5" height="5" fill="#50c8ff"/><rect x="1336" y="390" width="5" height="5" fill="#5fc7ff"/><rect x="1341" y="390" width="5" height="5" fill="#6ec6ff"/><rect x="1346" y="390" width="5" height="5" fill="#7ec5ff"/><rect x="1351" y="390" width="5" height="5" fill="#8ec4ff"/><rect x="1356" y="390" width="5" height="5" fill="#9fc4ff"/><rect x="1361" y="390" width="5" height="5" fill="#b1c3ff"/><rect x="1366" y="390" width="5" height="5" fill="#c3c2ff"/><rect x="1371" y="390" width="5" height="5" fill="#d5c1ff"/><rect x="1376" y="390" width="5" height="5" fill="#e8bfff"/><rect x="1381" y="390" width="5" height="5" fill="#fcbeff"/><rect x="1386" y="390" width="5" height="5" fill="#ffb1ef"/><rect x="1391" y="390" width="5" height="5" fill="#ffa3de"/><rect x="1396" y="390" width="5" height="5" fill="#ff97ce"/><rect x="1401" y="390" width="5" height="5" fill="#ff8cc0"/><rect x="1406" y="390" width="5" height="5" fill="#ff82b4"/><rect x="1411" y="390" width="5" height="5" fill="#ff79a9"/><rect x="1416" y="390" width="5" height="5" fill="#ff719e"/><rect x="1421" y="390" width="5" height="5" fill="#ff6995"/><rect x="1426" y="390" width="5" height="5" fill="#ff628c"/><rect x="1431" y="390" width="5" height="5" fill="#ff5c84"/><rect x="1436" y="390" width="5" height="5" fill="#ff567d"/><rect x="1441" y="390" width="5" height="5" fill="#ff5076"/><rect x="1446" y="390" width="5" height="5" fill="#ff4b6f"/><rect x="1451" y="390" width="5" height="5" fill="#ff4669"/><rect x="1456" y="390" width="5" height="5" fill="#ff4264"/><rect x="1461" y="390" width="5" height="5" fill="#ff3d5e"/><rect x="1466" y="390" width="5" height="5" fill="#ff3959"/><rect x="1471" y="390" width="5" height="5" fill="#ff3655"/><rect x="1476" y="390" width="5" height="5" fill="#ff3250"/><rect x="1481" y="390" width="5" height="5" fill="#ff2f4c"/><rect x="1486" y="390" width="5" height="5" fill="#ff2c48"/><rect x="1491" y="390" width="5" height="5" fill="#ff2945"/><rect x="1496" y="390" width="5" height="5" fill="#ff2641"/><rect x="1501" y="390" width="5" height="5" fill="#ff233e"/><rect x="1506" y="390" width="5" height="5" fill="#ff213a"/><rect x="1511" y="390" width="5" height="5" fill="#ff1e37"/><rect x="1516" y="390" width="5" height="5" fill="#ff1c35"/><rect x="1521" y="390" width="5" height="5" fill="#ff1a32"/><rect x="1526" y="390" width="5" height="5" fill="#ff182f"/><rect x="1531" y="390" width="5" height="5" fill="#ff162d"/><rect x="1536" y="390" width="5" height="5" fill="#ff142a"/><rect x="1541" y="390" width="5" height="5" fill="#ff1228"/><rect x="1546" y="390" width="5" height="5" fill="#ff1026"/><rect x="1551" y="390" width="5" height="5" fill="#ff0e24"/><rect x="1556" y="390" width="5" height="5" fill="#ff0d22"/><rect x="1561" y="390" width="5" height="5" fill="#ff0b20"/><rect x="1566" y="390" width="5" height="5" fill="#ff0a1e"/><rect x="1571" y="390" width="5" height="5" fill="#ff081c"/><rect x="1576" y="390" width="5" height="5" fill="#ff071a"/><rect x="1581" y="390" width="5" height="5" fill="#ff0518"/><rect x="1586" y="390" width="5" height="5" fill="#ff0417"/><rect x="1591" y="390" width="5" height="5" fill="#ff0315"/><rect x="1596" y="390" width="5" height="5" fill="#ff0214"/><rect x="1601" y="390" width="5" height="5" fill="#ff0012"/><rect x="1606" y="390" width="5" height="5" fill="#ff0011"/><rect x="1611" y="390" width="5" height="5" fill="#ff000f"/><rect x="1616" y="390" width="5" height="5" fill="#ff000e"/><rect x="1621" y="390" width="5" height="5" fill="#ff000d"/><rect x="1626" y="390" width="5" height="5" fill="#ff000c"/><rect x="1631" y="390" width="5" height="5" fill="#ff000a"/><rect x="1291" y="395" width="5" height="5" fill="#00c2ff"/><rect x="1296" y="395" width="5" height="5" fill="#00c1ff"/><rect x="1301" y="395" width="5" height="5" fill="#03c0ff"/><rect x="1306" y="395" width="5" height="5" fill="#0fbfff"/><rect x="1311" y="395" width="5" height="5" fill="#1cbfff"/><rect x="1316" y="395" width="5" height="5" fill="#29beff"/><rect x="1321" y="395" width="5" height="5" fill="#37bdff"/><rect x="1326" y="395" width="5" height="5" fill="#45bcff"/><rect x="1331" y="395" width="5" height="5" fill="#53bbff"/><rect x="1336" y="395" width="5" height="5" fill="#61baff"/><rect x="1341" y="395" width="5" height="5" fill="#71b9ff"/><rect x="1346" y="395" width="5" height="5" fill="#80b8ff"/><rect x="1351" y="395" width="5" height="5" fill="#90b7ff"/><rect x="1356" y="395" width="5" height="5" fill="#a0b6ff"/><rect x="1361" y="395" width="5" height="5" fill="#b1b4ff"/><rect x="1366" y="395" width="5" height="5" fill="#c3b3ff"/><rect x="1371" y="395" width="5" height="5" fill="#d5b2ff"/><rect x="1376" y="395" width="5" height="5" fill="#e8b1ff"/><rect x="1381" y="395" width="5" height="5" fill="#fbafff"/><rect x="1386" y="395" width="5" height="5" fill="#ffa4f0"/><rect x="1391" y="395" width="5" height="5" fill="#ff97df"/><rect x="1396" y="395" width="5" height="5" fill="#ff8cd0"/><rect x="1401" y="395" width="5" height="5" fill="#ff82c3"/><rect x="1406" y="395" width="5" height="5" fill="#ff78b6"/><rect x="1411" y="395" width="5" height="5" fill="#ff70ab"/><rect x="1416" y="395" width="5" height="5" fill="#ff68a1"/><rect x="1421" y="395" width="5" height="5" fill="#ff6197"/><rect x="1426" y="395" width="5" height="5" fill="#ff5a8e"/><rect x="1431" y="395" width="5" height="5" fill="#ff5486"/><rect x="1436" y="395" width="5" height="5" fill="#ff4f7f"/><rect x="1441" y="395" width="5" height="5" fill="#ff4978"/><rect x="1446" y="395" width="5" height="5" fill="#ff4472"/><rect x="1451" y="395" width="5" height="5" fill="#ff406c"/><rect x="1456" y="395" width="5" height="5" fill="#ff3c66"/><rect x="1461" y="395" width="5" height="5" fill="#ff3861"/><rect x="1466" y="395" width="5" height="5" fill="#ff345c"/><rect x="1471" y="395" width="5" height="5" fill="#ff3057"/><rect x="1476" y="395" width="5" height="5" fill="#ff2d53"/><rect x="1481" y="395" width="5" height="5" fill="#ff2a4e"/><rect x="1486" y="395" width="5" height="5" fill="#ff274b"/><rect x="1491" y="395" width="5" height="5" fill="#ff2447"/><rect x="1496" y="395" width="5" height="5" fill="#ff2143"/><rect x="1501" y="395" width="5" height="5" fill="#ff1f40"/><rect x="1506" y="395" width="5" height="5" fill="#ff1c3d"/><rect x="1511" y="395" width="5" height="5" fill="#ff1a3a"/><rect x="1516" y="395" width="5" height="5" fill="#ff1837"/><rect x="1521" y="395" width="5" height="5" fill="#ff1634"/><rect x="1526" y="395" width="5" height="5" fill="#ff1431"/><rect x="1531" y="395" width="5" height="5" fill="#ff122f"/><rect x="1536" y="395" width="5" height="5" fill="#ff102c"/><rect x="1541" y="395" width="5" height="5" fill="#ff0e2a"/><rect x="1546" y="395" width="5" height="5" fill="#ff0d28"/><rect x="1551" y="395" width="5" height="5" fill="#ff0b26"/><rect x="1556" y="395" width="5" height="5" fill="#ff0924"/><rect x="1561" y="395" width="5" height="5" fill="#ff0822"/><rect x="1566" y="395" width="5" height="5" fill="#ff0720"/><rect x="1571" y="395" width="5" height="5" fill="#ff051e"/><rect x="1576" y="395" width="5" height="5" fill="#ff041c"/><rect x="1581" y="395" width="5" height="5" fill="#ff021a"/><rect x="1586" y="395" width="5" height="5" fill="#ff0119"/><rect x="1591" y="395" width="5" height="5" fill="#ff0017"/><rect x="1596" y="395" width="5" height="5" fill="#ff0016"/><rect x="1601" y="395" width="5" height="5" fill="#ff0014"/><rect x="1606" y="395" width="5" height="5" fill="#ff0013"/><rect x="1611" y="395" width="5" height="5" fill="#ff0011"/><rect x="1616" y="395" width="5" height="5" fill="#ff0010"/><rect x="1621" y="395" width="5" height="5" fill="#ff000f"/><rect x="1286" y="400" width="5" height="5" fill="#00b7ff"/><rect x="1291" y="400" width="10" height="5" fill="#00b6ff"/><rect x="1301" y="400" width="5" height="5" fill="#07b5ff"/><rect x="1306" y="400" width="5" height="5" fill="#13b4ff"/><rect x="1311" y="400" width="5" height="5" fill="#20b3ff"/><rect x="1316" y="400" width="5" height="5" fill="#2db2ff"/><rect x="1321" y="400" width="5" height="5" fill="#3ab1ff"/><rect x="1326" y="400" width="5" height="5" fill="#48afff"/><rect x="1331" y="400" width="5" height="5" fill="#56aeff"/><rect x="1336" y="400" width="5" height="5" fill="#64adff"/><rect x="1341" y="400" width="5" height="5" fill="#73acff"/><rect x="1346" y="400" width="5" height="5" fill="#82abff"/><rect x="1351" y="400" width="5" height="5" fill="#92aaff"/><rect x="1356" y="400" width="5" height="5" fill="#a2a8ff"/><rect x="1361" y="400" width="5" height="5" fill="#b2a7ff"/><rect x="1366" y="400" width="5" height="5" fill="#c3a6ff"/><rect x="1371" y="400" width="5" height="5" fill="#d5a4ff"/><rect x="1376" y="400" width="5" height="5" fill="#e7a3ff"/><rect x="1381" y="400" width="5" height="5" fill="#faa1ff"/><rect x="1386" y="400" width="5" height="5" fill="#ff97f2"/><rect x="1391" y="400" width="5" height="5" fill="#ff8ce1"/><rect x="1396" y="400" width="5" height="5" fill="#ff81d2"/><rect x="1401" y="400" width="5" height="5" fill="#ff77c5"/><rect x="1406" y="400" width="5" height="5" fill="#ff6fb8"/><rect x="1411" y="400" width="5" height="5" fill="#ff67ad"/><rect x="1416" y="400" width="5" height="5" fill="#ff5fa3"/><rect x="1421" y="400" width="5" height="5" fill="#ff599a"/><rect x="1426" y="400" width="5" height="5" fill="#ff5391"/><rect x="1431" y="400" width="5" height="5" fill="#ff4d89"/><rect x="1436" y="400" width="5" height="5" fill="#ff4881"/><rect x="1441" y="400" width="5" height="5" fill="#ff437a"/><rect x="1446" y="400" width="5" height="5" fill="#ff3e74"/><rect x="1451" y="400" width="5" height="5" fill="#ff3a6e"/><rect x="1456" y="400" width="5" height="5" fill="#ff3668"/><rect x="1461" y="400" width="5" height="5" fill="#ff3263"/><rect x="1466" y="400" width="5" height="5" fill="#ff2e5e"/><rect x="1471" y="400" width="5" height="5" fill="#ff2b59"/><rect x="1476" y="400" width="5" height="5" fill="#ff2855"/><rect x="1481" y="400" width="5" height="5" fill="#ff2551"/><rect x="1486" y="400" width="5" height="5" fill="#ff224d"/><rect x="1491" y="400" width="5" height="5" fill="#ff2049"/><rect x="1496" y="400" width="5" height="5" fill="#ff1d45"/><rect x="1501" y="400" width="5" height="5" fill="#ff1b42"/><rect x="1506" y="400" width="5" height="5" fill="#ff183f"/><rect x="1511" y="400" width="5" height="5" fill="#ff163c"/><rect x="1516" y="400" width="5" height="5" fill="#ff1439"/><rect x="1521" y="400" width="5" height="5" fill="#ff1236"/><rect x="1526" y="400" width="5" height="5" fill="#ff1033"/><rect x="1531" y="400" width="5" height="5" fill="#ff0e31"/><rect x="1536" y="400" width="5" height="5" fill="#ff0d2e"/><rect x="1541" y="400" width="5" height="5" fill="#ff0b2c"/><rect x="1546" y="400" width="5" height="5" fill="#ff092a"/><rect x="1551" y="400" width="5" height="5" fill="#ff0828"/><rect x="1556" y="400" width="5" height="5" fill="#ff0625"/><rect x="1561" y="400" width="5" height="5" fill="#ff0523"/><rect x="1566" y="400" width="5" height="5" fill="#ff0322"/><rect x="1571" y="400" width="5" height="5" fill="#ff0220"/><rect x="1576" y="400" width="5" height="5" fill="#ff011e"/><rect x="1581" y="400" width="5" height="5" fill="#ff001c"/><rect x="1586" y="400" width="5" height="5" fill="#ff001a"/><rect x="1591" y="400" width="5" height="5" fill="#ff0019"/><rect x="1596" y="400" width="5" height="5" fill="#ff0017"/><rect x="1601" y="400" width="5" height="5" fill="#ff0016"/><rect x="1606" y="400" width="5" height="5" fill="#ff0014"/><rect x="1286" y="405" width="5" height="5" fill="#00adff"/><rect x="1291" y="405" width="5" height="5" fill="#00acff"/><rect x="1296" y="405" width="5" height="5" fill="#00aaff"/><rect x="1301" y="405" width="5" height="5" fill="#0ba9ff"/><rect x="1306" y="405" width="5" height="5" fill="#17a8ff"/><rect x="1311" y="405" width="5" height="5" fill="#24a7ff"/><rect x="1316" y="405" width="5" height="5" fill="#30a6ff"/><rect x="1321" y="405" width="5" height="5" fill="#3da5ff"/><rect x="1326" y="405" width="5" height="5" fill="#4ba4ff"/><rect x="1331" y="405" width="5" height="5" fill="#58a2ff"/><rect x="1336" y="405" width="5" height="5" fill="#67a1ff"/><rect x="1341" y="405" width="5" height="5" fill="#75a0ff"/><rect x="1346" y="405" width="5" height="5" fill="#849eff"/><rect x="1351" y="405" width="5" height="5" fill="#939dff"/><rect x="1356" y="405" width="5" height="5" fill="#a39cff"/><rect x="1361" y="405" width="5" height="5" fill="#b39aff"/><rect x="1366" y="405" width="5" height="5" fill="#c499ff"/><rect x="1371" y="405" width="5" height="5" fill="#d597ff"/><rect x="1376" y="405" width="5" height="5" fill="#e695ff"/><rect x="1381" y="405" width="5" height="5" fill="#f994ff"/><rect x="1386" y="405" width="5" height="5" fill="#ff8bf3"/><rect x="1391" y="405" width="5" height="5" fill="#ff80e3"/><rect x="1396" y="405" width="5" height="5" fill="#ff76d4"/><rect x="1401" y="405" width="5" height="5" fill="#ff6dc7"/><rect x="1406" y="405" width="5" height="5" fill="#ff65ba"/><rect x="1411" y="405" width="5" height="5" fill="#ff5eaf"/><rect x="1416" y="405" width="5" height="5" fill="#ff57a5"/><rect x="1421" y="405" width="5" height="5" fill="#ff519c"/><rect x="1426" y="405" width="5" height="5" fill="#ff4b93"/><rect x="1431" y="405" width="5" height="5" fill="#ff468b"/><rect x="1436" y="405" width="5" height="5" fill="#ff4184"/><rect x="1441" y="405" width="5" height="5" fill="#ff3c7d"/><rect x="1446" y="405" width="5" height="5" fill="#ff3876"/><rect x="1451" y="405" width="5" height="5" fill="#ff3470"/><rect x="1456" y="405" width="5" height="5" fill="#ff306b"/><rect x="1461" y="405" width="5" height="5" fill="#ff2c65"/><rect x="1466" y="405" width="5" height="5" fill="#ff2960"/><rect x="1471" y="405" width="5" height="5" fill="#ff265c"/><rect x="1476" y="405" width="5" height="5" fill="#ff2357"/><rect x="1481" y="405" width="5" height="5" fill="#ff2053"/><rect x="1486" y="405" width="5" height="5" fill="#ff1e4f"/><rect x="1491" y="405" width="5" height="5" fill="#ff1b4b"/><rect x="1496" y="405" width="5" height="5" fill="#ff1948"/><rect x="1501" y="405" width="5" height="5" fill="#ff1644"/><rect x="1506" y="405" width="5" height="5" fill="#ff1441"/><rect x="1511" y="405" width="5" height="5" fill="#ff123e"/><rect x="1516" y="405" width="5" height="5" fill="#ff103b"/><rect x="1521" y="405" width="5" height="5" fill="#ff0e38"/><rect x="1526" y="405" width="5" height="5" fill="#ff0c35"/><rect x="1531" y="405" width="5" height="5" fill="#ff0b33"/><rect x="1536" y="405" width="5" height="5" fill="#ff0930"/><rect x="1541" y="405" width="5" height="5" fill="#ff072e"/><rect x="1546" y="405" width="5" height="5" fill="#ff062c"/><rect x="1551" y="405" width="5" height="5" fill="#ff0429"/><rect x="1556" y="405" width="5" height="5" fill="#ff0327"/><rect x="1561" y="405" width="5" height="5" fill="#ff0225"/><rect x="1566" y="405" width="5" height="5" fill="#ff0023"/><rect x="1571" y="405" width="5" height="5" fill="#ff0021"/><rect x="1576" y="405" width="5" height="5" fill="#ff0020"/><rect x="1581" y="405" width="5" height="5" fill="#ff001e"/><rect x="1586" y="405" width="5" height="5" fill="#ff001c"/><rect x="1591" y="405" width="5" height="5" fill="#ff001b"/><rect x="1596" y="405" width="5" height="5" fill="#ff0019"/><rect x="1286" y="410" width="5" height="5" fill="#00a2ff"/><rect x="1291" y="410" width="5" height="5" fill="#00a1ff"/><rect x="1296" y="410" width="5" height="5" fill="#04a0ff"/><rect x="1301" y="410" width="5" height="5" fill="#0f9fff"/><rect x="1306" y="410" width="5" height="5" fill="#1b9dff"/><rect x="1311" y="410" width="5" height="5" fill="#279cff"/><rect x="1316" y="410" width="5" height="5" fill="#349bff"/><rect x="1321" y="410" width="5" height="5" fill="#409aff"/><rect x="1326" y="410" width="5" height="5" fill="#4e98ff"/><rect x="1331" y="410" width="5" height="5" fill="#5b97ff"/><rect x="1336" y="410" width="5" height="5" fill="#6995ff"/><rect x="1341" y="410" width="5" height="5" fill="#7794ff"/><rect x="1346" y="410" width="5" height="5" fill="#8693ff"/><rect x="1351" y="410" width="5" height="5" fill="#9591ff"/><rect x="1356" y="410" width="5" height="5" fill="#a48fff"/><rect x="1361" y="410" width="5" height="5" fill="#b48eff"/><rect x="1366" y="410" width="5" height="5" fill="#c48cff"/><rect x="1371" y="410" width="5" height="5" fill="#d58aff"/><rect x="1376" y="410" width="5" height="5" fill="#e689ff"/><rect x="1381" y="410" width="5" height="5" fill="#f887ff"/><rect x="1386" y="410" width="5" height="5" fill="#ff80f4"/><rect x="1391" y="410" width="5" height="5" fill="#ff75e4"/><rect x="1396" y="410" width="5" height="5" fill="#ff6cd6"/><rect x="1401" y="410" width="5" height="5" fill="#ff64c8"/><rect x="1406" y="410" width="5" height="5" fill="#ff5cbc"/><rect x="1411" y="410" width="5" height="5" fill="#ff55b1"/><rect x="1416" y="410" width="5" height="5" fill="#ff4fa7"/><rect x="1421" y="410" width="5" height="5" fill="#ff499e"/><rect x="1426" y="410" width="5" height="5" fill="#ff4495"/><rect x="1431" y="410" width="5" height="5" fill="#ff3f8d"/><rect x="1436" y="410" width="5" height="5" fill="#ff3a86"/><rect x="1441" y="410" width="5" height="5" fill="#ff367f"/><rect x="1446" y="410" width="5" height="5" fill="#ff3279"/><rect x="1451" y="410" width="5" height="5" fill="#ff2e73"/><rect x="1456" y="410" width="5" height="5" fill="#ff2a6d"/><rect x="1461" y="410" width="5" height="5" fill="#ff2768"/><rect x="1466" y="410" width="5" height="5" fill="#ff2463"/><rect x="1471" y="410" width="5" height="5" fill="#ff215e"/><rect x="1476" y="410" width="5" height="5" fill="#ff1e59"/><rect x="1481" y="410" width="5" height="5" fill="#ff1c55"/><rect x="1486" y="410" width="5" height="5" fill="#ff1951"/><rect x="1491" y="410" width="5" height="5" fill="#ff174d"/><rect x="1496" y="410" width="5" height="5" fill="#ff144a"/><rect x="1501" y="410" width="5" height="5" fill="#ff1246"/><rect x="1506" y="410" width="5" height="5" fill="#ff1043"/><rect x="1511" y="410" width="5" height="5" fill="#ff0e40"/><rect x="1516" y="410" width="5" height="5" fill="#ff0c3d"/><rect x="1521" y="410" width="5" height="5" fill="#ff0b3a"/><rect x="1526" y="410" width="5" height="5" fill="#ff0937"/><rect x="1531" y="410" width="5" height="5" fill="#ff0735"/><rect x="1536" y="410" width="5" height="5" fill="#ff0632"/><rect x="1541" y="410" width="5" height="5" fill="#ff0430"/><rect x="1546" y="410" width="5" height="5" fill="#ff032e"/><rect x="1551" y="410" width="5" height="5" fill="#ff012b"/><rect x="1556" y="410" width="5" height="5" fill="#ff0029"/><rect x="1561" y="410" width="5" height="5" fill="#ff0027"/><rect x="1566" y="410" width="5" height="5" fill="#ff0025"/><rect x="1571" y="410" width="5" height="5" fill="#ff0023"/><rect x="1576" y="410" width="5" height="5" fill="#ff0021"/><rect x="1581" y="410" width="5" height="5" fill="#ff0020"/><rect x="1586" y="410" width="5" height="5" fill="#ff001e"/><rect x="1281" y="415" width="5" height="5" fill="#0099ff"/><rect x="1286" y="415" width="5" height="5" fill="#0098ff"/><rect x="1291" y="415" width="5" height="5" fill="#0097ff"/><rect x="1296" y="415" width="5" height="5" fill="#0896ff"/><rect x="1301" y="415" width="5" height="5" fill="#1394ff"/><rect x="1306" y="415" width="5" height="5" fill="#1f93ff"/><rect x="1311" y="415" width="5" height="5" fill="#2b92ff"/><rect x="1316" y="415" width="5" height="5" fill="#3790ff"/><rect x="1321" y="415" width="5" height="5" fill="#438fff"/><rect x="1326" y="415" width="5" height="5" fill="#508dff"/><rect x="1331" y="415" width="5" height="5" fill="#5e8cff"/><rect x="1336" y="415" width="5" height="5" fill="#6b8aff"/><rect x="1341" y="415" width="5" height="5" fill="#7989ff"/><rect x="1346" y="415" width="5" height="5" fill="#8787ff"/><rect x="1351" y="415" width="5" height="5" fill="#9686ff"/><rect x="1356" y="415" width="5" height="5" fill="#a584ff"/><rect x="1361" y="415" width="5" height="5" fill="#b482ff"/><rect x="1366" y="415" width="5" height="5" fill="#c480ff"/><rect x="1371" y="415" width="5" height="5" fill="#d57fff"/><rect x="1376" y="415" width="5" height="5" fill="#e57dff"/><rect x="1381" y="415" width="5" height="5" fill="#f77bff"/><rect x="1386" y="415" width="5" height="5" fill="#ff74f6"/><rect x="1391" y="415" width="5" height="5" fill="#ff6be6"/><rect x="1396" y="415" width="5" height="5" fill="#ff62d7"/><rect x="1401" y="415" width="5" height="5" fill="#ff5bca"/><rect x="1406" y="415" width="5" height="5" fill="#ff54be"/><rect x="1411" y="415" width="5" height="5" fill="#ff4db3"/><rect x="1416" y="415" width="5" height="5" fill="#ff47a9"/><rect x="1421" y="415" width="5" height="5" fill="#ff42a0"/><rect x="1426" y="415" width="5" height="5" fill="#ff3d98"/><rect x="1431" y="415" width="5" height="5" fill="#ff3890"/><rect x="1436" y="415" width="5" height="5" fill="#ff3488"/><rect x="1441" y="415" width="5" height="5" fill="#ff3081"/><rect x="1446" y="415" width="5" height="5" fill="#ff2c7b"/><rect x="1451" y="415" width="5" height="5" fill="#ff2875"/><rect x="1456" y="415" width="5" height="5" fill="#ff256f"/><rect x="1461" y="415" width="5" height="5" fill="#ff226a"/><rect x="1466" y="415" width="5" height="5" fill="#ff1f65"/><rect x="1471" y="415" width="5" height="5" fill="#ff1c60"/><rect x="1476" y="415" width="5" height="5" fill="#ff195c"/><rect x="1481" y="415" width="5" height="5" fill="#ff1757"/><rect x="1486" y="415" width="5" height="5" fill="#ff1553"/><rect x="1491" y="415" width="5" height="5" fill="#ff1250"/><rect x="1496" y="415" width="5" height="5" fill="#ff104c"/><rect x="1501" y="415" width="5" height="5" fill="#ff0e48"/><rect x="1506" y="415" width="5" height="5" fill="#ff0c45"/><rect x="1511" y="415" width="5" height="5" fill="#ff0a42"/><rect x="1516" y="415" width="5" height="5" fill="#ff093f"/><rect x="1521" y="415" width="5" height="5" fill="#ff073c"/><rect x="1526" y="415" width="5" height="5" fill="#ff0539"/><rect x="1531" y="415" width="5" height="5" fill="#ff0437"/><rect x="1536" y="415" width="5" height="5" fill="#ff0234"/><rect x="1541" y="415" width="5" height="5" fill="#ff0132"/><rect x="1546" y="415" width="5" height="5" fill="#ff002f"/><rect x="1551" y="415" width="5" height="5" fill="#ff002d"/><rect x="1556" y="415" width="5" height="5" fill="#ff002b"/><rect x="1561" y="415" width="5" height="5" fill="#ff0029"/><rect x="1566" y="415" width="5" height="5" fill="#ff0027"/><rect x="1571" y="415" width="5" height="5" fill="#ff0025"/><rect x="1281" y="420" width="5" height="5" fill="#0090ff"/><rect x="1286" y="420" width="5" height="5" fill="#008eff"/><rect x="1291" y="420" width="5" height="5" fill="#018dff"/><rect x="1296" y="420" width="5" height="5" fill="#0b8cff"/><rect x="1301" y="420" width="5" height="5" fill="#178aff"/><rect x="1306" y="420" width="5" height="5" fill="#2289ff"/><rect x="1311" y="420" width="5" height="5" fill="#2e87ff"/><rect x="1316" y="420" width="5" height="5" fill="#3a86ff"/><rect x="1321" y="420" width="5" height="5" fill="#4685ff"/><rect x="1326" y="420" width="5" height="5" fill="#5383ff"/><rect x="1331" y="420" width="5" height="5" fill="#6081ff"/><rect x="1336" y="420" width="5" height="5" fill="#6d80ff"/><rect x="1341" y="420" width="5" height="5" fill="#7b7eff"/><rect x="1346" y="420" width="5" height="5" fill="#897cff"/><rect x="1351" y="420" width="5" height="5" fill="#977bff"/><rect x="1356" y="420" width="5" height="5" fill="#a679ff"/><rect x="1361" y="420" width="5" height="5" fill="#b577ff"/><rect x="1366" y="420" width="5" height="5" fill="#c575ff"/><rect x="1371" y="420" width="5" height="5" fill="#d573ff"/><rect x="1376" y="420" width="5" height="5" fill="#e571ff"/><rect x="1381" y="420" width="5" height="5" fill="#f66fff"/><rect x="1386" y="420" width="5" height="5" fill="#ff69f7"/><rect x="1391" y="420" width="5" height="5" fill="#ff61e7"/><rect x="1396" y="420" width="5" height="5" fill="#ff59d9"/><rect x="1401" y="420" width="5" height="5" fill="#ff52cc"/><rect x="1406" y="420" width="5" height="5" fill="#ff4bc0"/><rect x="1411" y="420" width="5" height="5" fill="#ff45b5"/><rect x="1416" y="420" width="5" height="5" fill="#ff40ab"/><rect x="1421" y="420" width="5" height="5" fill="#ff3ba2"/><rect x="1426" y="420" width="5" height="5" fill="#ff369a"/><rect x="1431" y="420" width="5" height="5" fill="#ff3292"/><rect x="1436" y="420" width="5" height="5" fill="#ff2d8a"/><rect x="1441" y="420" width="5" height="5" fill="#ff2a84"/><rect x="1446" y="420" width="5" height="5" fill="#ff267d"/><rect x="1451" y="420" width="5" height="5" fill="#ff2377"/><rect x="1456" y="420" width="5" height="5" fill="#ff2071"/><rect x="1461" y="420" width="5" height="5" fill="#ff1d6c"/><rect x="1466" y="420" width="5" height="5" fill="#ff1a67"/><rect x="1471" y="420" width="5" height="5" fill="#ff1762"/><rect x="1476" y="420" width="5" height="5" fill="#ff155e"/><rect x="1481" y="420" width="5" height="5" fill="#ff125a"/><rect x="1486" y="420" width="5" height="5" fill="#ff1055"/><rect x="1491" y="420" width="5" height="5" fill="#ff0e52"/><rect x="1496" y="420" width="5" height="5" fill="#ff0c4e"/><rect x="1501" y="420" width="5" height="5" fill="#ff0a4b"/><rect x="1506" y="420" width="5" height="5" fill="#ff0847"/><rect x="1511" y="420" width="5" height="5" fill="#ff0744"/><rect x="1516" y="420" width="5" height="5" fill="#ff0541"/><rect x="1521" y="420" width="5" height="5" fill="#ff033e"/><rect x="1526" y="420" width="5" height="5" fill="#ff023b"/><rect x="1531" y="420" width="5" height="5" fill="#ff0039"/><rect x="1536" y="420" width="5" height="5" fill="#ff0036"/><rect x="1541" y="420" width="5" height="5" fill="#ff0034"/><rect x="1546" y="420" width="5" height="5" fill="#ff0031"/><rect x="1551" y="420" width="5" height="5" fill="#ff002f"/><rect x="1556" y="420" width="5" height="5" fill="#ff002d"/><rect x="1561" y="420" width="5" height="5" fill="#ff002b"/><rect x="1281" y="425" width="5" height="5" fill="#0086ff"/><rect x="1286" y="425" width="5" height="5" fill="#0085ff"/><rect x="1291" y="425" width="5" height="5" fill="#0484ff"/><rect x="1296" y="425" width="5" height="5" fill="#0f82ff"/><rect x="1301" y="425" width="5" height="5" fill="#1a81ff"/><rect x="1306" y="425" width="5" height="5" fill="#267fff"/><rect x="1311" y="425" width="5" height="5" fill="#317eff"/><rect x="1316" y="425" width="5" height="5" fill="#3d7cff"/><rect x="1321" y="425" width="5" height="5" fill="#497bff"/><rect x="1326" y="425" width="5" height="5" fill="#5679ff"/><rect x="1331" y="425" width="5" height="5" fill="#6277ff"/><rect x="1336" y="425" width="5" height="5" fill="#6f76ff"/><rect x="1341" y="425" width="5" height="5" fill="#7d74ff"/><rect x="1346" y="425" width="5" height="5" fill="#8a72ff"/><rect x="1351" y="425" width="5" height="5" fill="#9870ff"/><rect x="1356" y="425" width="5" height="5" fill="#a76eff"/><rect x="1361" y="425" width="5" height="5" fill="#b66cff"/><rect x="1366" y="425" width="5" height="5" fill="#c56aff"/><rect x="1371" y="425" width="5" height="5" fill="#d568ff"/><rect x="1376" y="425" width="5" height="5" fill="#e566ff"/><rect x="1381" y="425" width="5" height="5" fill="#f564ff"/><rect x="1386" y="425" width="5" height="5" fill="#ff5ff8"/><rect x="1391" y="425" width="5" height="5" fill="#ff57e9"/><rect x="1396" y="425" width="5" height="5" fill="#ff50db"/><rect x="1401" y="425" width="5" height="5" fill="#ff49ce"/><rect x="1406" y="425" width="5" height="5" fill="#ff43c2"/><rect x="1411" y="425" width="5" height="5" fill="#ff3eb7"/><rect x="1416" y="425" width="5" height="5" fill="#ff38ad"/><rect x="1421" y="425" width="5" height="5" fill="#ff34a4"/><rect x="1426" y="425" width="5" height="5" fill="#ff2f9c"/><rect x="1431" y="425" width="5" height="5" fill="#ff2b94"/><rect x="1436" y="425" width="5" height="5" fill="#ff278d"/><rect x="1441" y="425" width="5" height="5" fill="#ff2486"/><rect x="1446" y="425" width="5" height="5" fill="#ff207f"/><rect x="1451" y="425" width="5" height="5" fill="#ff1d79"/><rect x="1456" y="425" width="5" height="5" fill="#ff1a74"/><rect x="1461" y="425" width="5" height="5" fill="#ff186e"/><rect x="1466" y="425" width="5" height="5" fill="#ff1569"/><rect x="1471" y="425" width="5" height="5" fill="#ff1364"/><rect x="1476" y="425" width="5" height="5" fill="#ff1060"/><rect x="1481" y="425" width="5" height="5" fill="#ff0e5c"/><rect x="1486" y="425" width="5" height="5" fill="#ff0c58"/><rect x="1491" y="425" width="5" height="5" fill="#ff0a54"/><rect x="1496" y="425" width="5" height="5" fill="#ff0850"/><rect x="1501" y="425" width="5" height="5" fill="#ff064d"/><rect x="1506" y="425" width="5" height="5" fill="#ff0449"/><rect x="1511" y="425" width="5" height="5" fill="#ff0346"/><rect x="1516" y="425" width="5" height="5" fill="#ff0143"/><rect x="1521" y="425" width="5" height="5" fill="#ff0040"/><rect x="1526" y="425" width="5" height="5" fill="#ff003d"/><rect x="1531" y="425" width="5" height="5" fill="#ff003b"/><rect x="1536" y="425" width="5" height="5" fill="#ff0038"/><rect x="1541" y="425" width="5" height="5" fill="#ff0036"/><rect x="1546" y="425" width="5" height="5" fill="#ff0033"/><rect x="1276" y="430" width="5" height="5" fill="#007fff"/><rect x="1281" y="430" width="5" height="5" fill="#007dff"/><rect x="1286" y="430" width="5" height="5" fill="#007cff"/><rect x="1291" y="430" width="5" height="5" fill="#087bff"/><rect x="1296" y="430" width="5" height="5" fill="#1379ff"/><rect x="1301" y="430" width="5" height="5" fill="#1e78ff"/><rect x="1306" y="430" width="5" height="5" fill="#2976ff"/><rect x="1311" y="430" width="5" height="5" fill="#3474ff"/><rect x="1316" y="430" width="5" height="5" fill="#4073ff"/><rect x="1321" y="430" width="5" height="5" fill="#4c71ff"/><rect x="1326" y="430" width="5" height="5" fill="#586fff"/><rect x="1331" y="430" width="5" height="5" fill="#646eff"/><rect x="1336" y="430" width="5" height="5" fill="#716cff"/><rect x="1341" y="430" width="5" height="5" fill="#7e6aff"/><rect x="1346" y="430" width="5" height="5" fill="#8c68ff"/><rect x="1351" y="430" width="5" height="5" fill="#9a66ff"/><rect x="1356" y="430" width="5" height="5" fill="#a864ff"/><rect x="1361" y="430" width="5" height="5" fill="#b662ff"/><rect x="1366" y="430" width="5" height="5" fill="#c560ff"/><rect x="1371" y="430" width="5" height="5" fill="#d45eff"/><rect x="1376" y="430" width="5" height="5" fill="#e45cff"/><rect x="1381" y="430" width="5" height="5" fill="#f459ff"/><rect x="1386" y="430" width="5" height="5" fill="#ff55f9"/><rect x="1391" y="430" width="5" height="5" fill="#ff4eea"/><rect x="1396" y="430" width="5" height="5" fill="#ff47dc"/><rect x="1401" y="430" width="5" height="5" fill="#ff41cf"/><rect x="1406" y="430" width="5" height="5" fill="#ff3bc4"/><rect x="1411" y="430" width="5" height="5" fill="#ff36b9"/><rect x="1416" y="430" width="5" height="5" fill="#ff31af"/><rect x="1421" y="430" width="5" height="5" fill="#ff2da6"/><rect x="1426" y="430" width="5" height="5" fill="#ff299e"/><rect x="1431" y="430" width="5" height="5" fill="#ff2596"/><rect x="1436" y="430" width="5" height="5" fill="#ff218f"/><rect x="1441" y="430" width="5" height="5" fill="#ff1e88"/><rect x="1446" y="430" width="5" height="5" fill="#ff1b81"/><rect x="1451" y="430" width="5" height="5" fill="#ff187b"/><rect x="1456" y="430" width="5" height="5" fill="#ff1576"/><rect x="1461" y="430" width="5" height="5" fill="#ff1370"/><rect x="1466" y="430" width="5" height="5" fill="#ff106b"/><rect x="1471" y="430" width="5" height="5" fill="#ff0e66"/><rect x="1476" y="430" width="5" height="5" fill="#ff0c62"/><rect x="1481" y="430" width="5" height="5" fill="#ff0a5e"/><rect x="1486" y="430" width="5" height="5" fill="#ff085a"/><rect x="1491" y="430" width="5" height="5" fill="#ff0656"/><rect x="1496" y="430" width="5" height="5" fill="#ff0452"/><rect x="1501" y="430" width="5" height="5" fill="#ff024f"/><rect x="1506" y="430" width="5" height="5" fill="#ff014b"/><rect x="1511" y="430" width="5" height="5" fill="#ff0048"/><rect x="1516" y="430" width="5" height="5" fill="#ff0045"/><rect x="1521" y="430" width="5" height="5" fill="#ff0042"/><rect x="1526" y="430" width="5" height="5" fill="#ff003f"/><rect x="1531" y="430" width="5" height="5" fill="#ff003c"/><rect x="1536" y="430" width="5" height="5" fill="#ff003a"/><rect x="1276" y="435" width="5" height="5" fill="#0076ff"/><rect x="1281" y="435" width="5" height="5" fill="#0075ff"/><rect x="1286" y="435" width="5" height="5" fill="#0173ff"/><rect x="1291" y="435" width="5" height="5" fill="#0c72ff"/><rect x="1296" y="435" width="5" height="5" fill="#1670ff"/><rect x="1301" y="435" width="5" height="5" fill="#216fff"/><rect x="1306" y="435" width="5" height="5" fill="#2c6dff"/><rect x="1311" y="435" width="5" height="5" fill="#376bff"/><rect x="1316" y="435" width="5" height="5" fill="#436aff"/><rect x="1321" y="435" width="5" height="5" fill="#4e68ff"/><rect x="1326" y="435" width="5" height="5" fill="#5a66ff"/><rect x="1331" y="435" width="5" height="5" fill="#6764ff"/><rect x="1336" y="435" width="5" height="5" fill="#7362ff"/><rect x="1341" y="435" width="5" height="5" fill="#8060ff"/><rect x="1346" y="435" width="5" height="5" fill="#8d5eff"/><rect x="1351" y="435" width="5" height="5" fill="#9b5cff"/><rect x="1356" y="435" width="5" height="5" fill="#a95aff"/><rect x="1361" y="435" width="5" height="5" fill="#b758ff"/><rect x="1366" y="435" width="5" height="5" fill="#c556ff"/><rect x="1371" y="435" width="5" height="5" fill="#d454ff"/><rect x="1376" y="435" width="5" height="5" fill="#e452ff"/><rect x="1381" y="435" width="5" height="5" fill="#f44fff"/><rect x="1386" y="435" width="5" height="5" fill="#ff4bfa"/><rect x="1391" y="435" width="5" height="5" fill="#ff45eb"/><rect x="1396" y="435" width="5" height="5" fill="#ff3ede"/><rect x="1401" y="435" width="5" height="5" fill="#ff39d1"/><rect x="1406" y="435" width="5" height="5" fill="#ff34c6"/><rect x="1411" y="435" width="5" height="5" fill="#ff2fbb"/><rect x="1416" y="435" width="5" height="5" fill="#ff2ab1"/><rect x="1421" y="435" width="5" height="5" fill="#ff26a8"/><rect x="1426" y="435" width="5" height="5" fill="#ff22a0"/><rect x="1431" y="435" width="5" height="5" fill="#ff1f98"/><rect x="1436" y="435" width="5" height="5" fill="#ff1c91"/><rect x="1441" y="435" width="5" height="5" fill="#ff188a"/><rect x="1446" y="435" width="5" height="5" fill="#ff1683"/><rect x="1451" y="435" width="5" height="5" fill="#ff137d"/><rect x="1456" y="435" width="5" height="5" fill="#ff1078"/><rect x="1461" y="435" width="5" height="5" fill="#ff0e72"/><rect x="1466" y="435" width="5" height="5" fill="#ff0c6d"/><rect x="1471" y="435" width="5" height="5" fill="#ff0968"/><rect x="1476" y="435" width="5" height="5" fill="#ff0764"/><rect x="1481" y="435" width="5" height="5" fill="#ff0560"/><rect x="1486" y="435" width="5" height="5" fill="#ff045c"/><rect x="1491" y="435" width="5" height="5" fill="#ff0258"/><rect x="1496" y="435" width="5" height="5" fill="#ff0054"/><rect x="1501" y="435" width="5" height="5" fill="#ff0050"/><rect x="1506" y="435" width="5" height="5" fill="#ff004d"/><rect x="1511" y="435" width="5" height="5" fill="#ff004a"/><rect x="1516" y="435" width="5" height="5" fill="#ff0047"/><rect x="1521" y="435" width="5" height="5" fill="#ff0044"/><rect x="1526" y="435" width="5" height="5" fill="#ff0041"/><rect x="1271" y="440" width="5" height="5" fill="#0070ff"/><rect x="1276" y="440" width="5" height="5" fill="#006eff"/><rect x="1281" y="440" width="5" height="5" fill="#006cff"/><rect x="1286" y="440" width="5" height="5" fill="#056bff"/><rect x="1291" y="440" width="5" height="5" fill="#0f69ff"/><rect x="1296" y="440" width="5" height="5" fill="#1968ff"/><rect x="1301" y="440" width="5" height="5" fill="#2466ff"/><rect x="1306" y="440" width="5" height="5" fill="#2f64ff"/><rect x="1311" y="440" width="5" height="5" fill="#3a63ff"/><rect x="1316" y="440" width="5" height="5" fill="#4561ff"/><rect x="1321" y="440" width="5" height="5" fill="#515fff"/><rect x="1326" y="440" width="5" height="5" fill="#5d5dff"/><rect x="1331" y="440" width="5" height="5" fill="#695bff"/><rect x="1336" y="440" width="5" height="5" fill="#7559ff"/><rect x="1341" y="440" width="5" height="5" fill="#8257ff"/><rect x="1346" y="440" width="5" height="5" fill="#8f55ff"/><rect x="1351" y="440" width="5" height="5" fill="#9c53ff"/><rect x="1356" y="440" width="5" height="5" fill="#aa51ff"/><rect x="1361" y="440" width="5" height="5" fill="#b74fff"/><rect x="1366" y="440" width="5" height="5" fill="#c64dff"/><rect x="1371" y="440" width="5" height="5" fill="#d44aff"/><rect x="1376" y="440" width="5" height="5" fill="#e348ff"/><rect x="1381" y="440" width="5" height="5" fill="#f346ff"/><rect x="1386" y="440" width="5" height="5" fill="#ff42fb"/><rect x="1391" y="440" width="5" height="5" fill="#ff3cec"/><rect x="1396" y="440" width="5" height="5" fill="#ff36df"/><rect x="1401" y="440" width="5" height="5" fill="#ff31d3"/><rect x="1406" y="440" width="5" height="5" fill="#ff2cc7"/><rect x="1411" y="440" width="5" height="5" fill="#ff28bd"/><rect x="1416" y="440" width="5" height="5" fill="#ff24b3"/><rect x="1421" y="440" width="5" height="5" fill="#ff20aa"/><rect x="1426" y="440" width="5" height="5" fill="#ff1ca2"/><rect x="1431" y="440" width="5" height="5" fill="#ff199a"/><rect x="1436" y="440" width="5" height="5" fill="#ff1693"/><rect x="1441" y="440" width="5" height="5" fill="#ff138c"/><rect x="1446" y="440" width="5" height="5" fill="#ff1085"/><rect x="1451" y="440" width="5" height="5" fill="#ff0e7f"/><rect x="1456" y="440" width="5" height="5" fill="#ff0b7a"/><rect x="1461" y="440" width="5" height="5" fill="#ff0974"/><rect x="1466" y="440" width="5" height="5" fill="#ff076f"/><rect x="1471" y="440" width="5" height="5" fill="#ff056a"/><rect x="1476" y="440" width="5" height="5" fill="#ff0366"/><rect x="1481" y="440" width="5" height="5" fill="#ff0162"/><rect x="1486" y="440" width="5" height="5" fill="#ff005e"/><rect x="1491" y="440" width="5" height="5" fill="#ff005a"/><rect x="1496" y="440" width="5" height="5" fill="#ff0056"/><rect x="1501" y="440" width="5" height="5" fill="#ff0052"/><rect x="1506" y="440" width="5" height="5" fill="#ff004f"/><rect x="1511" y="440" width="5" height="5" fill="#ff004c"/><rect x="1271" y="445" width="5" height="5" fill="#0068ff"/><rect x="1276" y="445" width="5" height="5" fill="#0066ff"/><rect x="1281" y="445" width="5" height="5" fill="#0064ff"/><rect x="1286" y="445" width="5" height="5" fill="#0863ff"/><rect x="1291" y="445" width="5" height="5" fill="#1261ff"/><rect x="1296" y="445" width="5" height="5" fill="#1d60ff"/><rect x="1301" y="445" width="5" height="5" fill="#275eff"/><rect x="1306" y="445" width="5" height="5" fill="#325cff"/><rect x="1311" y="445" width="5" height="5" fill="#3d5aff"/><rect x="1316" y="445" width="5" height="5" fill="#4858ff"/><rect x="1321" y="445" width="5" height="5" fill="#5357ff"/><rect x="1326" y="445" width="5" height="5" fill="#5f55ff"/><rect x="1331" y="445" width="5" height="5" fill="#6b53ff"/><rect x="1336" y="445" width="5" height="5" fill="#7751ff"/><rect x="1341" y="445" width="5" height="5" fill="#834fff"/><rect x="1346" y="445" width="5" height="5" fill="#904cff"/><rect x="1351" y="445" width="5" height="5" fill="#9d4aff"/><rect x="1356" y="445" width="5" height="5" fill="#aa48ff"/><rect x="1361" y="445" width="5" height="5" fill="#b846ff"/><rect x="1366" y="445" width="5" height="5" fill="#c644ff"/><rect x="1371" y="445" width="5" height="5" fill="#d441ff"/><rect x="1376" y="445" width="5" height="5" fill="#e33fff"/><rect x="1381" y="445" width="5" height="5" fill="#f23cff"/><rect x="1386" y="445" width="5" height="5" fill="#ff39fc"/><rect x="1391" y="445" width="5" height="5" fill="#ff33ee"/><rect x="1396" y="445" width="5" height="5" fill="#ff2ee0"/><rect x="1401" y="445" width="5" height="5" fill="#ff29d4"/><rect x="1406" y="445" width="5" height="5" fill="#ff25c9"/><rect x="1411" y="445" width="5" height="5" fill="#ff21be"/><rect x="1416" y="445" width="5" height="5" fill="#ff1db5"/><rect x="1421" y="445" width="5" height="5" fill="#ff19ac"/><rect x="1426" y="445" width="5" height="5" fill="#ff16a4"/><rect x="1431" y="445" width="5" height="5" fill="#ff139c"/><rect x="1436" y="445" width="5" height="5" fill="#ff1094"/><rect x="1441" y="445" width="5" height="5" fill="#ff0e8e"/><rect x="1446" y="445" width="5" height="5" fill="#ff0b87"/><rect x="1451" y="445" width="5" height="5" fill="#ff0981"/><rect x="1456" y="445" width="5" height="5" fill="#ff077c"/><rect x="1461" y="445" width="5" height="5" fill="#ff0476"/><rect x="1466" y="445" width="5" height="5" fill="#ff0271"/><rect x="1471" y="445" width="5" height="5" fill="#ff016c"/><rect x="1476" y="445" width="5" height="5" fill="#ff0068"/><rect x="1481" y="445" width="5" height="5" fill="#ff0064"/><rect x="1486" y="445" width="5" height="5" fill="#ff005f"/><rect x="1491" y="445" width="5" height="5" fill="#ff005c"/><rect x="1496" y="445" width="5" height="5" fill="#ff0058"/><rect x="1501" y="445" width="5" height="5" fill="#ff0054"/><rect x="1271" y="450" width="5" height="5" fill="#0060ff"/><rect x="1276" y="450" width="5" height="5" fill="#005eff"/><rect x="1281" y="450" width="5" height="5" fill="#025dff"/><rect x="1286" y="450" width="5" height="5" fill="#0c5bff"/><rect x="1291" y="450" width="5" height="5" fill="#1659ff"/><rect x="1296" y="450" width="5" height="5" fill="#2058ff"/><rect x="1301" y="450" width="5" height="5" fill="#2a56ff"/><rect x="1306" y="450" width="5" height="5" fill="#3554ff"/><rect x="1311" y="450" width="5" height="5" fill="#3f52ff"/><rect x="1316" y="450" width="5" height="5" fill="#4a50ff"/><rect x="1321" y="450" width="5" height="5" fill="#554eff"/><rect x="1326" y="450" width="5" height="5" fill="#614cff"/><rect x="1331" y="450" width="5" height="5" fill="#6d4aff"/><rect x="1336" y="450" width="5" height="5" fill="#7848ff"/><rect x="1341" y="450" width="5" height="5" fill="#8546ff"/><rect x="1346" y="450" width="5" height="5" fill="#9144ff"/><rect x="1351" y="450" width="5" height="5" fill="#9e42ff"/><rect x="1356" y="450" width="5" height="5" fill="#ab40ff"/><rect x="1361" y="450" width="5" height="5" fill="#b83dff"/><rect x="1366" y="450" width="5" height="5" fill="#c63bff"/><rect x="1371" y="450" width="5" height="5" fill="#d438ff"/><rect x="1376" y="450" width="5" height="5" fill="#e336ff"/><rect x="1381" y="450" width="5" height="5" fill="#f133ff"/><rect x="1386" y="450" width="5" height="5" fill="#ff30fd"/><rect x="1391" y="450" width="5" height="5" fill="#ff2bef"/><rect x="1396" y="450" width="5" height="5" fill="#ff26e2"/><rect x="1401" y="450" width="5" height="5" fill="#ff22d6"/><rect x="1406" y="450" width="5" height="5" fill="#ff1eca"/><rect x="1411" y="450" width="5" height="5" fill="#ff1ac0"/><rect x="1416" y="450" width="5" height="5" fill="#ff17b6"/><rect x="1421" y="450" width="5" height="5" fill="#ff13ae"/><rect x="1426" y="450" width="5" height="5" fill="#ff10a5"/><rect x="1431" y="450" width="5" height="5" fill="#ff0e9e"/><rect x="1436" y="450" width="5" height="5" fill="#ff0b96"/><rect x="1441" y="450" width="5" height="5" fill="#ff0890"/><rect x="1446" y="450" width="5" height="5" fill="#ff0689"/><rect x="1451" y="450" width="5" height="5" fill="#ff0483"/><rect x="1456" y="450" width="5" height="5" fill="#ff027e"/><rect x="1461" y="450" width="5" height="5" fill="#ff0078"/><rect x="1466" y="450" width="5" height="5" fill="#ff0073"/><rect x="1471" y="450" width="5" height="5" fill="#ff006e"/><rect x="1476" y="450" width="5" height="5" fill="#ff006a"/><rect x="1481" y="450" width="5" height="5" fill="#ff0065"/><rect x="1486" y="450" width="5" height="5" fill="#ff0061"/><rect x="1491" y="450" width="5" height="5" fill="#ff005d"/><rect x="1266" y="455" width="5" height="5" fill="#005aff"/><rect x="1271" y="455" width="5" height="5" fill="#0058ff"/><rect x="1276" y="455" width="5" height="5" fill="#0057ff"/><rect x="1281" y="455" width="5" height="5" fill="#0655ff"/><rect x="1286" y="455" width="5" height="5" fill="#0f53ff"/><rect x="1291" y="455" width="5" height="5" fill="#1952ff"/><rect x="1296" y="455" width="5" height="5" fill="#2350ff"/><rect x="1301" y="455" width="5" height="5" fill="#2d4eff"/><rect x="1306" y="455" width="5" height="5" fill="#374cff"/><rect x="1311" y="455" width="5" height="5" fill="#424aff"/><rect x="1316" y="455" width="5" height="5" fill="#4d48ff"/><rect x="1321" y="455" width="5" height="5" fill="#5846ff"/><rect x="1326" y="455" width="5" height="5" fill="#6344ff"/><rect x="1331" y="455" width="5" height="5" fill="#6e42ff"/><rect x="1336" y="455" width="5" height="5" fill="#7a40ff"/><rect x="1341" y="455" width="5" height="5" fill="#863eff"/><rect x="1346" y="455" width="5" height="5" fill="#923cff"/><rect x="1351" y="455" width="5" height="5" fill="#9f3aff"/><rect x="1356" y="455" width="5" height="5" fill="#ac37ff"/><rect x="1361" y="455" width="5" height="5" fill="#b935ff"/><rect x="1366" y="455" width="5" height="5" fill="#c632ff"/><rect x="1371" y="455" width="5" height="5" fill="#d430ff"/><rect x="1376" y="455" width="5" height="5" fill="#e22dff"/><rect x="1381" y="455" width="5" height="5" fill="#f12bff"/><rect x="1386" y="455" width="5" height="5" fill="#ff28fe"/><rect x="1391" y="455" width="5" height="5" fill="#ff23f0"/><rect x="1396" y="455" width="5" height="5" fill="#ff1fe3"/><rect x="1401" y="455" width="5" height="5" fill="#ff1bd7"/><rect x="1406" y="455" width="5" height="5" fill="#ff17cc"/><rect x="1411" y="455" width="5" height="5" fill="#ff14c2"/><rect x="1416" y="455" width="5" height="5" fill="#ff10b8"/><rect x="1421" y="455" width="5" height="5" fill="#ff0daf"/><rect x="1426" y="455" width="5" height="5" fill="#ff0ba7"/><rect x="1431" y="455" width="5" height="5" fill="#ff089f"/><rect x="1436" y="455" width="5" height="5" fill="#ff0698"/><rect x="1441" y="455" width="5" height="5" fill="#ff0391"/><rect x="1446" y="455" width="5" height="5" fill="#ff018b"/><rect x="1451" y="455" width="5" height="5" fill="#ff0085"/><rect x="1456" y="455" width="5" height="5" fill="#ff007f"/><rect x="1461" y="455" width="5" height="5" fill="#ff007a"/><rect x="1466" y="455" width="5" height="5" fill="#ff0075"/><rect x="1471" y="455" width="5" height="5" fill="#ff0070"/><rect x="1476" y="455" width="5" height="5" fill="#ff006c"/><rect x="1266" y="460" width="5" height="5" fill="#0053ff"/><rect x="1271" y="460" width="5" height="5" fill="#0051ff"/><rect x="1276" y="460" width="5" height="5" fill="#0050ff"/><rect x="1281" y="460" width="5" height="5" fill="#094eff"/><rect x="1286" y="460" width="5" height="5" fill="#124cff"/><rect x="1291" y="460" width="5" height="5" fill="#1c4aff"/><rect x="1296" y="460" width="5" height="5" fill="#2648ff"/><rect x="1301" y="460" width="5" height="5" fill="#3047ff"/><rect x="1306" y="460" width="5" height="5" fill="#3a45ff"/><rect x="1311" y="460" width="5" height="5" fill="#4443ff"/><rect x="1316" y="460" width="5" height="5" fill="#4f41ff"/><rect x="1321" y="460" width="5" height="5" fill="#5a3fff"/><rect x="1326" y="460" width="5" height="5" fill="#653dff"/><rect x="1331" y="460" width="5" height="5" fill="#703bff"/><rect x="1336" y="460" width="5" height="5" fill="#7c38ff"/><rect x="1341" y="460" width="5" height="5" fill="#8736ff"/><rect x="1346" y="460" width="5" height="5" fill="#9434ff"/><rect x="1351" y="460" width="5" height="5" fill="#a032ff"/><rect x="1356" y="460" width="5" height="5" fill="#ad2fff"/><rect x="1361" y="460" width="5" height="5" fill="#b92dff"/><rect x="1366" y="460" width="5" height="5" fill="#c72aff"/><rect x="1371" y="460" width="5" height="5" fill="#d428ff"/><rect x="1376" y="460" width="5" height="5" fill="#e225ff"/><rect x="1381" y="460" width="5" height="5" fill="#f023ff"/><rect x="1386" y="460" width="5" height="5" fill="#ff20ff"/><rect x="1391" y="460" width="5" height="5" fill="#ff1cf1"/><rect x="1396" y="460" width="5" height="5" fill="#ff18e4"/><rect x="1401" y="460" width="5" height="5" fill="#ff14d8"/><rect x="1406" y="460" width="5" height="5" fill="#ff10cd"/><rect x="1411" y="460" width="5" height="5" fill="#ff0dc3"/><rect x="1416" y="460" width="5" height="5" fill="#ff0aba"/><rect x="1421" y="460" width="5" height="5" fill="#ff08b1"/><rect x="1426" y="460" width="5" height="5" fill="#ff05a9"/><rect x="1431" y="460" width="5" height="5" fill="#ff03a1"/><rect x="1436" y="460" width="5" height="5" fill="#ff009a"/><rect x="1441" y="460" width="5" height="5" fill="#ff0093"/><rect x="1446" y="460" width="5" height="5" fill="#ff008d"/><rect x="1451" y="460" width="5" height="5" fill="#ff0087"/><rect x="1456" y="460" width="5" height="5" fill="#ff0081"/><rect x="1461" y="460" width="5" height="5" fill="#ff007c"/><rect x="1466" y="460" width="5" height="5" fill="#ff0077"/><rect x="1266" y="465" width="5" height="5" fill="#004cff"/><rect x="1271" y="465" width="5" height="5" fill="#004aff"/><rect x="1276" y="465" width="5" height="5" fill="#0349ff"/><rect x="1281" y="465" width="5" height="5" fill="#0c47ff"/><rect x="1286" y="465" width="5" height="5" fill="#1545ff"/><rect x="1291" y="465" width="5" height="5" fill="#1f43ff"/><rect x="1296" y="465" width="5" height="5" fill="#2841ff"/><rect x="1301" y="465" width="5" height="5" fill="#323fff"/><rect x="1306" y="465" width="5" height="5" fill="#3c3dff"/><rect x="1311" y="465" width="5" height="5" fill="#473bff"/><rect x="1316" y="465" width="5" height="5" fill="#5139ff"/><rect x="1321" y="465" width="5" height="5" fill="#5c37ff"/><rect x="1326" y="465" width="5" height="5" fill="#6735ff"/><rect x="1331" y="465" width="5" height="5" fill="#7233ff"/><rect x="1336" y="465" width="5" height="5" fill="#7d31ff"/><rect x="1341" y="465" width="5" height="5" fill="#892fff"/><rect x="1346" y="465" width="5" height="5" fill="#952cff"/><rect x="1351" y="465" width="5" height="5" fill="#a12aff"/><rect x="1356" y="465" width="5" height="5" fill="#ad28ff"/><rect x="1361" y="465" width="5" height="5" fill="#ba25ff"/><rect x="1366" y="465" width="5" height="5" fill="#c723ff"/><rect x="1371" y="465" width="5" height="5" fill="#d420ff"/><rect x="1376" y="465" width="5" height="5" fill="#e21dff"/><rect x="1381" y="465" width="5" height="5" fill="#f01bff"/><rect x="1386" y="465" width="5" height="5" fill="#fe18ff"/><rect x="1391" y="465" width="5" height="5" fill="#ff14f2"/><rect x="1396" y="465" width="5" height="5" fill="#ff10e5"/><rect x="1401" y="465" width="5" height="5" fill="#ff0dda"/><rect x="1406" y="465" width="5" height="5" fill="#ff0acf"/><rect x="1411" y="465" width="5" height="5" fill="#ff07c5"/><rect x="1416" y="465" width="5" height="5" fill="#ff04bb"/><rect x="1421" y="465" width="5" height="5" fill="#ff02b3"/><rect x="1426" y="465" width="5" height="5" fill="#ff00aa"/><rect x="1431" y="465" width="5" height="5" fill="#ff00a3"/><rect x="1436" y="465" width="5" height="5" fill="#ff009c"/><rect x="1441" y="465" width="5" height="5" fill="#ff0095"/><rect x="1446" y="465" width="5" height="5" fill="#ff008f"/><rect x="1451" y="465" width="5" height="5" fill="#ff0089"/><rect x="1261" y="470" width="5" height="5" fill="#0047ff"/><rect x="1266" y="470" width="5" height="5" fill="#0045ff"/><rect x="1271" y="470" width="5" height="5" fill="#0044ff"/><rect x="1276" y="470" width="5" height="5" fill="#0642ff"/><rect x="1281" y="470" width="5" height="5" fill="#0f40ff"/><rect x="1286" y="470" width="5" height="5" fill="#183eff"/><rect x="1291" y="470" width="5" height="5" fill="#223cff"/><rect x="1296" y="470" width="5" height="5" fill="#2b3aff"/><rect x="1301" y="470" width="5" height="5" fill="#3538ff"/><rect x="1306" y="470" width="5" height="5" fill="#3f36ff"/><rect x="1311" y="470" width="5" height="5" fill="#4934ff"/><rect x="1316" y="470" width="5" height="5" fill="#5332ff"/><rect x="1321" y="470" width="5" height="5" fill="#5e30ff"/><rect x="1326" y="470" width="5" height="5" fill="#682eff"/><rect x="1331" y="470" width="5" height="5" fill="#732cff"/><rect x="1336" y="470" width="5" height="5" fill="#7f2aff"/><rect x="1341" y="470" width="5" height="5" fill="#8a27ff"/><rect x="1346" y="470" width="5" height="5" fill="#9625ff"/><rect x="1351" y="470" width="5" height="5" fill="#a223ff"/><rect x="1356" y="470" width="5" height="5" fill="#ae20ff"/><rect x="1361" y="470" width="5" height="5" fill="#ba1eff"/><rect x="1366" y="470" width="5" height="5" fill="#c71bff"/><rect x="1371" y="470" width="5" height="5" fill="#d419ff"/><rect x="1376" y="470" width="5" height="5" fill="#e116ff"/><rect x="1381" y="470" width="5" height="5" fill="#ef13ff"/><rect x="1386" y="470" width="5" height="5" fill="#fd10ff"/><rect x="1391" y="470" width="5" height="5" fill="#ff0df3"/><rect x="1396" y="470" width="5" height="5" fill="#ff0ae7"/><rect x="1401" y="470" width="5" height="5" fill="#ff07db"/><rect x="1406" y="470" width="5" height="5" fill="#ff04d0"/><rect x="1411" y="470" width="5" height="5" fill="#ff01c6"/><rect x="1416" y="470" width="5" height="5" fill="#ff00bd"/><rect x="1421" y="470" width="5" height="5" fill="#ff00b4"/><rect x="1426" y="470" width="5" height="5" fill="#ff00ac"/><rect x="1431" y="470" width="5" height="5" fill="#ff00a5"/><rect x="1436" y="470" width="5" height="5" fill="#ff009d"/><rect x="1441" y="470" width="5" height="5" fill="#ff0097"/><rect x="1261" y="475" width="5" height="5" fill="#0040ff"/><rect x="1266" y="475" width="5" height="5" fill="#003fff"/><rect x="1271" y="475" width="5" height="5" fill="#003dff"/><rect x="1276" y="475" width="5" height="5" fill="#093bff"/><rect x="1281" y="475" width="5" height="5" fill="#1239ff"/><rect x="1286" y="475" width="5" height="5" fill="#1b37ff"/><rect x="1291" y="475" width="5" height="5" fill="#2436ff"/><rect x="1296" y="475" width="5" height="5" fill="#2e34ff"/><rect x="1301" y="475" width="5" height="5" fill="#3732ff"/><rect x="1306" y="475" width="5" height="5" fill="#4130ff"/><rect x="1311" y="475" width="5" height="5" fill="#4b2eff"/><rect x="1316" y="475" width="5" height="5" fill="#552bff"/><rect x="1321" y="475" width="5" height="5" fill="#6029ff"/><rect x="1326" y="475" width="5" height="5" fill="#6a27ff"/><rect x="1331" y="475" width="5" height="5" fill="#7525ff"/><rect x="1336" y="475" width="5" height="5" fill="#8023ff"/><rect x="1341" y="475" width="5" height="5" fill="#8b20ff"/><rect x="1346" y="475" width="5" height="5" fill="#971eff"/><rect x="1351" y="475" width="5" height="5" fill="#a31cff"/><rect x="1356" y="475" width="5" height="5" fill="#af19ff"/><rect x="1361" y="475" width="5" height="5" fill="#bb17ff"/><rect x="1366" y="475" width="5" height="5" fill="#c714ff"/><rect x="1371" y="475" width="5" height="5" fill="#d411ff"/><rect x="1376" y="475" width="5" height="5" fill="#e10fff"/><rect x="1381" y="475" width="5" height="5" fill="#ef0cff"/><rect x="1386" y="475" width="5" height="5" fill="#fc09ff"/><rect x="1391" y="475" width="5" height="5" fill="#ff06f4"/><rect x="1396" y="475" width="5" height="5" fill="#ff03e8"/><rect x="1401" y="475" width="5" height="5" fill="#ff00dc"/><rect x="1406" y="475" width="5" height="5" fill="#ff00d2"/><rect x="1411" y="475" width="5" height="5" fill="#ff00c8"/><rect x="1416" y="475" width="5" height="5" fill="#ff00be"/><rect x="1421" y="475" width="5" height="5" fill="#ff00b6"/><rect x="1426" y="475" width="5" height="5" fill="#ff00ae"/><rect x="1431" y="475" width="5" height="5" fill="#ff00a6"/><rect x="1261" y="480" width="5" height="5" fill="#003aff"/><rect x="1266" y="480" width="5" height="5" fill="#0038ff"/><rect x="1271" y="480" width="5" height="5" fill="#0337ff"/><rect x="1276" y="480" width="5" height="5" fill="#0c35ff"/><rect x="1281" y="480" width="5" height="5" fill="#1533ff"/><rect x="1286" y="480" width="5" height="5" fill="#1e31ff"/><rect x="1291" y="480" width="5" height="5" fill="#272fff"/><rect x="1296" y="480" width="5" height="5" fill="#302dff"/><rect x="1301" y="480" width="5" height="5" fill="#3a2bff"/><rect x="1306" y="480" width="5" height="5" fill="#4329ff"/><rect x="1311" y="480" width="5" height="5" fill="#4d27ff"/><rect x="1316" y="480" width="5" height="5" fill="#5725ff"/><rect x="1321" y="480" width="5" height="5" fill="#6123ff"/><rect x="1326" y="480" width="5" height="5" fill="#6c20ff"/><rect x="1331" y="480" width="5" height="5" fill="#771eff"/><rect x="1336" y="480" width="5" height="5" fill="#811cff"/><rect x="1341" y="480" width="5" height="5" fill="#8d1aff"/><rect x="1346" y="480" width="5" height="5" fill="#9817ff"/><rect x="1351" y="480" width="5" height="5" fill="#a315ff"/><rect x="1356" y="480" width="5" height="5" fill="#af12ff"/><rect x="1361" y="480" width="5" height="5" fill="#bb10ff"/><rect x="1366" y="480" width="5" height="5" fill="#c70dff"/><rect x="1371" y="480" width="5" height="5" fill="#d40aff"/><rect x="1376" y="480" width="5" height="5" fill="#e108ff"/><rect x="1381" y="480" width="5" height="5" fill="#ee05ff"/><rect x="1386" y="480" width="5" height="5" fill="#fb02ff"/><rect x="1391" y="480" width="5" height="5" fill="#ff00f5"/><rect x="1396" y="480" width="5" height="5" fill="#ff00e9"/><rect x="1401" y="480" width="5" height="5" fill="#ff00dd"/><rect x="1406" y="480" width="5" height="5" fill="#ff00d3"/><rect x="1411" y="480" width="5" height="5" fill="#ff00c9"/><rect x="1416" y="480" width="5" height="5" fill="#ff00c0"/><rect x="1256" y="485" width="5" height="5" fill="#0036ff"/><rect x="1261" y="485" width="5" height="5" fill="#0034ff"/><rect x="1266" y="485" width="5" height="5" fill="#0032ff"/><rect x="1271" y="485" width="5" height="5" fill="#0630ff"/><rect x="1276" y="485" width="5" height="5" fill="#0f2fff"/><rect x="1281" y="485" width="5" height="5" fill="#182dff"/><rect x="1286" y="485" width="5" height="5" fill="#212bff"/><rect x="1291" y="485" width="5" height="5" fill="#2a29ff"/><rect x="1296" y="485" width="5" height="5" fill="#3327ff"/><rect x="1301" y="485" width="5" height="5" fill="#3c25ff"/><rect x="1306" y="485" width="5" height="5" fill="#4623ff"/><rect x="1311" y="485" width="5" height="5" fill="#4f21ff"/><rect x="1316" y="485" width="5" height="5" fill="#591eff"/><rect x="1321" y="485" width="5" height="5" fill="#631cff"/><rect x="1326" y="485" width="5" height="5" fill="#6e1aff"/><rect x="1331" y="485" width="5" height="5" fill="#7818ff"/><rect x="1336" y="485" width="5" height="5" fill="#8315ff"/><rect x="1341" y="485" width="5" height="5" fill="#8e13ff"/><rect x="1346" y="485" width="5" height="5" fill="#9911ff"/><rect x="1351" y="485" width="5" height="5" fill="#a40eff"/><rect x="1356" y="485" width="5" height="5" fill="#b00cff"/><rect x="1361" y="485" width="5" height="5" fill="#bc09ff"/><rect x="1366" y="485" width="5" height="5" fill="#c806ff"/><rect x="1371" y="485" width="5" height="5" fill="#d404ff"/><rect x="1376" y="485" width="5" height="5" fill="#e101ff"/><rect x="1381" y="485" width="5" height="5" fill="#ee00ff"/><rect x="1386" y="485" width="5" height="5" fill="#fb00ff"/><rect x="1391" y="485" width="5" height="5" fill="#ff00f6"/><rect x="1396" y="485" width="5" height="5" fill="#ff00ea"/><rect x="1401" y="485" width="5" height="5" fill="#ff00df"/><rect x="1406" y="485" width="5" height="5" fill="#ff00d4"/><rect x="1256" y="490" width="5" height="5" fill="#0030ff"/><rect x="1261" y="490" width="5" height="5" fill="#002eff"/><rect x="1266" y="490" width="5" height="5" fill="#012cff"/><rect x="1271" y="490" width="5" height="5" fill="#092aff"/><rect x="1276" y="490" width="5" height="5" fill="#1229ff"/><rect x="1281" y="490" width="5" height="5" fill="#1a27ff"/><rect x="1286" y="490" width="5" height="5" fill="#2325ff"/><rect x="1291" y="490" width="5" height="5" fill="#2c23ff"/><rect x="1296" y="490" width="5" height="5" fill="#3521ff"/><rect x="1301" y="490" width="5" height="5" fill="#3e1fff"/><rect x="1306" y="490" width="5" height="5" fill="#481cff"/><rect x="1311" y="490" width="5" height="5" fill="#511aff"/><rect x="1316" y="490" width="5" height="5" fill="#5b18ff"/><rect x="1321" y="490" width="5" height="5" fill="#6516ff"/><rect x="1326" y="490" width="5" height="5" fill="#6f14ff"/><rect x="1331" y="490" width="5" height="5" fill="#7911ff"/><rect x="1336" y="490" width="5" height="5" fill="#840fff"/><rect x="1341" y="490" width="5" height="5" fill="#8f0dff"/><rect x="1346" y="490" width="5" height="5" fill="#9a0aff"/><rect x="1351" y="490" width="5" height="5" fill="#a508ff"/><rect x="1356" y="490" width="5" height="5" fill="#b005ff"/><rect x="1361" y="490" width="5" height="5" fill="#bc03ff"/><rect x="1366" y="490" width="5" height="5" fill="#c800ff"/><rect x="1371" y="490" width="5" height="5" fill="#d400ff"/><rect x="1376" y="490" width="5" height="5" fill="#e000ff"/><rect x="1381" y="490" width="5" height="5" fill="#ed00ff"/><rect x="1386" y="490" width="5" height="5" fill="#fa00ff"/><rect x="1391" y="490" width="5" height="5" fill="#ff00f7"/><rect x="1396" y="490" width="5" height="5" fill="#ff00eb"/><rect x="1251" y="495" width="5" height="5" fill="#002cff"/><rect x="1256" y="495" width="5" height="5" fill="#002aff"/><rect x="1261" y="495" width="5" height="5" fill="#0028ff"/><rect x="1266" y="495" width="5" height="5" fill="#0426ff"/><rect x="1271" y="495" width="5" height="5" fill="#0c25ff"/><rect x="1276" y="495" width="5" height="5" fill="#1523ff"/><rect x="1281" y="495" width="5" height="5" fill="#1d21ff"/><rect x="1286" y="495" width="5" height="5" fill="#261fff"/><rect x="1291" y="495" width="5" height="5" fill="#2e1dff"/><rect x="1296" y="495" width="5" height="5" fill="#371bff"/><rect x="1301" y="495" width="5" height="5" fill="#4119ff"/><rect x="1306" y="495" width="5" height="5" fill="#4a16ff"/><rect x="1311" y="495" width="5" height="5" fill="#5314ff"/><rect x="1316" y="495" width="5" height="5" fill="#5d12ff"/><rect x="1321" y="495" width="5" height="5" fill="#6710ff"/><rect x="1326" y="495" width="5" height="5" fill="#710eff"/><rect x="1331" y="495" width="5" height="5" fill="#7b0bff"/><rect x="1336" y="495" width="5" height="5" fill="#8509ff"/><rect x="1341" y="495" width="5" height="5" fill="#9006ff"/><rect x="1346" y="495" width="5" height="5" fill="#9b04ff"/><rect x="1351" y="495" width="5" height="5" fill="#a601ff"/><rect x="1356" y="495" width="5" height="5" fill="#b100ff"/><rect x="1361" y="495" width="5" height="5" fill="#bc00ff"/><rect x="1366" y="495" width="5" height="5" fill="#c800ff"/><rect x="1371" y="495" width="5" height="5" fill="#d400ff"/><rect x="1376" y="495" width="5" height="5" fill="#e000ff"/><rect x="1381" y="495" width="5" height="5" fill="#ed00ff"/><rect x="1251" y="500" width="5" height="5" fill="#0026ff"/><rect x="1256" y="500" width="5" height="5" fill="#0025ff"/><rect x="1261" y="500" width="5" height="5" fill="#0023ff"/><rect x="1266" y="500" width="5" height="5" fill="#0721ff"/><rect x="1271" y="500" width="5" height="5" fill="#0f1fff"/><rect x="1276" y="500" width="5" height="5" fill="#171dff"/><rect x="1281" y="500" width="5" height="5" fill="#201bff"/><rect x="1286" y="500" width="5" height="5" fill="#2819ff"/><rect x="1291" y="500" width="5" height="5" fill="#3117ff"/><rect x="1296" y="500" width="5" height="5" fill="#3a15ff"/><rect x="1301" y="500" width="5" height="5" fill="#4313ff"/><rect x="1306" y="500" width="5" height="5" fill="#4c11ff"/><rect x="1311" y="500" width="5" height="5" fill="#550eff"/><rect x="1316" y="500" width="5" height="5" fill="#5f0cff"/><rect x="1321" y="500" width="5" height="5" fill="#680aff"/><rect x="1326" y="500" width="5" height="5" fill="#7208ff"/><rect x="1331" y="500" width="5" height="5" fill="#7c05ff"/><rect x="1336" y="500" width="5" height="5" fill="#8603ff"/><rect x="1341" y="500" width="5" height="5" fill="#9100ff"/><rect x="1346" y="500" width="5" height="5" fill="#9c00ff"/><rect x="1351" y="500" width="5" height="5" fill="#a600ff"/><rect x="1356" y="500" width="5" height="5" fill="#b100ff"/><rect x="1361" y="500" width="5" height="5" fill="#bd00ff"/><rect x="1366" y="500" width="5" height="5" fill="#c800ff"/><rect x="1371" y="500" width="5" height="5" fill="#d400ff"/><rect x="1251" y="505" width="5" height="5" fill="#0021ff"/><rect x="1256" y="505" width="5" height="5" fill="#001fff"/><rect x="1261" y="505" width="5" height="5" fill="#021dff"/><rect x="1266" y="505" width="5" height="5" fill="#0a1bff"/><rect x="1271" y="505" width="5" height="5" fill="#1219ff"/><rect x="1276" y="505" width="5" height="5" fill="#1a17ff"/><rect x="1281" y="505" width="5" height="5" fill="#2215ff"/><rect x="1286" y="505" width="5" height="5" fill="#2b13ff"/><rect x="1291" y="505" width="5" height="5" fill="#3311ff"/><rect x="1296" y="505" width="5" height="5" fill="#3c0fff"/><rect x="1301" y="505" width="5" height="5" fill="#450dff"/><rect x="1306" y="505" width="5" height="5" fill="#4e0bff"/><rect x="1311" y="505" width="5" height="5" fill="#5709ff"/><rect x="1316" y="505" width="5" height="5" fill="#6007ff"/><rect x="1321" y="505" width="5" height="5" fill="#6a04ff"/><rect x="1326" y="505" width="5" height="5" fill="#7402ff"/><rect x="1331" y="505" width="5" height="5" fill="#7e00ff"/><rect x="1336" y="505" width="5" height="5" fill="#8800ff"/><rect x="1341" y="505" width="5" height="5" fill="#9200ff"/><rect x="1346" y="505" width="5" height="5" fill="#9c00ff"/><rect x="1351" y="505" width="5" height="5" fill="#a700ff"/><rect x="1356" y="505" width="5" height="5" fill="#b200ff"/><rect x="1361" y="505" width="5" height="5" fill="#bd00ff"/><rect x="1246" y="510" width="5" height="5" fill="#001dff"/><rect x="1251" y="510" width="5" height="5" fill="#001cff"/><rect x="1256" y="510" width="5" height="5" fill="#001aff"/><rect x="1261" y="510" width="5" height="5" fill="#0418ff"/><rect x="1266" y="510" width="5" height="5" fill="#0c16ff"/><rect x="1271" y="510" width="5" height="5" fill="#1414ff"/><rect x="1276" y="510" width="5" height="5" fill="#1c12ff"/><rect x="1281" y="510" width="5" height="5" fill="#2510ff"/><rect x="1286" y="510" width="5" height="5" fill="#2d0eff"/><rect x="1291" y="510" width="5" height="5" fill="#350cff"/><rect x="1296" y="510" width="5" height="5" fill="#3e0aff"/><rect x="1301" y="510" width="5" height="5" fill="#4708ff"/><rect x="1306" y="510" width="5" height="5" fill="#5006ff"/><rect x="1311" y="510" width="5" height="5" fill="#5903ff"/><rect x="1316" y="510" width="5" height="5" fill="#6201ff"/><rect x="1321" y="510" width="5" height="5" fill="#6b00ff"/><rect x="1326" y="510" width="5" height="5" fill="#7500ff"/><rect x="1331" y="510" width="5" height="5" fill="#7f00ff"/><rect x="1336" y="510" width="5" height="5" fill="#8900ff"/><rect x="1341" y="510" width="5" height="5" fill="#9300ff"/><rect x="1346" y="510" width="5" height="5" fill="#9d00ff"/><rect x="1246" y="515" width="5" height="5" fill="#0018ff"/><rect x="1251" y="515" width="5" height="5" fill="#0016ff"/><rect x="1256" y="515" width="5" height="5" fill="#0015ff"/><rect x="1261" y="515" width="5" height="5" fill="#0713ff"/><rect x="1266" y="515" width="5" height="5" fill="#0f11ff"/><rect x="1271" y="515" width="5" height="5" fill="#170fff"/><rect x="1276" y="515" width="5" height="5" fill="#1f0dff"/><rect x="1281" y="515" width="5" height="5" fill="#270bff"/><rect x="1286" y="515" width="5" height="5" fill="#2f09ff"/><rect x="1291" y="515" width="5" height="5" fill="#3807ff"/><rect x="1296" y="515" width="5" height="5" fill="#4005ff"/><rect x="1301" y="515" width="5" height="5" fill="#4902ff"/><rect x="1306" y="515" width="5" height="5" fill="#5200ff"/><rect x="1311" y="515" width="5" height="5" fill="#5b00ff"/><rect x="1316" y="515" width="5" height="5" fill="#6400ff"/><rect x="1321" y="515" width="5" height="5" fill="#6d00ff"/><rect x="1326" y="515" width="5" height="5" fill="#7600ff"/><rect x="1331" y="515" width="5" height="5" fill="#8000ff"/><rect x="1336" y="515" width="5" height="5" fill="#8a00ff"/><rect x="1246" y="520" width="5" height="5" fill="#0013ff"/><rect x="1251" y="520" width="5" height="5" fill="#0011ff"/><rect x="1256" y="520" width="5" height="5" fill="#0210ff"/><rect x="1261" y="520" width="5" height="5" fill="#0a0eff"/><rect x="1266" y="520" width="5" height="5" fill="#110cff"/><rect x="1271" y="520" width="5" height="5" fill="#190aff"/><rect x="1276" y="520" width="5" height="5" fill="#2108ff"/><rect x="1281" y="520" width="5" height="5" fill="#2906ff"/><rect x="1286" y="520" width="5" height="5" fill="#3104ff"/><rect x="1291" y="520" width="5" height="5" fill="#3a02ff"/><rect x="1296" y="520" width="5" height="5" fill="#4200ff"/><rect x="1301" y="520" width="5" height="5" fill="#4b00ff"/><rect x="1306" y="520" width="5" height="5" fill="#5300ff"/><rect x="1311" y="520" width="5" height="5" fill="#5c00ff"/><rect x="1316" y="520" width="5" height="5" fill="#6500ff"/><rect x="1321" y="520" width="5" height="5" fill="#6e00ff"/><rect x="1241" y="525" width="5" height="5" fill="#0010ff"/><rect x="1246" y="525" width="5" height="5" fill="#000eff"/><rect x="1251" y="525" width="5" height="5" fill="#000dff"/><rect x="1256" y="525" width="5" height="5" fill="#050bff"/><rect x="1261" y="525" width="5" height="5" fill="#0c09ff"/><rect x="1266" y="525" width="5" height="5" fill="#1407ff"/><rect x="1271" y="525" width="5" height="5" fill="#1c05ff"/><rect x="1276" y="525" width="5" height="5" fill="#2303ff"/><rect x="1281" y="525" width="5" height="5" fill="#2b01ff"/><rect x="1286" y="525" width="5" height="5" fill="#3300ff"/><rect x="1291" y="525" width="5" height="5" fill="#3c00ff"/><rect x="1296" y="525" width="5" height="5" fill="#4400ff"/><rect x="1301" y="525" width="5" height="5" fill="#4c00ff"/><rect x="1306" y="525" width="5" height="5" fill="#5500ff"/><rect x="1311" y="525" width="5" height="5" fill="#5e00ff"/><rect x="1241" y="530" width="5" height="5" fill="#000bff"/><rect x="1246" y="530" width="5" height="5" fill="#000aff"/><rect x="1251" y="530" width="5" height="5" fill="#0008ff"/><rect x="1256" y="530" width="5" height="5" fill="#0806ff"/><rect x="1261" y="530" width="5" height="5" fill="#0f04ff"/><rect x="1266" y="530" width="5" height="5" fill="#1602ff"/><rect x="1271" y="530" width="5" height="5" fill="#1e00ff"/><rect x="1276" y="530" width="5" height="5" fill="#2600ff"/><rect x="1281" y="530" width="5" height="5" fill="#2e00ff"/><rect x="1286" y="530" width="5" height="5" fill="#3600ff"/><rect x="1291" y="530" width="5" height="5" fill="#3e00ff"/><rect x="1296" y="530" width="5" height="5" fill="#4600ff"/><rect x="1301" y="530" width="5" height="5" fill="#4e00ff"/><rect x="1241" y="535" width="5" height="5" fill="#0007ff"/><rect x="1246" y="535" width="5" height="5" fill="#0005ff"/><rect x="1251" y="535" width="5" height="5" fill="#0303ff"/><rect x="1256" y="535" width="5" height="5" fill="#0a01ff"/><rect x="1261" y="535" width="5" height="5" fill="#1100ff"/><rect x="1266" y="535" width="5" height="5" fill="#1900ff"/><rect x="1271" y="535" width="5" height="5" fill="#2000ff"/><rect x="1276" y="535" width="5" height="5" fill="#2800ff"/><rect x="1281" y="535" width="5" height="5" fill="#3000ff"/><rect x="1286" y="535" width="5" height="5" fill="#3800ff"/><rect x="1241" y="540" width="5" height="5" fill="#0002ff"/><rect x="1246" y="540" width="5" height="5" fill="#0000ff"/><rect x="1251" y="540" width="5" height="5" fill="#0500ff"/><rect x="1256" y="540" width="5" height="5" fill="#0c00ff"/><rect x="1261" y="540" width="5" height="5" fill="#1400ff"/><rect x="1266" y="540" width="5" height="5" fill="#1b00ff"/><rect x="1271" y="540" width="5" height="5" fill="#2300ff"/><rect x="1276" y="540" width="5" height="5" fill="#2a00ff"/><rect x="1241" y="545" width="5" height="5" fill="#0000ff"/><rect x="1246" y="545" width="5" height="5" fill="#0100ff"/><rect x="1251" y="545" width="5" height="5" fill="#0800ff"/><rect x="1256" y="545" width="5" height="5" fill="#0f00ff"/><rect x="1261" y="545" width="5" height="5" fill="#1600ff"/><rect x="1266" y="545" width="5" height="5" fill="#1d00ff"/></g></g><rect x="1126.7" y="52" width="690.3" height="528.2" fill="none" stroke="#a0a0a0" stroke-width="1.6"/><line x1="1121" y1="580.1" x2="1126.7" y2="580.1" stroke="#e6e6e6" stroke-width="1.5"/><text x="1111.5" y="585.4" font-size="15.43" textLength="8.5" lengthAdjust="spacingAndGlyphs" fill="#e0e0e0" font-weight="normal" >0</text><line x1="1121" y1="517.4" x2="1126.7" y2="517.4" stroke="#e6e6e6" stroke-width="1.5"/><text x="1098.5" y="522.7" font-size="15.43" textLength="21.5" lengthAdjust="spacingAndGlyphs" fill="#e0e0e0" font-weight="normal" >0,1</text><line x1="1121" y1="454.6" x2="1126.7" y2="454.6" stroke="#e6e6e6" stroke-width="1.5"/><text x="1098.5" y="459.9" font-size="15.43" textLength="21.5" lengthAdjust="spacingAndGlyphs" fill="#e0e0e0" font-weight="normal" >0,2</text><line x1="1121" y1="391.9" x2="1126.7" y2="391.9" stroke="#e6e6e6" stroke-width="1.5"/><text x="1098.5" y="397.2" font-size="15.43" textLength="21.5" lengthAdjust="spacingAndGlyphs" fill="#e0e0e0" font-weight="normal" >0,3</text><line x1="1121" y1="329.1" x2="1126.7" y2="329.1" stroke="#e6e6e6" stroke-width="1.5"/><text x="1098.5" y="334.4" font-size="15.43" textLength="21.5" lengthAdjust="spacingAndGlyphs" fill="#e0e0e0" font-weight="normal" >0,4</text><line x1="1121" y1="266.4" x2="1126.7" y2="266.4" stroke="#e6e6e6" stroke-width="1.5"/><text x="1098.5" y="271.7" font-size="15.43" textLength="21.5" lengthAdjust="spacingAndGlyphs" fill="#e0e0e0" font-weight="normal" >0,5</text><line x1="1121" y1="203.7" x2="1126.7" y2="203.7" stroke="#e6e6e6" stroke-width="1.5"/><text x="1098.5" y="209.0" font-size="15.43" textLength="21.5" lengthAdjust="spacingAndGlyphs" fill="#e0e0e0" font-weight="normal" >0,6</text><line x1="1121" y1="140.9" x2="1126.7" y2="140.9" stroke="#e6e6e6" stroke-width="1.5"/><text x="1098.5" y="146.2" font-size="15.43" textLength="21.5" lengthAdjust="spacingAndGlyphs" fill="#e0e0e0" font-weight="normal" >0,7</text><line x1="1121" y1="78.2" x2="1126.7" y2="78.2" stroke="#e6e6e6" stroke-width="1.5"/><text x="1098.5" y="83.5" font-size="15.43" textLength="21.5" lengthAdjust="spacingAndGlyphs" fill="#e0e0e0" font-weight="normal" >0,8</text><line x1="1126.7" y1="580.1" x2="1126.7" y2="586" stroke="#e6e6e6" stroke-width="1.5"/><text x="1123.0" y="604.2" font-size="15.43" textLength="8.5" lengthAdjust="spacingAndGlyphs" fill="#e0e0e0" font-weight="normal" >0</text><line x1="1208.7" y1="580.1" x2="1208.7" y2="586" stroke="#e6e6e6" stroke-width="1.5"/><text x="1198.5" y="604.2" font-size="15.43" textLength="21.5" lengthAdjust="spacingAndGlyphs" fill="#e0e0e0" font-weight="normal" >0,1</text><line x1="1290.7" y1="580.1" x2="1290.7" y2="586" stroke="#e6e6e6" stroke-width="1.5"/><text x="1280.5" y="604.2" font-size="15.43" textLength="21.5" lengthAdjust="spacingAndGlyphs" fill="#e0e0e0" font-weight="normal" >0,2</text><line x1="1372.7" y1="580.1" x2="1372.7" y2="586" stroke="#e6e6e6" stroke-width="1.5"/><text x="1362.5" y="604.2" font-size="15.43" textLength="21.5" lengthAdjust="spacingAndGlyphs" fill="#e0e0e0" font-weight="normal" >0,3</text><line x1="1454.7" y1="580.1" x2="1454.7" y2="586" stroke="#e6e6e6" stroke-width="1.5"/><text x="1444.5" y="604.2" font-size="15.43" textLength="21.5" lengthAdjust="spacingAndGlyphs" fill="#e0e0e0" font-weight="normal" >0,4</text><line x1="1536.7" y1="580.1" x2="1536.7" y2="586" stroke="#e6e6e6" stroke-width="1.5"/><text x="1526.5" y="604.2" font-size="15.43" textLength="21.5" lengthAdjust="spacingAndGlyphs" fill="#e0e0e0" font-weight="normal" >0,5</text><line x1="1618.7" y1="580.1" x2="1618.7" y2="586" stroke="#e6e6e6" stroke-width="1.5"/><text x="1608.5" y="604.2" font-size="15.43" textLength="21.5" lengthAdjust="spacingAndGlyphs" fill="#e0e0e0" font-weight="normal" >0,6</text><line x1="1700.7" y1="580.1" x2="1700.7" y2="586" stroke="#e6e6e6" stroke-width="1.5"/><text x="1690.5" y="604.2" font-size="15.43" textLength="21.5" lengthAdjust="spacingAndGlyphs" fill="#e0e0e0" font-weight="normal" >0,7</text><line x1="1782.7" y1="580.1" x2="1782.7" y2="586" stroke="#e6e6e6" stroke-width="1.5"/><text x="1772.5" y="604.2" font-size="15.43" textLength="21.5" lengthAdjust="spacingAndGlyphs" fill="#e0e0e0" font-weight="normal" >0,8</text><rect x="1370.5" y="263.9" width="14" height="14" fill="none" stroke="#ececec" stroke-width="1.8"/><rect x="1428.3" y="263.0" width="14" height="14" fill="none" stroke="#ececec" stroke-width="1.8"/><rect x="1486.0" y="274.7" width="14" height="14" fill="none" stroke="#ececec" stroke-width="1.8"/><rect x="1508.5" y="297.0" width="14" height="14" fill="none" stroke="#ececec" stroke-width="1.8"/><rect x="1540.8" y="318.0" width="14" height="14" fill="none" stroke="#ececec" stroke-width="1.8"/><rect x="1398.9" y="304.1" width="14" height="14" fill="none" stroke="#ececec" stroke-width="1.8"/><rect x="1430.9" y="349.2" width="14" height="14" fill="none" stroke="#ececec" stroke-width="1.8"/><rect x="1448.0" y="344.0" width="14" height="14" fill="none" stroke="#ececec" stroke-width="1.8"/><rect x="1499.4" y="375.7" width="14" height="14" fill="none" stroke="#ececec" stroke-width="1.8"/><rect x="1559.8" y="372.6" width="14" height="14" fill="none" stroke="#ececec" stroke-width="1.8"/><rect x="1334.8" y="345.9" width="14" height="14" fill="none" stroke="#ececec" stroke-width="1.8"/><rect x="1290.2" y="403.5" width="14" height="14" fill="none" stroke="#ececec" stroke-width="1.8"/><rect x="1324.7" y="404.9" width="14" height="14" fill="none" stroke="#ececec" stroke-width="1.8"/><rect x="1339.6" y="413.8" width="14" height="14" fill="none" stroke="#ececec" stroke-width="1.8"/><rect x="1357.1" y="432.8" width="14" height="14" fill="none" stroke="#ececec" stroke-width="1.8"/><rect x="1426.9" y="416.7" width="14" height="14" fill="none" stroke="#ececec" stroke-width="1.8"/><rect x="1297.9" y="452.4" width="14" height="14" fill="none" stroke="#ececec" stroke-width="1.8"/><rect x="1277.0" y="483.2" width="14" height="14" fill="none" stroke="#ececec" stroke-width="1.8"/><circle cx="1396.8" cy="287.3" r="4.8" fill="#6a8a6a" stroke="#101010" stroke-width="1.6"/><circle cx="1448.9" cy="281.8" r="4.8" fill="#9aaa60" stroke="#101010" stroke-width="1.6"/><circle cx="1497.5" cy="290.6" r="4.8" fill="#e0b840" stroke="#101010" stroke-width="1.6"/><circle cx="1510.9" cy="308.4" r="4.8" fill="#d8a048" stroke="#101010" stroke-width="1.6"/><circle cx="1531.4" cy="322.8" r="4.8" fill="#c88048" stroke="#101010" stroke-width="1.6"/><circle cx="1415.8" cy="318.8" r="4.8" fill="#5a6a50" stroke="#101010" stroke-width="1.6"/><circle cx="1432.3" cy="355.6" r="4.8" fill="#b09a90" stroke="#101010" stroke-width="1.6"/><circle cx="1449" cy="348.3" r="4.8" fill="#6a5450" stroke="#101010" stroke-width="1.6"/><circle cx="1478.3" cy="374.7" r="4.8" fill="#c06880" stroke="#101010" stroke-width="1.6"/><circle cx="1532.8" cy="368.7" r="4.8" fill="#a04050" stroke="#101010" stroke-width="1.6"/><circle cx="1353.8" cy="356.8" r="4.8" fill="#7aaa98" stroke="#101010" stroke-width="1.6"/><circle cx="1307.8" cy="404.3" r="4.8" fill="#1a8a9a" stroke="#101010" stroke-width="1.6"/><circle cx="1336" cy="405.8" r="4.8" fill="#7a8098" stroke="#101010" stroke-width="1.6"/><circle cx="1346.2" cy="410.1" r="4.8" fill="#9a98b0" stroke="#101010" stroke-width="1.6"/><circle cx="1337.5" cy="422.5" r="4.8" fill="#000000" stroke="#101010" stroke-width="1.6"/><circle cx="1356.7" cy="425.2" r="4.8" fill="#6a5070" stroke="#101010" stroke-width="1.6"/><circle cx="1414.5" cy="408.8" r="4.8" fill="#a06088" stroke="#101010" stroke-width="1.6"/><circle cx="1307.8" cy="439.8" r="4.8" fill="#6a7098" stroke="#101010" stroke-width="1.6"/><circle cx="1289" cy="463.8" r="4.8" fill="#5a5a80" stroke="#101010" stroke-width="1.6"/><rect x="1376.5" y="364.9" width="14" height="14" fill="none" stroke="#000" stroke-width="3"/><rect x="1378.3" y="366.7" width="10.4" height="10.4" fill="none" stroke="#f0f0f0" stroke-width="1.2"/><circle cx="1383.5" cy="371.9" r="4.6" fill="#a0a0a0" stroke="#141414" stroke-width="1.4"/><rect x="1609.8" y="59.8" width="200.2" height="155" fill="url(#insL)"/><polygon points="1736.8,59.8 1810,59.8 1810,214.8 1683,214.8" fill="url(#insR)"/><rect x="1609.8" y="59.8" width="200.2" height="155" fill="none" stroke="#9a9a9a" stroke-width="1.8"/><rect x="1701.5" y="129.4" width="15" height="15" fill="none" stroke="#f4f4f4" stroke-width="2"/><circle cx="1758" cy="112.8" r="4.6" fill="#2a8a8a" stroke="#0a2a4a" stroke-width="1.4"/><rect x="1517" y="538" width="296.3" height="29.7" fill="#303030"/><text x="1550.5" y="560.9" font-size="21.86" textLength="230.5" lengthAdjust="spacingAndGlyphs" fill="#f2f2f2" font-weight="normal" >RGB Triplet: 0, 133, 163</text><rect x="363" y="636" width="1404" height="15" fill="#2b2b2b"/><rect x="363" y="650.8" width="1404" height="14.8" fill="#141414"/><rect x="363" y="636" width="10.8" height="29.6" fill="#060606"/><rect x="363" y="665.60" width="1404" height="28.15" fill="#404040"/><rect x="363" y="665.60" width="10.8" height="28.15" fill="#262626"/><rect x="363" y="693.65" width="1404" height="28.15" fill="#7b7b7b"/><rect x="363" y="693.65" width="10.8" height="28.15" fill="#2c2c2c"/><rect x="363" y="721.70" width="1404" height="28.15" fill="#404040"/><rect x="363" y="721.70" width="10.8" height="28.15" fill="#262626"/><rect x="363" y="749.75" width="1404" height="28.15" fill="#7b7b7b"/><rect x="363" y="749.75" width="10.8" height="28.15" fill="#2c2c2c"/><rect x="363" y="777.80" width="1404" height="28.15" fill="#404040"/><rect x="363" y="777.80" width="10.8" height="28.15" fill="#262626"/><rect x="363" y="805.85" width="1404" height="28.15" fill="#7b7b7b"/><rect x="363" y="805.85" width="10.8" height="28.15" fill="#2c2c2c"/><rect x="363" y="833.90" width="1404" height="28.15" fill="#404040"/><rect x="363" y="833.90" width="10.8" height="28.15" fill="#262626"/><text x="467.4" y="656.9" font-size="16.00" textLength="30.8" lengthAdjust="spacingAndGlyphs" fill="#f4f4f4" font-weight="normal" stroke="#f4f4f4" stroke-width="0.45">White</text><text x="513.9" y="656.9" font-size="16.00" textLength="41.5" lengthAdjust="spacingAndGlyphs" fill="#f4f4f4" font-weight="normal" stroke="#f4f4f4" stroke-width="0.45">Gray 80</text><text x="561.6" y="656.9" font-size="16.00" textLength="41.5" lengthAdjust="spacingAndGlyphs" fill="#f4f4f4" font-weight="normal" stroke="#f4f4f4" stroke-width="0.45">Gray 65</text><text x="609.9" y="656.9" font-size="16.00" textLength="41.5" lengthAdjust="spacingAndGlyphs" fill="#f4f4f4" font-weight="normal" stroke="#f4f4f4" stroke-width="0.45">Gray 50</text><text x="658.2" y="656.9" font-size="16.00" textLength="41.5" lengthAdjust="spacingAndGlyphs" fill="#f4f4f4" font-weight="normal" stroke="#f4f4f4" stroke-width="0.45">Gray 35</text><text x="706.5" y="656.9" font-size="16.00" textLength="30.2" lengthAdjust="spacingAndGlyphs" fill="#f4f4f4" font-weight="normal" stroke="#f4f4f4" stroke-width="0.45">Black</text><text x="741.6" y="656.9" font-size="16.00" textLength="52.2" lengthAdjust="spacingAndGlyphs" fill="#f4f4f4" font-weight="normal" stroke="#f4f4f4" stroke-width="0.45">Dark Skin</text><text x="798.4" y="656.9" font-size="16.00" textLength="54.7" lengthAdjust="spacingAndGlyphs" fill="#f4f4f4" font-weight="normal" stroke="#f4f4f4" stroke-width="0.45">Light Skin</text><text x="857.1" y="656.9" font-size="16.00" textLength="47.8" lengthAdjust="spacingAndGlyphs" fill="#f4f4f4" font-weight="normal" stroke="#f4f4f4" stroke-width="0.45">Blue Sky</text><text x="908.5" y="656.9" font-size="16.00" textLength="39.6" lengthAdjust="spacingAndGlyphs" fill="#f4f4f4" font-weight="normal" stroke="#f4f4f4" stroke-width="0.45">Foliage</text><text x="953.7" y="656.9" font-size="16.00" textLength="64.1" lengthAdjust="spacingAndGlyphs" fill="#f4f4f4" font-weight="normal" stroke="#f4f4f4" stroke-width="0.45">Blue Flower</text><text x="1024.3" y="656.9" font-size="16.00" textLength="70.4" lengthAdjust="spacingAndGlyphs" fill="#f4f4f4" font-weight="normal" stroke="#f4f4f4" stroke-width="0.45">Bluish Green</text><text x="1099.4" y="656.9" font-size="16.00" textLength="39.6" lengthAdjust="spacingAndGlyphs" fill="#f4f4f4" font-weight="normal" stroke="#f4f4f4" stroke-width="0.45">Orange</text><text x="1145.9" y="656.9" font-size="16.00" textLength="72.9" lengthAdjust="spacingAndGlyphs" fill="#f4f4f4" font-weight="normal" stroke="#f4f4f4" stroke-width="0.45">Purplish Blue</text><text x="1223.4" y="656.9" font-size="16.00" textLength="74.8" lengthAdjust="spacingAndGlyphs" fill="#f4f4f4" font-weight="normal" stroke="#f4f4f4" stroke-width="0.45">Moderate Red</text><text x="1307.2" y="656.9" font-size="16.00" textLength="35.2" lengthAdjust="spacingAndGlyphs" fill="#f4f4f4" font-weight="normal" stroke="#f4f4f4" stroke-width="0.45">Purple</text><text x="1349.1" y="656.9" font-size="16.00" textLength="71.0" lengthAdjust="spacingAndGlyphs" fill="#f4f4f4" font-weight="normal" stroke="#f4f4f4" stroke-width="0.45">Yellow Green</text><text x="1426.6" y="656.9" font-size="16.00" textLength="77.7" lengthAdjust="spacingAndGlyphs" fill="#f4f4f4" font-weight="normal" stroke="#f4f4f4" stroke-width="0.45">Orange Yellow</text><text x="1510.8" y="656.9" font-size="16.00" textLength="24.5" lengthAdjust="spacingAndGlyphs" fill="#f4f4f4" font-weight="normal" stroke="#f4f4f4" stroke-width="0.45">Blue</text><text x="1549.7" y="656.9" font-size="16.00" textLength="32.7" lengthAdjust="spacingAndGlyphs" fill="#f4f4f4" font-weight="normal" stroke="#f4f4f4" stroke-width="0.45">Green</text><text x="1590.0" y="656.9" font-size="16.00" textLength="21.4" lengthAdjust="spacingAndGlyphs" fill="#f4f4f4" font-weight="normal" stroke="#f4f4f4" stroke-width="0.45">Red</text><text x="1629.3" y="656.9" font-size="16.00" textLength="35.2" lengthAdjust="spacingAndGlyphs" fill="#f4f4f4" font-weight="normal" stroke="#f4f4f4" stroke-width="0.45">Yellow</text><text x="1675.9" y="656.9" font-size="16.00" textLength="45.9" lengthAdjust="spacingAndGlyphs" fill="#f4f4f4" font-weight="normal" stroke="#f4f4f4" stroke-width="0.45">Magenta</text><text x="1730.9" y="656.9" font-size="16.00" textLength="27.7" lengthAdjust="spacingAndGlyphs" fill="#f4f4f4" font-weight="normal" stroke="#f4f4f4" stroke-width="0.45">Cyan</text><text x="377.0" y="686.9" font-size="18.29" textLength="46.7" lengthAdjust="spacingAndGlyphs" fill="#eeeeee" font-weight="normal" >x: CIE31</text><text x="467.4" y="686.9" font-size="18.29" textLength="23.7" lengthAdjust="spacingAndGlyphs" fill="#eeeeee" font-weight="normal" >0,31</text><text x="513.9" y="686.9" font-size="18.29" textLength="23.7" lengthAdjust="spacingAndGlyphs" fill="#eeeeee" font-weight="normal" >0,31</text><text x="561.6" y="686.9" font-size="18.29" textLength="23.7" lengthAdjust="spacingAndGlyphs" fill="#eeeeee" font-weight="normal" >0,31</text><text x="609.9" y="686.9" font-size="18.29" textLength="23.7" lengthAdjust="spacingAndGlyphs" fill="#eeeeee" font-weight="normal" >0,31</text><text x="658.2" y="686.9" font-size="18.29" textLength="23.7" lengthAdjust="spacingAndGlyphs" fill="#eeeeee" font-weight="normal" >0,31</text><text x="706.5" y="686.9" font-size="18.29" textLength="23.7" lengthAdjust="spacingAndGlyphs" fill="#eeeeee" font-weight="normal" >0,26</text><text x="741.6" y="686.9" font-size="18.29" textLength="23.7" lengthAdjust="spacingAndGlyphs" fill="#eeeeee" font-weight="normal" >0,39</text><text x="798.4" y="686.9" font-size="18.29" textLength="23.7" lengthAdjust="spacingAndGlyphs" fill="#eeeeee" font-weight="normal" >0,37</text><text x="857.1" y="686.9" font-size="18.29" textLength="23.7" lengthAdjust="spacingAndGlyphs" fill="#eeeeee" font-weight="normal" >0,25</text><text x="908.5" y="686.9" font-size="18.29" textLength="23.7" lengthAdjust="spacingAndGlyphs" fill="#eeeeee" font-weight="normal" >0,35</text><text x="953.7" y="686.9" font-size="18.29" textLength="23.7" lengthAdjust="spacingAndGlyphs" fill="#eeeeee" font-weight="normal" >0,27</text><text x="1024.3" y="686.9" font-size="18.29" textLength="23.7" lengthAdjust="spacingAndGlyphs" fill="#eeeeee" font-weight="normal" >0,28</text><text x="1099.4" y="686.9" font-size="18.29" textLength="23.7" lengthAdjust="spacingAndGlyphs" fill="#eeeeee" font-weight="normal" >0,49</text><text x="1145.9" y="686.9" font-size="18.29" textLength="23.7" lengthAdjust="spacingAndGlyphs" fill="#eeeeee" font-weight="normal" >0,22</text><text x="1223.4" y="686.9" font-size="18.29" textLength="23.7" lengthAdjust="spacingAndGlyphs" fill="#eeeeee" font-weight="normal" >0,43</text><text x="1307.2" y="686.9" font-size="18.29" textLength="23.7" lengthAdjust="spacingAndGlyphs" fill="#eeeeee" font-weight="normal" >0,28</text><text x="1349.1" y="686.9" font-size="18.29" textLength="23.7" lengthAdjust="spacingAndGlyphs" fill="#eeeeee" font-weight="normal" >0,39</text><text x="1426.6" y="686.9" font-size="18.29" textLength="23.7" lengthAdjust="spacingAndGlyphs" fill="#eeeeee" font-weight="normal" >0,47</text><text x="1510.8" y="686.9" font-size="18.29" textLength="23.7" lengthAdjust="spacingAndGlyphs" fill="#eeeeee" font-weight="normal" >0,20</text><text x="1549.7" y="686.9" font-size="18.29" textLength="23.7" lengthAdjust="spacingAndGlyphs" fill="#eeeeee" font-weight="normal" >0,33</text><text x="1590.0" y="686.9" font-size="18.29" textLength="23.7" lengthAdjust="spacingAndGlyphs" fill="#eeeeee" font-weight="normal" >0,49</text><text x="1629.3" y="686.9" font-size="18.29" textLength="23.7" lengthAdjust="spacingAndGlyphs" fill="#eeeeee" font-weight="normal" >0,45</text><text x="1675.9" y="686.9" font-size="18.29" textLength="23.7" lengthAdjust="spacingAndGlyphs" fill="#eeeeee" font-weight="normal" >0,35</text><text x="1730.9" y="686.9" font-size="18.29" textLength="23.7" lengthAdjust="spacingAndGlyphs" fill="#eeeeee" font-weight="normal" >0,22</text><text x="377.0" y="714.9" font-size="18.29" textLength="46.7" lengthAdjust="spacingAndGlyphs" fill="#eeeeee" font-weight="normal" >y: CIE31</text><text x="467.4" y="714.9" font-size="18.29" textLength="23.7" lengthAdjust="spacingAndGlyphs" fill="#eeeeee" font-weight="normal" >0,33</text><text x="513.9" y="714.9" font-size="18.29" textLength="23.7" lengthAdjust="spacingAndGlyphs" fill="#eeeeee" font-weight="normal" >0,33</text><text x="561.6" y="714.9" font-size="18.29" textLength="23.7" lengthAdjust="spacingAndGlyphs" fill="#eeeeee" font-weight="normal" >0,33</text><text x="609.9" y="714.9" font-size="18.29" textLength="23.7" lengthAdjust="spacingAndGlyphs" fill="#eeeeee" font-weight="normal" >0,33</text><text x="658.2" y="714.9" font-size="18.29" textLength="23.7" lengthAdjust="spacingAndGlyphs" fill="#eeeeee" font-weight="normal" >0,33</text><text x="706.5" y="714.9" font-size="18.29" textLength="23.7" lengthAdjust="spacingAndGlyphs" fill="#eeeeee" font-weight="normal" >0,25</text><text x="741.6" y="714.9" font-size="18.29" textLength="23.7" lengthAdjust="spacingAndGlyphs" fill="#eeeeee" font-weight="normal" >0,37</text><text x="798.4" y="714.9" font-size="18.29" textLength="23.7" lengthAdjust="spacingAndGlyphs" fill="#eeeeee" font-weight="normal" >0,36</text><text x="857.1" y="714.9" font-size="18.29" textLength="23.7" lengthAdjust="spacingAndGlyphs" fill="#eeeeee" font-weight="normal" >0,28</text><text x="908.5" y="714.9" font-size="18.29" textLength="23.7" lengthAdjust="spacingAndGlyphs" fill="#eeeeee" font-weight="normal" >0,42</text><text x="953.7" y="714.9" font-size="18.29" textLength="23.7" lengthAdjust="spacingAndGlyphs" fill="#eeeeee" font-weight="normal" >0,27</text><text x="1024.3" y="714.9" font-size="18.29" textLength="23.7" lengthAdjust="spacingAndGlyphs" fill="#eeeeee" font-weight="normal" >0,35</text><text x="1099.4" y="714.9" font-size="18.29" textLength="23.7" lengthAdjust="spacingAndGlyphs" fill="#eeeeee" font-weight="normal" >0,41</text><text x="1145.9" y="714.9" font-size="18.29" textLength="23.7" lengthAdjust="spacingAndGlyphs" fill="#eeeeee" font-weight="normal" >0,22</text><text x="1223.4" y="714.9" font-size="18.29" textLength="23.7" lengthAdjust="spacingAndGlyphs" fill="#eeeeee" font-weight="normal" >0,33</text><text x="1307.2" y="714.9" font-size="18.29" textLength="23.7" lengthAdjust="spacingAndGlyphs" fill="#eeeeee" font-weight="normal" >0,25</text><text x="1349.1" y="714.9" font-size="18.29" textLength="23.7" lengthAdjust="spacingAndGlyphs" fill="#eeeeee" font-weight="normal" >0,47</text><text x="1426.6" y="714.9" font-size="18.29" textLength="23.7" lengthAdjust="spacingAndGlyphs" fill="#eeeeee" font-weight="normal" >0,43</text><text x="1510.8" y="714.9" font-size="18.29" textLength="23.7" lengthAdjust="spacingAndGlyphs" fill="#eeeeee" font-weight="normal" >0,18</text><text x="1549.7" y="714.9" font-size="18.29" textLength="23.7" lengthAdjust="spacingAndGlyphs" fill="#eeeeee" font-weight="normal" >0,47</text><text x="1590.0" y="714.9" font-size="18.29" textLength="23.7" lengthAdjust="spacingAndGlyphs" fill="#eeeeee" font-weight="normal" >0,34</text><text x="1629.3" y="714.9" font-size="18.29" textLength="23.7" lengthAdjust="spacingAndGlyphs" fill="#eeeeee" font-weight="normal" >0,46</text><text x="1675.9" y="714.9" font-size="18.29" textLength="23.7" lengthAdjust="spacingAndGlyphs" fill="#eeeeee" font-weight="normal" >0,27</text><text x="1730.9" y="714.9" font-size="18.29" textLength="23.7" lengthAdjust="spacingAndGlyphs" fill="#eeeeee" font-weight="normal" >0,28</text><text x="377.0" y="743.0" font-size="18.29" textLength="8.1" lengthAdjust="spacingAndGlyphs" fill="#eeeeee" font-weight="normal" >Y</text><text x="467.4" y="743.0" font-size="18.29" textLength="37.3" lengthAdjust="spacingAndGlyphs" fill="#eeeeee" font-weight="normal" >257,72</text><text x="513.9" y="743.0" font-size="18.29" textLength="37.3" lengthAdjust="spacingAndGlyphs" fill="#eeeeee" font-weight="normal" >203,30</text><text x="561.6" y="743.0" font-size="18.29" textLength="37.3" lengthAdjust="spacingAndGlyphs" fill="#eeeeee" font-weight="normal" >162,76</text><text x="609.9" y="743.0" font-size="18.29" textLength="37.3" lengthAdjust="spacingAndGlyphs" fill="#eeeeee" font-weight="normal" >125,21</text><text x="658.2" y="743.0" font-size="18.29" textLength="30.5" lengthAdjust="spacingAndGlyphs" fill="#eeeeee" font-weight="normal" >87,41</text><text x="706.5" y="743.0" font-size="18.29" textLength="23.7" lengthAdjust="spacingAndGlyphs" fill="#eeeeee" font-weight="normal" >0,19</text><text x="741.6" y="743.0" font-size="18.29" textLength="30.5" lengthAdjust="spacingAndGlyphs" fill="#eeeeee" font-weight="normal" >25,27</text><text x="798.4" y="743.0" font-size="18.29" textLength="30.5" lengthAdjust="spacingAndGlyphs" fill="#eeeeee" font-weight="normal" >88,00</text><text x="857.1" y="743.0" font-size="18.29" textLength="30.5" lengthAdjust="spacingAndGlyphs" fill="#eeeeee" font-weight="normal" >50,47</text><text x="908.5" y="743.0" font-size="18.29" textLength="30.5" lengthAdjust="spacingAndGlyphs" fill="#eeeeee" font-weight="normal" >30,42</text><text x="953.7" y="743.0" font-size="18.29" textLength="30.5" lengthAdjust="spacingAndGlyphs" fill="#eeeeee" font-weight="normal" >64,72</text><text x="1024.3" y="743.0" font-size="18.29" textLength="37.3" lengthAdjust="spacingAndGlyphs" fill="#eeeeee" font-weight="normal" >101,63</text><text x="1099.4" y="743.0" font-size="18.29" textLength="30.5" lengthAdjust="spacingAndGlyphs" fill="#eeeeee" font-weight="normal" >70,46</text><text x="1145.9" y="743.0" font-size="18.29" textLength="30.5" lengthAdjust="spacingAndGlyphs" fill="#eeeeee" font-weight="normal" >36,00</text><text x="1223.4" y="743.0" font-size="18.29" textLength="30.5" lengthAdjust="spacingAndGlyphs" fill="#eeeeee" font-weight="normal" >50,44</text><text x="1307.2" y="743.0" font-size="18.29" textLength="30.5" lengthAdjust="spacingAndGlyphs" fill="#eeeeee" font-weight="normal" >19,61</text><text x="1349.1" y="743.0" font-size="18.29" textLength="30.5" lengthAdjust="spacingAndGlyphs" fill="#eeeeee" font-weight="normal" >96,84</text><text x="1426.6" y="743.0" font-size="18.29" textLength="36.4" lengthAdjust="spacingAndGlyphs" fill="#eeeeee" font-weight="normal" >103,11</text><text x="1510.8" y="743.0" font-size="18.29" textLength="30.5" lengthAdjust="spacingAndGlyphs" fill="#eeeeee" font-weight="normal" >21,66</text><text x="1549.7" y="743.0" font-size="18.29" textLength="30.5" lengthAdjust="spacingAndGlyphs" fill="#eeeeee" font-weight="normal" >51,18</text><text x="1590.0" y="743.0" font-size="18.29" textLength="30.5" lengthAdjust="spacingAndGlyphs" fill="#eeeeee" font-weight="normal" >31,25</text><text x="1629.3" y="743.0" font-size="18.29" textLength="37.3" lengthAdjust="spacingAndGlyphs" fill="#eeeeee" font-weight="normal" >138,46</text><text x="1675.9" y="743.0" font-size="18.29" textLength="30.5" lengthAdjust="spacingAndGlyphs" fill="#eeeeee" font-weight="normal" >54,61</text><text x="1730.9" y="743.0" font-size="18.29" textLength="30.5" lengthAdjust="spacingAndGlyphs" fill="#eeeeee" font-weight="normal" >50,58</text><text x="377.0" y="771.0" font-size="18.29" textLength="80.6" lengthAdjust="spacingAndGlyphs" fill="#eeeeee" font-weight="normal" >Target x:CIE31</text><text x="467.4" y="771.0" font-size="18.29" textLength="23.7" lengthAdjust="spacingAndGlyphs" fill="#eeeeee" font-weight="normal" >0,31</text><text x="513.9" y="771.0" font-size="18.29" textLength="23.7" lengthAdjust="spacingAndGlyphs" fill="#eeeeee" font-weight="normal" >0,31</text><text x="561.6" y="771.0" font-size="18.29" textLength="23.7" lengthAdjust="spacingAndGlyphs" fill="#eeeeee" font-weight="normal" >0,31</text><text x="609.9" y="771.0" font-size="18.29" textLength="23.7" lengthAdjust="spacingAndGlyphs" fill="#eeeeee" font-weight="normal" >0,31</text><text x="658.2" y="771.0" font-size="18.29" textLength="23.7" lengthAdjust="spacingAndGlyphs" fill="#eeeeee" font-weight="normal" >0,31</text><text x="706.5" y="771.0" font-size="18.29" textLength="23.7" lengthAdjust="spacingAndGlyphs" fill="#eeeeee" font-weight="normal" >0,31</text><text x="741.6" y="771.0" font-size="18.29" textLength="23.7" lengthAdjust="spacingAndGlyphs" fill="#eeeeee" font-weight="normal" >0,40</text><text x="798.4" y="771.0" font-size="18.29" textLength="23.7" lengthAdjust="spacingAndGlyphs" fill="#eeeeee" font-weight="normal" >0,38</text><text x="857.1" y="771.0" font-size="18.29" textLength="23.7" lengthAdjust="spacingAndGlyphs" fill="#eeeeee" font-weight="normal" >0,25</text><text x="908.5" y="771.0" font-size="18.29" textLength="23.7" lengthAdjust="spacingAndGlyphs" fill="#eeeeee" font-weight="normal" >0,34</text><text x="953.7" y="771.0" font-size="18.29" textLength="23.7" lengthAdjust="spacingAndGlyphs" fill="#eeeeee" font-weight="normal" >0,27</text><text x="1024.3" y="771.0" font-size="18.29" textLength="23.7" lengthAdjust="spacingAndGlyphs" fill="#eeeeee" font-weight="normal" >0,26</text><text x="1099.4" y="771.0" font-size="18.29" textLength="23.7" lengthAdjust="spacingAndGlyphs" fill="#eeeeee" font-weight="normal" >0,51</text><text x="1145.9" y="771.0" font-size="18.29" textLength="23.7" lengthAdjust="spacingAndGlyphs" fill="#eeeeee" font-weight="normal" >0,22</text><text x="1223.4" y="771.0" font-size="18.29" textLength="23.7" lengthAdjust="spacingAndGlyphs" fill="#eeeeee" font-weight="normal" >0,46</text><text x="1307.2" y="771.0" font-size="18.29" textLength="23.7" lengthAdjust="spacingAndGlyphs" fill="#eeeeee" font-weight="normal" >0,29</text><text x="1349.1" y="771.0" font-size="18.29" textLength="23.7" lengthAdjust="spacingAndGlyphs" fill="#eeeeee" font-weight="normal" >0,38</text><text x="1426.6" y="771.0" font-size="18.29" textLength="23.7" lengthAdjust="spacingAndGlyphs" fill="#eeeeee" font-weight="normal" >0,47</text><text x="1510.8" y="771.0" font-size="18.29" textLength="23.7" lengthAdjust="spacingAndGlyphs" fill="#eeeeee" font-weight="normal" >0,19</text><text x="1549.7" y="771.0" font-size="18.29" textLength="23.7" lengthAdjust="spacingAndGlyphs" fill="#eeeeee" font-weight="normal" >0,31</text><text x="1590.0" y="771.0" font-size="18.29" textLength="23.7" lengthAdjust="spacingAndGlyphs" fill="#eeeeee" font-weight="normal" >0,54</text><text x="1629.3" y="771.0" font-size="18.29" textLength="23.7" lengthAdjust="spacingAndGlyphs" fill="#eeeeee" font-weight="normal" >0,45</text><text x="1675.9" y="771.0" font-size="18.29" textLength="23.7" lengthAdjust="spacingAndGlyphs" fill="#eeeeee" font-weight="normal" >0,37</text><text x="1730.9" y="771.0" font-size="18.29" textLength="23.7" lengthAdjust="spacingAndGlyphs" fill="#eeeeee" font-weight="normal" >0,21</text><text x="377.0" y="799.1" font-size="18.29" textLength="80.6" lengthAdjust="spacingAndGlyphs" fill="#eeeeee" font-weight="normal" >Target y:CIE31</text><text x="467.4" y="799.1" font-size="18.29" textLength="23.7" lengthAdjust="spacingAndGlyphs" fill="#eeeeee" font-weight="normal" >0,33</text><text x="513.9" y="799.1" font-size="18.29" textLength="23.7" lengthAdjust="spacingAndGlyphs" fill="#eeeeee" font-weight="normal" >0,33</text><text x="561.6" y="799.1" font-size="18.29" textLength="23.7" lengthAdjust="spacingAndGlyphs" fill="#eeeeee" font-weight="normal" >0,33</text><text x="609.9" y="799.1" font-size="18.29" textLength="23.7" lengthAdjust="spacingAndGlyphs" fill="#eeeeee" font-weight="normal" >0,33</text><text x="658.2" y="799.1" font-size="18.29" textLength="23.7" lengthAdjust="spacingAndGlyphs" fill="#eeeeee" font-weight="normal" >0,33</text><text x="706.5" y="799.1" font-size="18.29" textLength="23.7" lengthAdjust="spacingAndGlyphs" fill="#eeeeee" font-weight="normal" >0,33</text><text x="741.6" y="799.1" font-size="18.29" textLength="23.7" lengthAdjust="spacingAndGlyphs" fill="#eeeeee" font-weight="normal" >0,36</text><text x="798.4" y="799.1" font-size="18.29" textLength="23.7" lengthAdjust="spacingAndGlyphs" fill="#eeeeee" font-weight="normal" >0,36</text><text x="857.1" y="799.1" font-size="18.29" textLength="23.7" lengthAdjust="spacingAndGlyphs" fill="#eeeeee" font-weight="normal" >0,27</text><text x="908.5" y="799.1" font-size="18.29" textLength="23.7" lengthAdjust="spacingAndGlyphs" fill="#eeeeee" font-weight="normal" >0,43</text><text x="953.7" y="799.1" font-size="18.29" textLength="23.7" lengthAdjust="spacingAndGlyphs" fill="#eeeeee" font-weight="normal" >0,25</text><text x="1024.3" y="799.1" font-size="18.29" textLength="23.7" lengthAdjust="spacingAndGlyphs" fill="#eeeeee" font-weight="normal" >0,36</text><text x="1099.4" y="799.1" font-size="18.29" textLength="23.7" lengthAdjust="spacingAndGlyphs" fill="#eeeeee" font-weight="normal" >0,41</text><text x="1145.9" y="799.1" font-size="18.29" textLength="23.7" lengthAdjust="spacingAndGlyphs" fill="#eeeeee" font-weight="normal" >0,19</text><text x="1223.4" y="799.1" font-size="18.29" textLength="23.7" lengthAdjust="spacingAndGlyphs" fill="#eeeeee" font-weight="normal" >0,31</text><text x="1307.2" y="799.1" font-size="18.29" textLength="23.7" lengthAdjust="spacingAndGlyphs" fill="#eeeeee" font-weight="normal" >0,22</text><text x="1349.1" y="799.1" font-size="18.29" textLength="23.7" lengthAdjust="spacingAndGlyphs" fill="#eeeeee" font-weight="normal" >0,49</text><text x="1426.6" y="799.1" font-size="18.29" textLength="23.7" lengthAdjust="spacingAndGlyphs" fill="#eeeeee" font-weight="normal" >0,44</text><text x="1510.8" y="799.1" font-size="18.29" textLength="23.7" lengthAdjust="spacingAndGlyphs" fill="#eeeeee" font-weight="normal" >0,14</text><text x="1549.7" y="799.1" font-size="18.29" textLength="23.7" lengthAdjust="spacingAndGlyphs" fill="#eeeeee" font-weight="normal" >0,49</text><text x="1590.0" y="799.1" font-size="18.29" textLength="23.7" lengthAdjust="spacingAndGlyphs" fill="#eeeeee" font-weight="normal" >0,32</text><text x="1629.3" y="799.1" font-size="18.29" textLength="23.7" lengthAdjust="spacingAndGlyphs" fill="#eeeeee" font-weight="normal" >0,47</text><text x="1675.9" y="799.1" font-size="18.29" textLength="23.7" lengthAdjust="spacingAndGlyphs" fill="#eeeeee" font-weight="normal" >0,25</text><text x="1730.9" y="799.1" font-size="18.29" textLength="23.7" lengthAdjust="spacingAndGlyphs" fill="#eeeeee" font-weight="normal" >0,27</text><text x="377.0" y="827.1" font-size="18.29" textLength="45.1" lengthAdjust="spacingAndGlyphs" fill="#eeeeee" font-weight="normal" >Target Y</text><text x="467.4" y="827.1" font-size="18.29" textLength="37.3" lengthAdjust="spacingAndGlyphs" fill="#eeeeee" font-weight="normal" >257,72</text><text x="513.9" y="827.1" font-size="18.29" textLength="37.3" lengthAdjust="spacingAndGlyphs" fill="#eeeeee" font-weight="normal" >203,93</text><text x="561.6" y="827.1" font-size="18.29" textLength="37.3" lengthAdjust="spacingAndGlyphs" fill="#eeeeee" font-weight="normal" >164,32</text><text x="609.9" y="827.1" font-size="18.29" textLength="37.3" lengthAdjust="spacingAndGlyphs" fill="#eeeeee" font-weight="normal" >126,55</text><text x="658.2" y="827.1" font-size="18.29" textLength="30.5" lengthAdjust="spacingAndGlyphs" fill="#eeeeee" font-weight="normal" >88,12</text><text x="706.5" y="827.1" font-size="18.29" textLength="23.7" lengthAdjust="spacingAndGlyphs" fill="#eeeeee" font-weight="normal" >0,00</text><text x="741.6" y="827.1" font-size="18.29" textLength="30.5" lengthAdjust="spacingAndGlyphs" fill="#eeeeee" font-weight="normal" >25,96</text><text x="798.4" y="827.1" font-size="18.29" textLength="30.5" lengthAdjust="spacingAndGlyphs" fill="#eeeeee" font-weight="normal" >89,93</text><text x="857.1" y="827.1" font-size="18.29" textLength="30.5" lengthAdjust="spacingAndGlyphs" fill="#eeeeee" font-weight="normal" >48,19</text><text x="908.5" y="827.1" font-size="18.29" textLength="30.5" lengthAdjust="spacingAndGlyphs" fill="#eeeeee" font-weight="normal" >33,59</text><text x="953.7" y="827.1" font-size="18.29" textLength="30.5" lengthAdjust="spacingAndGlyphs" fill="#eeeeee" font-weight="normal" >60,10</text><text x="1024.3" y="827.1" font-size="18.29" textLength="37.3" lengthAdjust="spacingAndGlyphs" fill="#eeeeee" font-weight="normal" >107,91</text><text x="1099.4" y="827.1" font-size="18.29" textLength="30.5" lengthAdjust="spacingAndGlyphs" fill="#eeeeee" font-weight="normal" >73,06</text><text x="1145.9" y="827.1" font-size="18.29" textLength="30.5" lengthAdjust="spacingAndGlyphs" fill="#eeeeee" font-weight="normal" >30,29</text><text x="1223.4" y="827.1" font-size="18.29" textLength="30.5" lengthAdjust="spacingAndGlyphs" fill="#eeeeee" font-weight="normal" >48,13</text><text x="1307.2" y="827.1" font-size="18.29" textLength="30.5" lengthAdjust="spacingAndGlyphs" fill="#eeeeee" font-weight="normal" >17,20</text><text x="1349.1" y="827.1" font-size="18.29" textLength="36.4" lengthAdjust="spacingAndGlyphs" fill="#eeeeee" font-weight="normal" >110,19</text><text x="1426.6" y="827.1" font-size="18.29" textLength="37.3" lengthAdjust="spacingAndGlyphs" fill="#eeeeee" font-weight="normal" >109,56</text><text x="1510.8" y="827.1" font-size="18.29" textLength="30.5" lengthAdjust="spacingAndGlyphs" fill="#eeeeee" font-weight="normal" >16,09</text><text x="1549.7" y="827.1" font-size="18.29" textLength="30.5" lengthAdjust="spacingAndGlyphs" fill="#eeeeee" font-weight="normal" >59,21</text><text x="1590.0" y="827.1" font-size="18.29" textLength="30.5" lengthAdjust="spacingAndGlyphs" fill="#eeeeee" font-weight="normal" >30,06</text><text x="1629.3" y="827.1" font-size="18.29" textLength="37.3" lengthAdjust="spacingAndGlyphs" fill="#eeeeee" font-weight="normal" >151,96</text><text x="1675.9" y="827.1" font-size="18.29" textLength="30.5" lengthAdjust="spacingAndGlyphs" fill="#eeeeee" font-weight="normal" >48,52</text><text x="1730.9" y="827.1" font-size="18.29" textLength="30.5" lengthAdjust="spacingAndGlyphs" fill="#eeeeee" font-weight="normal" >50,04</text><text x="377.0" y="855.2" font-size="18.29" textLength="46.7" lengthAdjust="spacingAndGlyphs" fill="#eeeeee" font-weight="normal" >ΔE 2000</text><text x="467.4" y="855.2" font-size="18.29" textLength="23.7" lengthAdjust="spacingAndGlyphs" fill="#eeeeee" font-weight="normal" >0,89</text><text x="513.9" y="855.2" font-size="18.29" textLength="23.7" lengthAdjust="spacingAndGlyphs" fill="#eeeeee" font-weight="normal" >0,51</text><text x="561.6" y="855.2" font-size="18.29" textLength="23.7" lengthAdjust="spacingAndGlyphs" fill="#eeeeee" font-weight="normal" >0,47</text><text x="609.9" y="855.2" font-size="18.29" textLength="23.7" lengthAdjust="spacingAndGlyphs" fill="#eeeeee" font-weight="normal" >0,55</text><text x="658.2" y="855.2" font-size="18.29" textLength="23.7" lengthAdjust="spacingAndGlyphs" fill="#eeeeee" font-weight="normal" >0,63</text><text x="706.5" y="855.2" font-size="18.29" textLength="23.7" lengthAdjust="spacingAndGlyphs" fill="#eeeeee" font-weight="normal" >1,06</text><text x="741.6" y="855.2" font-size="18.29" textLength="23.7" lengthAdjust="spacingAndGlyphs" fill="#eeeeee" font-weight="normal" >2,02</text><text x="798.4" y="855.2" font-size="18.29" textLength="23.7" lengthAdjust="spacingAndGlyphs" fill="#eeeeee" font-weight="normal" >2,16</text><text x="857.1" y="855.2" font-size="18.29" textLength="23.7" lengthAdjust="spacingAndGlyphs" fill="#eeeeee" font-weight="normal" >2,71</text><text x="908.5" y="855.2" font-size="18.29" textLength="23.7" lengthAdjust="spacingAndGlyphs" fill="#eeeeee" font-weight="normal" >4,20</text><text x="953.7" y="855.2" font-size="18.29" textLength="23.7" lengthAdjust="spacingAndGlyphs" fill="#eeeeee" font-weight="normal" >4,84</text><text x="1024.3" y="855.2" font-size="18.29" textLength="23.7" lengthAdjust="spacingAndGlyphs" fill="#eeeeee" font-weight="normal" >4,36</text><text x="1099.4" y="855.2" font-size="18.29" textLength="23.7" lengthAdjust="spacingAndGlyphs" fill="#eeeeee" font-weight="normal" >2,38</text><text x="1145.9" y="855.2" font-size="18.29" textLength="23.7" lengthAdjust="spacingAndGlyphs" fill="#eeeeee" font-weight="normal" >5,50</text><text x="1223.4" y="855.2" font-size="18.29" textLength="23.7" lengthAdjust="spacingAndGlyphs" fill="#eeeeee" font-weight="normal" >4,66</text><text x="1307.2" y="855.2" font-size="18.29" textLength="23.7" lengthAdjust="spacingAndGlyphs" fill="#eeeeee" font-weight="normal" >5,71</text><text x="1349.1" y="855.2" font-size="18.29" textLength="23.7" lengthAdjust="spacingAndGlyphs" fill="#eeeeee" font-weight="normal" >5,89</text><text x="1426.6" y="855.2" font-size="18.29" textLength="23.7" lengthAdjust="spacingAndGlyphs" fill="#eeeeee" font-weight="normal" >2,18</text><text x="1510.8" y="855.2" font-size="18.29" textLength="23.7" lengthAdjust="spacingAndGlyphs" fill="#eeeeee" font-weight="normal" >8,15</text><text x="1549.7" y="855.2" font-size="18.29" textLength="23.7" lengthAdjust="spacingAndGlyphs" fill="#eeeeee" font-weight="normal" >6,03</text><text x="1590.0" y="855.2" font-size="18.29" textLength="23.7" lengthAdjust="spacingAndGlyphs" fill="#eeeeee" font-weight="normal" >4,48</text><text x="1629.3" y="855.2" font-size="18.29" textLength="23.7" lengthAdjust="spacingAndGlyphs" fill="#eeeeee" font-weight="normal" >4,14</text><text x="1675.9" y="855.2" font-size="18.29" textLength="23.7" lengthAdjust="spacingAndGlyphs" fill="#eeeeee" font-weight="normal" >6,40</text><text x="1730.9" y="855.2" font-size="18.29" textLength="23.7" lengthAdjust="spacingAndGlyphs" fill="#eeeeee" font-weight="normal" >1,77</text><text x="29.5" y="684.0" font-size="32.14" textLength="236.8" lengthAdjust="spacingAndGlyphs" fill="#f0f0f0" font-weight="normal" >Current Reading</text><text x="29.0" y="729.7" font-size="26.00" textLength="110.6" lengthAdjust="spacingAndGlyphs" fill="#f0f0f0" font-weight="normal" >x: 0,2205</text><text x="29.0" y="773.8" font-size="26.00" textLength="110.6" lengthAdjust="spacingAndGlyphs" fill="#f0f0f0" font-weight="normal" >y: 0,2772</text><text x="29.0" y="818.2" font-size="26.00" textLength="120.0" lengthAdjust="spacingAndGlyphs" fill="#f0f0f0" font-weight="normal" >fL: 14,762</text><text x="29.0" y="862.6" font-size="26.00" textLength="173.0" lengthAdjust="spacingAndGlyphs" fill="#f0f0f0" font-weight="normal" >cd/m²: 50,578</text>
</svg>
</body></html>
